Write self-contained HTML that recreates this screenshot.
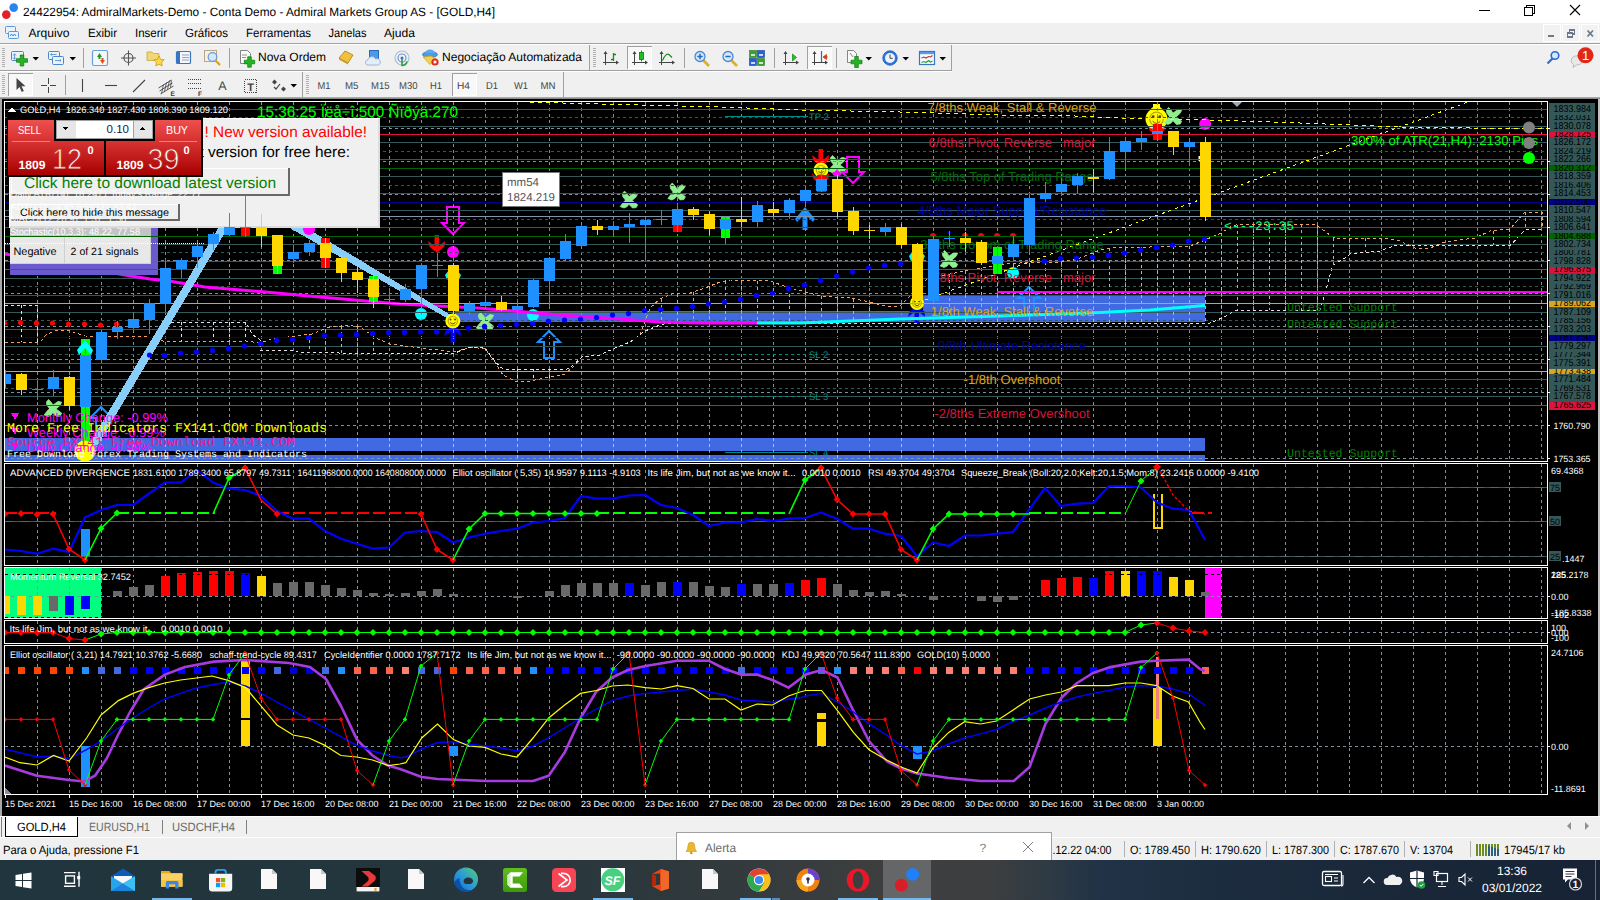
<!DOCTYPE html>
<html lang="pt"><head><meta charset="utf-8"><title>24422954: AdmiralMarkets-Demo - [GOLD,H4]</title>
<style>
html,body{margin:0;padding:0;background:#000;width:1600px;height:900px;overflow:hidden}
svg{display:block;position:absolute;left:0;top:0}
text{white-space:pre}
</style></head><body>
<svg width="1600" height="900" viewBox="0 0 1600 900" shape-rendering="crispEdges" text-rendering="geometricPrecision"><defs><clipPath id="mainclip"><rect x="5" y="102" width="1542" height="359"/></clipPath><clipPath id="s1"><rect x="5" y="464" width="1542" height="101"/></clipPath><clipPath id="s2"><rect x="5" y="568" width="1542" height="50"/></clipPath><clipPath id="s3"><rect x="5" y="621" width="1542" height="22"/></clipPath><clipPath id="s4"><rect x="5" y="646" width="1542" height="148"/></clipPath></defs>
<rect x="0" y="97" width="1600" height="719" fill="#a8a8a8"/>
<rect x="2" y="99" width="1596" height="717" fill="#000000"/>
<g clip-path="url(#mainclip)">
<!-- bands -->
<rect x="5" y="438" width="1200" height="13" fill="#4169e1"/>
<rect x="5" y="455" width="1200" height="6" fill="#4169e1"/>
<rect x="455" y="311" width="473" height="11" fill="#4169e1"/>
<rect x="923" y="296" width="282" height="26" fill="#4169e1"/>
<g shape-rendering="geometricPrecision">
<!-- symbols -->
<polygon points="48.5,399.5 50.8,401.8 55.5,408.5 61.7,413.2 60.2,416.0 56.5,416.4 51.5,411.2 46.8,405.0 46.4,402.0" fill="#90ee90" stroke="#90ee90" stroke-width="0.8" stroke-linejoin="round"/><polygon points="61.7,402.2 60.0,405.4 54.5,410.2 51.2,415.0 48.0,416.4 44.2,415.0 46.8,411.4 52.8,405.2 58.0,401.4" fill="#90ee90" stroke="#90ee90" stroke-width="0.8" stroke-linejoin="round"/>
<path d="M96,436 H106 V418 H112.0 L101,407 L90.0,418 H96 Z" fill="none" stroke="#1e90ff" stroke-width="2" stroke-linejoin="miter"/>
<circle cx="309" cy="229" r="6" fill="#ff00ff"/>
<path d="M447,207 H459 V223 H464.0 L453,234 L442.0,223 H447 Z" fill="none" stroke="#ff00ff" stroke-width="2" stroke-linejoin="miter"/>
<path d="M434.5,235 H439 V246 L445,241 L444.5,246.5 L437.5,252.5 H436.5 L429.5,246.5 L428,241 L434.5,246 Z" fill="#ff0000"/>
<circle cx="453" cy="252" r="6" fill="#ff00ff"/>
<path d="M453,265 L461,275 L459,280 L453,273 L447,280 L445,275 Z" fill="#00ffff"/>
<circle cx="421" cy="314" r="6" fill="#00ffff"/>
<path d="M450.5,342.5 H455 V331.5 L461,336.5 L460.5,331.0 L453.5,325.0 H452.5 L445.5,331.0 L444,336.5 L450.5,331.5 Z" fill="#0000ff"/>
<polygon points="480.5,312.5 482.8,314.8 487.5,321.5 493.7,326.2 492.2,329.0 488.5,329.4 483.5,324.2 478.8,318.0 478.4,315.0" fill="#90ee90" stroke="#90ee90" stroke-width="0.8" stroke-linejoin="round"/><polygon points="493.7,315.2 492.0,318.4 486.5,323.2 483.2,328.0 480.0,329.4 476.2,328.0 478.8,324.4 484.8,318.2 490.0,314.4" fill="#90ee90" stroke="#90ee90" stroke-width="0.8" stroke-linejoin="round"/>
<circle cx="533" cy="315" r="6" fill="#00ffff"/>
<path d="M544,358 H554 V342 H560.0 L549,331 L538.0,342 H544 Z" fill="none" stroke="#1e90ff" stroke-width="2" stroke-linejoin="miter"/>
<polygon points="624.5,191.1 626.8,193.4 631.5,200.1 637.7,204.8 636.2,207.6 632.5,208.0 627.5,202.8 622.8,196.6 622.4,193.6" fill="#90ee90" stroke="#90ee90" stroke-width="0.8" stroke-linejoin="round"/><polygon points="637.7,193.8 636.0,197.0 630.5,201.8 627.2,206.6 624.0,208.0 620.2,206.6 622.8,203.0 628.8,196.8 634.0,193.0" fill="#90ee90" stroke="#90ee90" stroke-width="0.8" stroke-linejoin="round"/>
<polygon points="672.2,183.0 674.5,185.3 679.2,192.0 685.4,196.7 683.9,199.5 680.2,199.9 675.2,194.7 670.5,188.5 670.1,185.5" fill="#90ee90" stroke="#90ee90" stroke-width="0.8" stroke-linejoin="round"/><polygon points="685.4,185.7 683.7,188.9 678.2,193.7 674.9,198.5 671.7,199.9 667.9,198.5 670.5,194.9 676.5,188.7 681.7,184.9" fill="#90ee90" stroke="#90ee90" stroke-width="0.8" stroke-linejoin="round"/>
<path d="M802.5,230 V213 H807.5 V230 Z" fill="#1e90ff"/><path d="M805,207 L815,219 L813,222 L805,214 L797,222 L795,219 Z" fill="#1e90ff"/>
<path d="M818.5,149 H823 V160 L829,155 L828.5,160.5 L821.5,166.5 H820.5 L813.5,160.5 L812,155 L818.5,160 Z" fill="#ff0000"/>
<path d="M818.5,167.5 H823 V178.5 L829,173.5 L828.5,179.0 L821.5,185.0 H820.5 L813.5,179.0 L812,173.5 L818.5,178.5 Z" fill="#ff0000"/>
<circle cx="821" cy="170" r="7.5" fill="#ffff00"/><circle cx="821" cy="170" r="4.65" fill="none" stroke="#c8a000" stroke-width="1.2"/><circle cx="818.75" cy="168.5" r="0.9750000000000001" fill="#604000"/><circle cx="823.25" cy="168.5" r="0.9750000000000001" fill="#604000"/><path d="M818.375,171.5 Q821,174.5 823.625,171.5" stroke="#604000" stroke-width="1" fill="none"/>
<circle cx="837" cy="171" r="5.5" fill="#ff00ff"/>
<polygon points="832.5,155.5 834.8,157.8 839.5,164.5 845.7,169.2 844.2,172.0 840.5,172.4 835.5,167.2 830.8,161.0 830.4,158.0" fill="#90ee90" stroke="#90ee90" stroke-width="0.8" stroke-linejoin="round"/><polygon points="845.7,158.2 844.0,161.4 838.5,166.2 835.2,171.0 832.0,172.4 828.2,171.0 830.8,167.4 836.8,161.2 842.0,157.4" fill="#90ee90" stroke="#90ee90" stroke-width="0.8" stroke-linejoin="round"/>
<path d="M847,157 H859 V172 H864.0 L853,183 L842.0,172 H847 Z" fill="none" stroke="#ff00ff" stroke-width="2" stroke-linejoin="miter"/>
<path d="M917,246 L925,256 L923,261 L917,254 L911,261 L909,256 Z" fill="#00ffff"/>
<polygon points="944.5,250.5 946.8,252.8 951.5,259.5 957.7,264.2 956.2,267.0 952.5,267.4 947.5,262.2 942.8,256.0 942.4,253.0" fill="#90ee90" stroke="#90ee90" stroke-width="0.8" stroke-linejoin="round"/><polygon points="957.7,253.2 956.0,256.4 950.5,261.2 947.2,266.0 944.0,267.4 940.2,266.0 942.8,262.4 948.8,256.2 954.0,252.4" fill="#90ee90" stroke="#90ee90" stroke-width="0.8" stroke-linejoin="round"/>
<circle cx="1013" cy="273" r="6" fill="#00ffff"/>
<path d="M914.5,323.0 H919 V312.0 L925,317.0 L924.5,311.5 L917.5,305.5 H916.5 L909.5,311.5 L908,317.0 L914.5,312.0 Z" fill="#0000ff"/>
<circle cx="917" cy="303" r="7" fill="#ffff00"/><circle cx="917" cy="303" r="4.34" fill="none" stroke="#c8a000" stroke-width="1.2"/><circle cx="914.9" cy="301.6" r="0.91" fill="#604000"/><circle cx="919.1" cy="301.6" r="0.91" fill="#604000"/><path d="M914.55,304.4 Q917,307.2 919.45,304.4" stroke="#604000" stroke-width="1" fill="none"/>
<path d="M1024,313 H1034 V298 H1040.0 L1029,287 L1018.0,298 H1024 Z" fill="none" stroke="#1e90ff" stroke-width="2" stroke-linejoin="miter"/>
<path d="M1154.5,119 H1159 V130 L1165,125 L1164.5,130.5 L1157.5,136.5 H1156.5 L1149.5,130.5 L1148,125 L1154.5,130 Z" fill="#ff0000"/>
<circle cx="1156.5" cy="119" r="11" fill="#ffff00"/><circle cx="1156.5" cy="119" r="6.82" fill="none" stroke="#c8a000" stroke-width="1.2"/><circle cx="1153.2" cy="116.8" r="1.4300000000000002" fill="#604000"/><circle cx="1159.8" cy="116.8" r="1.4300000000000002" fill="#604000"/><path d="M1152.65,121.2 Q1156.5,125.6 1160.35,121.2" stroke="#604000" stroke-width="1" fill="none"/>
<path d="M1150,109.5 h13 l-3,-2.5 v-3 h-7 v3 z" fill="#ffff00"/>
<polygon points="1168.5,107.5 1170.8,109.8 1175.5,116.5 1181.7,121.2 1180.2,124.0 1176.5,124.4 1171.5,119.2 1166.8,113.0 1166.4,110.0" fill="#90ee90" stroke="#90ee90" stroke-width="0.8" stroke-linejoin="round"/><polygon points="1181.7,110.2 1180.0,113.4 1174.5,118.2 1171.2,123.0 1168.0,124.4 1164.2,123.0 1166.8,119.4 1172.8,113.2 1178.0,109.4" fill="#90ee90" stroke="#90ee90" stroke-width="0.8" stroke-linejoin="round"/>
<circle cx="1205.2" cy="124" r="6" fill="#ff00ff"/>
<rect x="1198.5" y="156" width="1.5" height="5" fill="#fff"/>
<path d="M1231,101 h12 l-6,6 z" fill="#a0a8b0"/>
</g>
<!-- grid -->
<line x1="5" y1="128.5" x2="1547" y2="128.5" stroke="#7f90a4" stroke-width="1" stroke-dasharray="3,3"/>
<line x1="5" y1="161.5" x2="1547" y2="161.5" stroke="#7f90a4" stroke-width="1" stroke-dasharray="3,3"/>
<line x1="5" y1="194.5" x2="1547" y2="194.5" stroke="#7f90a4" stroke-width="1" stroke-dasharray="3,3"/>
<line x1="5" y1="227.5" x2="1547" y2="227.5" stroke="#7f90a4" stroke-width="1" stroke-dasharray="3,3"/>
<line x1="5" y1="260.5" x2="1547" y2="260.5" stroke="#7f90a4" stroke-width="1" stroke-dasharray="3,3"/>
<line x1="5" y1="293.5" x2="1547" y2="293.5" stroke="#7f90a4" stroke-width="1" stroke-dasharray="3,3"/>
<line x1="5" y1="326.5" x2="1547" y2="326.5" stroke="#7f90a4" stroke-width="1" stroke-dasharray="3,3"/>
<line x1="5" y1="359.5" x2="1547" y2="359.5" stroke="#7f90a4" stroke-width="1" stroke-dasharray="3,3"/>
<line x1="5" y1="392.5" x2="1547" y2="392.5" stroke="#7f90a4" stroke-width="1" stroke-dasharray="3,3"/>
<line x1="5" y1="425.5" x2="1547" y2="425.5" stroke="#7f90a4" stroke-width="1" stroke-dasharray="3,3"/>
<line x1="5" y1="458.5" x2="1547" y2="458.5" stroke="#7f90a4" stroke-width="1" stroke-dasharray="3,3"/>
<line x1="37.5" y1="102" x2="37.5" y2="461" stroke="#7f90a4" stroke-width="1" stroke-dasharray="3,3"/>
<line x1="69.5" y1="102" x2="69.5" y2="461" stroke="#7f90a4" stroke-width="1" stroke-dasharray="3,3"/>
<line x1="101.5" y1="102" x2="101.5" y2="461" stroke="#7f90a4" stroke-width="1" stroke-dasharray="3,3"/>
<line x1="133.5" y1="102" x2="133.5" y2="461" stroke="#7f90a4" stroke-width="1" stroke-dasharray="3,3"/>
<line x1="165.5" y1="102" x2="165.5" y2="461" stroke="#7f90a4" stroke-width="1" stroke-dasharray="3,3"/>
<line x1="197.5" y1="102" x2="197.5" y2="461" stroke="#7f90a4" stroke-width="1" stroke-dasharray="3,3"/>
<line x1="229.5" y1="102" x2="229.5" y2="461" stroke="#7f90a4" stroke-width="1" stroke-dasharray="3,3"/>
<line x1="261.5" y1="102" x2="261.5" y2="461" stroke="#7f90a4" stroke-width="1" stroke-dasharray="3,3"/>
<line x1="293.5" y1="102" x2="293.5" y2="461" stroke="#7f90a4" stroke-width="1" stroke-dasharray="3,3"/>
<line x1="325.5" y1="102" x2="325.5" y2="461" stroke="#7f90a4" stroke-width="1" stroke-dasharray="3,3"/>
<line x1="357.5" y1="102" x2="357.5" y2="461" stroke="#7f90a4" stroke-width="1" stroke-dasharray="3,3"/>
<line x1="389.5" y1="102" x2="389.5" y2="461" stroke="#7f90a4" stroke-width="1" stroke-dasharray="3,3"/>
<line x1="421.5" y1="102" x2="421.5" y2="461" stroke="#7f90a4" stroke-width="1" stroke-dasharray="3,3"/>
<line x1="453.5" y1="102" x2="453.5" y2="461" stroke="#7f90a4" stroke-width="1" stroke-dasharray="3,3"/>
<line x1="485.5" y1="102" x2="485.5" y2="461" stroke="#7f90a4" stroke-width="1" stroke-dasharray="3,3"/>
<line x1="517.5" y1="102" x2="517.5" y2="461" stroke="#7f90a4" stroke-width="1" stroke-dasharray="3,3"/>
<line x1="549.5" y1="102" x2="549.5" y2="461" stroke="#7f90a4" stroke-width="1" stroke-dasharray="3,3"/>
<line x1="581.5" y1="102" x2="581.5" y2="461" stroke="#7f90a4" stroke-width="1" stroke-dasharray="3,3"/>
<line x1="613.5" y1="102" x2="613.5" y2="461" stroke="#7f90a4" stroke-width="1" stroke-dasharray="3,3"/>
<line x1="645.5" y1="102" x2="645.5" y2="461" stroke="#7f90a4" stroke-width="1" stroke-dasharray="3,3"/>
<line x1="677.5" y1="102" x2="677.5" y2="461" stroke="#7f90a4" stroke-width="1" stroke-dasharray="3,3"/>
<line x1="709.5" y1="102" x2="709.5" y2="461" stroke="#7f90a4" stroke-width="1" stroke-dasharray="3,3"/>
<line x1="741.5" y1="102" x2="741.5" y2="461" stroke="#7f90a4" stroke-width="1" stroke-dasharray="3,3"/>
<line x1="773.5" y1="102" x2="773.5" y2="461" stroke="#7f90a4" stroke-width="1" stroke-dasharray="3,3"/>
<line x1="805.5" y1="102" x2="805.5" y2="461" stroke="#7f90a4" stroke-width="1" stroke-dasharray="3,3"/>
<line x1="837.5" y1="102" x2="837.5" y2="461" stroke="#7f90a4" stroke-width="1" stroke-dasharray="3,3"/>
<line x1="869.5" y1="102" x2="869.5" y2="461" stroke="#7f90a4" stroke-width="1" stroke-dasharray="3,3"/>
<line x1="901.5" y1="102" x2="901.5" y2="461" stroke="#7f90a4" stroke-width="1" stroke-dasharray="3,3"/>
<line x1="933.5" y1="102" x2="933.5" y2="461" stroke="#7f90a4" stroke-width="1" stroke-dasharray="3,3"/>
<line x1="965.5" y1="102" x2="965.5" y2="461" stroke="#7f90a4" stroke-width="1" stroke-dasharray="3,3"/>
<line x1="997.5" y1="102" x2="997.5" y2="461" stroke="#7f90a4" stroke-width="1" stroke-dasharray="3,3"/>
<line x1="1029.5" y1="102" x2="1029.5" y2="461" stroke="#7f90a4" stroke-width="1" stroke-dasharray="3,3"/>
<line x1="1061.5" y1="102" x2="1061.5" y2="461" stroke="#7f90a4" stroke-width="1" stroke-dasharray="3,3"/>
<line x1="1093.5" y1="102" x2="1093.5" y2="461" stroke="#7f90a4" stroke-width="1" stroke-dasharray="3,3"/>
<line x1="1125.5" y1="102" x2="1125.5" y2="461" stroke="#7f90a4" stroke-width="1" stroke-dasharray="3,3"/>
<line x1="1157.5" y1="102" x2="1157.5" y2="461" stroke="#7f90a4" stroke-width="1" stroke-dasharray="3,3"/>
<line x1="1189.5" y1="102" x2="1189.5" y2="461" stroke="#7f90a4" stroke-width="1" stroke-dasharray="3,3"/>
<line x1="1221.5" y1="102" x2="1221.5" y2="461" stroke="#7f90a4" stroke-width="1" stroke-dasharray="3,3"/>
<line x1="1253.5" y1="102" x2="1253.5" y2="461" stroke="#7f90a4" stroke-width="1" stroke-dasharray="3,3"/>
<line x1="1285.5" y1="102" x2="1285.5" y2="461" stroke="#7f90a4" stroke-width="1" stroke-dasharray="3,3"/>
<line x1="1317.5" y1="102" x2="1317.5" y2="461" stroke="#7f90a4" stroke-width="1" stroke-dasharray="3,3"/>
<line x1="1349.5" y1="102" x2="1349.5" y2="461" stroke="#7f90a4" stroke-width="1" stroke-dasharray="3,3"/>
<line x1="1381.5" y1="102" x2="1381.5" y2="461" stroke="#7f90a4" stroke-width="1" stroke-dasharray="3,3"/>
<line x1="1413.5" y1="102" x2="1413.5" y2="461" stroke="#7f90a4" stroke-width="1" stroke-dasharray="3,3"/>
<line x1="1445.5" y1="102" x2="1445.5" y2="461" stroke="#7f90a4" stroke-width="1" stroke-dasharray="3,3"/>
<line x1="1477.5" y1="102" x2="1477.5" y2="461" stroke="#7f90a4" stroke-width="1" stroke-dasharray="3,3"/>
<line x1="1509.5" y1="102" x2="1509.5" y2="461" stroke="#7f90a4" stroke-width="1" stroke-dasharray="3,3"/>
<line x1="1541.5" y1="102" x2="1541.5" y2="461" stroke="#7f90a4" stroke-width="1" stroke-dasharray="3,3"/>
<!-- murrey grid -->
<line x1="5" y1="109.5" x2="1547" y2="109.5" stroke="#345858" stroke-width="1"/>
<line x1="5" y1="117.5" x2="1547" y2="117.5" stroke="#345858" stroke-width="1" stroke-dasharray="3,3"/>
<line x1="5" y1="126.5" x2="1547" y2="126.5" stroke="#345858" stroke-width="1"/>
<line x1="5" y1="142.5" x2="1547" y2="142.5" stroke="#345858" stroke-width="1"/>
<line x1="5" y1="151.5" x2="1547" y2="151.5" stroke="#345858" stroke-width="1" stroke-dasharray="3,3"/>
<line x1="5" y1="159.5" x2="1547" y2="159.5" stroke="#345858" stroke-width="1"/>
<line x1="5" y1="176.5" x2="1547" y2="176.5" stroke="#345858" stroke-width="1"/>
<line x1="5" y1="185.5" x2="1547" y2="185.5" stroke="#345858" stroke-width="1" stroke-dasharray="3,3"/>
<line x1="5" y1="193.5" x2="1547" y2="193.5" stroke="#345858" stroke-width="1"/>
<line x1="5" y1="210.5" x2="1547" y2="210.5" stroke="#345858" stroke-width="1"/>
<line x1="5" y1="219.5" x2="1547" y2="219.5" stroke="#345858" stroke-width="1" stroke-dasharray="3,3"/>
<line x1="5" y1="227.5" x2="1547" y2="227.5" stroke="#345858" stroke-width="1"/>
<line x1="5" y1="244.5" x2="1547" y2="244.5" stroke="#345858" stroke-width="1"/>
<line x1="5" y1="252.5" x2="1547" y2="252.5" stroke="#345858" stroke-width="1" stroke-dasharray="3,3"/>
<line x1="5" y1="261.5" x2="1547" y2="261.5" stroke="#345858" stroke-width="1"/>
<line x1="5" y1="278.5" x2="1547" y2="278.5" stroke="#345858" stroke-width="1"/>
<line x1="5" y1="286.5" x2="1547" y2="286.5" stroke="#345858" stroke-width="1" stroke-dasharray="3,3"/>
<line x1="5" y1="295.5" x2="1547" y2="295.5" stroke="#345858" stroke-width="1"/>
<line x1="5" y1="312.5" x2="1547" y2="312.5" stroke="#345858" stroke-width="1"/>
<line x1="5" y1="320.5" x2="1547" y2="320.5" stroke="#345858" stroke-width="1" stroke-dasharray="3,3"/>
<line x1="5" y1="329.5" x2="1547" y2="329.5" stroke="#345858" stroke-width="1"/>
<line x1="5" y1="346.5" x2="1547" y2="346.5" stroke="#345858" stroke-width="1"/>
<line x1="5" y1="354.5" x2="1547" y2="354.5" stroke="#345858" stroke-width="1" stroke-dasharray="3,3"/>
<line x1="5" y1="363.5" x2="1547" y2="363.5" stroke="#345858" stroke-width="1"/>
<line x1="5" y1="379.5" x2="1547" y2="379.5" stroke="#345858" stroke-width="1"/>
<line x1="5" y1="388.5" x2="1547" y2="388.5" stroke="#345858" stroke-width="1" stroke-dasharray="3,3"/>
<line x1="5" y1="396.5" x2="1547" y2="396.5" stroke="#345858" stroke-width="1"/>
<line x1="37.5" y1="438" x2="37.5" y2="451" stroke="#7be8a8" stroke-width="1" stroke-dasharray="3,3"/>
<line x1="37.5" y1="455" x2="37.5" y2="461" stroke="#7be8a8" stroke-width="1" stroke-dasharray="3,3"/>
<line x1="69.5" y1="438" x2="69.5" y2="451" stroke="#7be8a8" stroke-width="1" stroke-dasharray="3,3"/>
<line x1="69.5" y1="455" x2="69.5" y2="461" stroke="#7be8a8" stroke-width="1" stroke-dasharray="3,3"/>
<line x1="101.5" y1="438" x2="101.5" y2="451" stroke="#7be8a8" stroke-width="1" stroke-dasharray="3,3"/>
<line x1="101.5" y1="455" x2="101.5" y2="461" stroke="#7be8a8" stroke-width="1" stroke-dasharray="3,3"/>
<line x1="133.5" y1="438" x2="133.5" y2="451" stroke="#7be8a8" stroke-width="1" stroke-dasharray="3,3"/>
<line x1="133.5" y1="455" x2="133.5" y2="461" stroke="#7be8a8" stroke-width="1" stroke-dasharray="3,3"/>
<line x1="165.5" y1="438" x2="165.5" y2="451" stroke="#7be8a8" stroke-width="1" stroke-dasharray="3,3"/>
<line x1="165.5" y1="455" x2="165.5" y2="461" stroke="#7be8a8" stroke-width="1" stroke-dasharray="3,3"/>
<line x1="197.5" y1="438" x2="197.5" y2="451" stroke="#7be8a8" stroke-width="1" stroke-dasharray="3,3"/>
<line x1="197.5" y1="455" x2="197.5" y2="461" stroke="#7be8a8" stroke-width="1" stroke-dasharray="3,3"/>
<line x1="229.5" y1="438" x2="229.5" y2="451" stroke="#7be8a8" stroke-width="1" stroke-dasharray="3,3"/>
<line x1="229.5" y1="455" x2="229.5" y2="461" stroke="#7be8a8" stroke-width="1" stroke-dasharray="3,3"/>
<line x1="261.5" y1="438" x2="261.5" y2="451" stroke="#7be8a8" stroke-width="1" stroke-dasharray="3,3"/>
<line x1="261.5" y1="455" x2="261.5" y2="461" stroke="#7be8a8" stroke-width="1" stroke-dasharray="3,3"/>
<line x1="293.5" y1="438" x2="293.5" y2="451" stroke="#7be8a8" stroke-width="1" stroke-dasharray="3,3"/>
<line x1="293.5" y1="455" x2="293.5" y2="461" stroke="#7be8a8" stroke-width="1" stroke-dasharray="3,3"/>
<line x1="325.5" y1="438" x2="325.5" y2="451" stroke="#7be8a8" stroke-width="1" stroke-dasharray="3,3"/>
<line x1="325.5" y1="455" x2="325.5" y2="461" stroke="#7be8a8" stroke-width="1" stroke-dasharray="3,3"/>
<line x1="357.5" y1="438" x2="357.5" y2="451" stroke="#7be8a8" stroke-width="1" stroke-dasharray="3,3"/>
<line x1="357.5" y1="455" x2="357.5" y2="461" stroke="#7be8a8" stroke-width="1" stroke-dasharray="3,3"/>
<line x1="389.5" y1="438" x2="389.5" y2="451" stroke="#7be8a8" stroke-width="1" stroke-dasharray="3,3"/>
<line x1="389.5" y1="455" x2="389.5" y2="461" stroke="#7be8a8" stroke-width="1" stroke-dasharray="3,3"/>
<line x1="421.5" y1="438" x2="421.5" y2="451" stroke="#7be8a8" stroke-width="1" stroke-dasharray="3,3"/>
<line x1="421.5" y1="455" x2="421.5" y2="461" stroke="#7be8a8" stroke-width="1" stroke-dasharray="3,3"/>
<line x1="453.5" y1="438" x2="453.5" y2="451" stroke="#7be8a8" stroke-width="1" stroke-dasharray="3,3"/>
<line x1="453.5" y1="455" x2="453.5" y2="461" stroke="#7be8a8" stroke-width="1" stroke-dasharray="3,3"/>
<line x1="485.5" y1="438" x2="485.5" y2="451" stroke="#7be8a8" stroke-width="1" stroke-dasharray="3,3"/>
<line x1="485.5" y1="455" x2="485.5" y2="461" stroke="#7be8a8" stroke-width="1" stroke-dasharray="3,3"/>
<line x1="517.5" y1="438" x2="517.5" y2="451" stroke="#7be8a8" stroke-width="1" stroke-dasharray="3,3"/>
<line x1="517.5" y1="455" x2="517.5" y2="461" stroke="#7be8a8" stroke-width="1" stroke-dasharray="3,3"/>
<line x1="549.5" y1="438" x2="549.5" y2="451" stroke="#7be8a8" stroke-width="1" stroke-dasharray="3,3"/>
<line x1="549.5" y1="455" x2="549.5" y2="461" stroke="#7be8a8" stroke-width="1" stroke-dasharray="3,3"/>
<line x1="581.5" y1="438" x2="581.5" y2="451" stroke="#7be8a8" stroke-width="1" stroke-dasharray="3,3"/>
<line x1="581.5" y1="455" x2="581.5" y2="461" stroke="#7be8a8" stroke-width="1" stroke-dasharray="3,3"/>
<line x1="613.5" y1="438" x2="613.5" y2="451" stroke="#7be8a8" stroke-width="1" stroke-dasharray="3,3"/>
<line x1="613.5" y1="455" x2="613.5" y2="461" stroke="#7be8a8" stroke-width="1" stroke-dasharray="3,3"/>
<line x1="645.5" y1="438" x2="645.5" y2="451" stroke="#7be8a8" stroke-width="1" stroke-dasharray="3,3"/>
<line x1="645.5" y1="455" x2="645.5" y2="461" stroke="#7be8a8" stroke-width="1" stroke-dasharray="3,3"/>
<line x1="677.5" y1="438" x2="677.5" y2="451" stroke="#7be8a8" stroke-width="1" stroke-dasharray="3,3"/>
<line x1="677.5" y1="455" x2="677.5" y2="461" stroke="#7be8a8" stroke-width="1" stroke-dasharray="3,3"/>
<line x1="709.5" y1="438" x2="709.5" y2="451" stroke="#7be8a8" stroke-width="1" stroke-dasharray="3,3"/>
<line x1="709.5" y1="455" x2="709.5" y2="461" stroke="#7be8a8" stroke-width="1" stroke-dasharray="3,3"/>
<line x1="741.5" y1="438" x2="741.5" y2="451" stroke="#7be8a8" stroke-width="1" stroke-dasharray="3,3"/>
<line x1="741.5" y1="455" x2="741.5" y2="461" stroke="#7be8a8" stroke-width="1" stroke-dasharray="3,3"/>
<line x1="773.5" y1="438" x2="773.5" y2="451" stroke="#7be8a8" stroke-width="1" stroke-dasharray="3,3"/>
<line x1="773.5" y1="455" x2="773.5" y2="461" stroke="#7be8a8" stroke-width="1" stroke-dasharray="3,3"/>
<line x1="805.5" y1="438" x2="805.5" y2="451" stroke="#7be8a8" stroke-width="1" stroke-dasharray="3,3"/>
<line x1="805.5" y1="455" x2="805.5" y2="461" stroke="#7be8a8" stroke-width="1" stroke-dasharray="3,3"/>
<line x1="837.5" y1="438" x2="837.5" y2="451" stroke="#7be8a8" stroke-width="1" stroke-dasharray="3,3"/>
<line x1="837.5" y1="455" x2="837.5" y2="461" stroke="#7be8a8" stroke-width="1" stroke-dasharray="3,3"/>
<line x1="869.5" y1="438" x2="869.5" y2="451" stroke="#7be8a8" stroke-width="1" stroke-dasharray="3,3"/>
<line x1="869.5" y1="455" x2="869.5" y2="461" stroke="#7be8a8" stroke-width="1" stroke-dasharray="3,3"/>
<line x1="901.5" y1="438" x2="901.5" y2="451" stroke="#7be8a8" stroke-width="1" stroke-dasharray="3,3"/>
<line x1="901.5" y1="455" x2="901.5" y2="461" stroke="#7be8a8" stroke-width="1" stroke-dasharray="3,3"/>
<line x1="933.5" y1="438" x2="933.5" y2="451" stroke="#7be8a8" stroke-width="1" stroke-dasharray="3,3"/>
<line x1="933.5" y1="455" x2="933.5" y2="461" stroke="#7be8a8" stroke-width="1" stroke-dasharray="3,3"/>
<line x1="965.5" y1="438" x2="965.5" y2="451" stroke="#7be8a8" stroke-width="1" stroke-dasharray="3,3"/>
<line x1="965.5" y1="455" x2="965.5" y2="461" stroke="#7be8a8" stroke-width="1" stroke-dasharray="3,3"/>
<line x1="997.5" y1="438" x2="997.5" y2="451" stroke="#7be8a8" stroke-width="1" stroke-dasharray="3,3"/>
<line x1="997.5" y1="455" x2="997.5" y2="461" stroke="#7be8a8" stroke-width="1" stroke-dasharray="3,3"/>
<line x1="1029.5" y1="438" x2="1029.5" y2="451" stroke="#7be8a8" stroke-width="1" stroke-dasharray="3,3"/>
<line x1="1029.5" y1="455" x2="1029.5" y2="461" stroke="#7be8a8" stroke-width="1" stroke-dasharray="3,3"/>
<line x1="1061.5" y1="438" x2="1061.5" y2="451" stroke="#7be8a8" stroke-width="1" stroke-dasharray="3,3"/>
<line x1="1061.5" y1="455" x2="1061.5" y2="461" stroke="#7be8a8" stroke-width="1" stroke-dasharray="3,3"/>
<line x1="1093.5" y1="438" x2="1093.5" y2="451" stroke="#7be8a8" stroke-width="1" stroke-dasharray="3,3"/>
<line x1="1093.5" y1="455" x2="1093.5" y2="461" stroke="#7be8a8" stroke-width="1" stroke-dasharray="3,3"/>
<line x1="1125.5" y1="438" x2="1125.5" y2="451" stroke="#7be8a8" stroke-width="1" stroke-dasharray="3,3"/>
<line x1="1125.5" y1="455" x2="1125.5" y2="461" stroke="#7be8a8" stroke-width="1" stroke-dasharray="3,3"/>
<line x1="1157.5" y1="438" x2="1157.5" y2="451" stroke="#7be8a8" stroke-width="1" stroke-dasharray="3,3"/>
<line x1="1157.5" y1="455" x2="1157.5" y2="461" stroke="#7be8a8" stroke-width="1" stroke-dasharray="3,3"/>
<line x1="1189.5" y1="438" x2="1189.5" y2="451" stroke="#7be8a8" stroke-width="1" stroke-dasharray="3,3"/>
<line x1="1189.5" y1="455" x2="1189.5" y2="461" stroke="#7be8a8" stroke-width="1" stroke-dasharray="3,3"/>
<!-- cloud -->
<polyline points="5,342 40,342 47,334 58,330 70,331 85,336 150,337 160,340 166,342 246,341 260,343 272,339 312,334 330,327 352,325 360,327 376,338 390,344 420,348 455,352 470,347 485,349 495,362 503,375 515,381 530,381 545,378 565,374 575,365 582,357 600,355 615,348 630,342 640,335 645,322 650,308 660,299 672,294 690,293 705,288 720,282 730,280 770,281 790,288 810,293 820,296 850,298 870,302 885,306 900,306 908,298" fill="none" stroke="#f4a460" stroke-width="1" stroke-dasharray="3,3"/>
<polyline points="908,298 926,280 942,275.5 975,269 1000,264.5 1020,263 1060,262 1080,258 1100,250 1110,248 1190,246 1205,240 1221,233 1232,226 1240,224 1315,224 1330,235 1335,238 1385,238 1400,241 1415,248 1430,248 1445,242 1475,238 1490,231 1510,229 1525,212 1542,212 1542,228" fill="none" stroke="#f4a460" stroke-width="1" stroke-dasharray="3,3"/>
<polyline points="5,305 37,305 37,342" fill="none" stroke="#e8e0e0" stroke-width="1" stroke-dasharray="3,3"/>
<polyline points="165,322 246,322 252,334 260,340 260,350 294,350 298,352 380,354 400,353 455,353 470,347 485,348 490,355 500,367 505,369.5 565,369.5 570,368 582,357 600,355 615,348 630,342 645,331 660,325 668,323 1210,323 1222,318 1237,310 1320,310 1333,265 1345,258 1350,254 1380,251 1395,245.5 1510,245.5 1525,230 1542,229" fill="none" stroke="#e8e0e0" stroke-width="1" stroke-dasharray="3,3"/>
<line x1="661.5" y1="298.5833333333333" x2="661.5" y2="323" stroke="#f4a460" stroke-width="1" stroke-dasharray="3,3"/>
<line x1="677.5" y1="293.72222222222223" x2="677.5" y2="323" stroke="#f4a460" stroke-width="1" stroke-dasharray="3,3"/>
<line x1="693.5" y1="292.0" x2="693.5" y2="323" stroke="#f4a460" stroke-width="1" stroke-dasharray="3,3"/>
<line x1="709.5" y1="286.4" x2="709.5" y2="323" stroke="#f4a460" stroke-width="1" stroke-dasharray="3,3"/>
<line x1="725.5" y1="281.0" x2="725.5" y2="323" stroke="#f4a460" stroke-width="1" stroke-dasharray="3,3"/>
<line x1="741.5" y1="280.275" x2="741.5" y2="323" stroke="#f4a460" stroke-width="1" stroke-dasharray="3,3"/>
<line x1="757.5" y1="280.675" x2="757.5" y2="323" stroke="#f4a460" stroke-width="1" stroke-dasharray="3,3"/>
<line x1="773.5" y1="282.05" x2="773.5" y2="323" stroke="#f4a460" stroke-width="1" stroke-dasharray="3,3"/>
<line x1="789.5" y1="287.65" x2="789.5" y2="323" stroke="#f4a460" stroke-width="1" stroke-dasharray="3,3"/>
<line x1="805.5" y1="291.75" x2="805.5" y2="323" stroke="#f4a460" stroke-width="1" stroke-dasharray="3,3"/>
<line x1="821.5" y1="296.06666666666666" x2="821.5" y2="323" stroke="#f4a460" stroke-width="1" stroke-dasharray="3,3"/>
<line x1="837.5" y1="297.1333333333333" x2="837.5" y2="323" stroke="#f4a460" stroke-width="1" stroke-dasharray="3,3"/>
<line x1="853.5" y1="298.6" x2="853.5" y2="323" stroke="#f4a460" stroke-width="1" stroke-dasharray="3,3"/>
<line x1="869.5" y1="301.8" x2="869.5" y2="323" stroke="#f4a460" stroke-width="1" stroke-dasharray="3,3"/>
<line x1="949.5" y1="274.1212121212121" x2="949.5" y2="323.0" stroke="#f4a460" stroke-width="1" stroke-dasharray="3,3"/>
<line x1="965.5" y1="270.969696969697" x2="965.5" y2="323.0" stroke="#f4a460" stroke-width="1" stroke-dasharray="3,3"/>
<line x1="981.5" y1="267.92" x2="981.5" y2="323.0" stroke="#f4a460" stroke-width="1" stroke-dasharray="3,3"/>
<line x1="997.5" y1="265.04" x2="997.5" y2="323.0" stroke="#f4a460" stroke-width="1" stroke-dasharray="3,3"/>
<line x1="1013.5" y1="263.525" x2="1013.5" y2="323.0" stroke="#f4a460" stroke-width="1" stroke-dasharray="3,3"/>
<line x1="1029.5" y1="262.775" x2="1029.5" y2="323.0" stroke="#f4a460" stroke-width="1" stroke-dasharray="3,3"/>
<line x1="1045.5" y1="262.375" x2="1045.5" y2="323.0" stroke="#f4a460" stroke-width="1" stroke-dasharray="3,3"/>
<line x1="1061.5" y1="261.8" x2="1061.5" y2="323.0" stroke="#f4a460" stroke-width="1" stroke-dasharray="3,3"/>
<line x1="1077.5" y1="258.6" x2="1077.5" y2="323.0" stroke="#f4a460" stroke-width="1" stroke-dasharray="3,3"/>
<line x1="1093.5" y1="252.8" x2="1093.5" y2="323.0" stroke="#f4a460" stroke-width="1" stroke-dasharray="3,3"/>
<line x1="1109.5" y1="248.2" x2="1109.5" y2="323.0" stroke="#f4a460" stroke-width="1" stroke-dasharray="3,3"/>
<line x1="1125.5" y1="247.625" x2="1125.5" y2="323.0" stroke="#f4a460" stroke-width="1" stroke-dasharray="3,3"/>
<line x1="1141.5" y1="247.225" x2="1141.5" y2="323.0" stroke="#f4a460" stroke-width="1" stroke-dasharray="3,3"/>
<line x1="1157.5" y1="246.825" x2="1157.5" y2="323.0" stroke="#f4a460" stroke-width="1" stroke-dasharray="3,3"/>
<line x1="1173.5" y1="246.425" x2="1173.5" y2="323.0" stroke="#f4a460" stroke-width="1" stroke-dasharray="3,3"/>
<line x1="1189.5" y1="246.025" x2="1189.5" y2="323.0" stroke="#f4a460" stroke-width="1" stroke-dasharray="3,3"/>
<line x1="1205.5" y1="240.0" x2="1205.5" y2="323.0" stroke="#f4a460" stroke-width="1" stroke-dasharray="3,3"/>
<line x1="1221.5" y1="233.0" x2="1221.5" y2="318.4166666666667" stroke="#f4a460" stroke-width="1" stroke-dasharray="3,3"/>
<line x1="1237.5" y1="224.75" x2="1237.5" y2="310.0" stroke="#f4a460" stroke-width="1" stroke-dasharray="3,3"/>
<line x1="1253.5" y1="224.0" x2="1253.5" y2="310.0" stroke="#f4a460" stroke-width="1" stroke-dasharray="3,3"/>
<line x1="1269.5" y1="224.0" x2="1269.5" y2="310.0" stroke="#f4a460" stroke-width="1" stroke-dasharray="3,3"/>
<line x1="1285.5" y1="224.0" x2="1285.5" y2="310.0" stroke="#f4a460" stroke-width="1" stroke-dasharray="3,3"/>
<line x1="1301.5" y1="224.0" x2="1301.5" y2="310.0" stroke="#f4a460" stroke-width="1" stroke-dasharray="3,3"/>
<line x1="1317.5" y1="225.46666666666667" x2="1317.5" y2="310.0" stroke="#f4a460" stroke-width="1" stroke-dasharray="3,3"/>
<line x1="1333.5" y1="238" x2="1333.5" y2="265" stroke="#f4a460" stroke-width="1" stroke-dasharray="3,3"/>
<line x1="1349.5" y1="238" x2="1349.5" y2="255" stroke="#f4a460" stroke-width="1" stroke-dasharray="3,3"/>
<line x1="1365.5" y1="238" x2="1365.5" y2="252" stroke="#f4a460" stroke-width="1" stroke-dasharray="3,3"/>
<line x1="1381.5" y1="238" x2="1381.5" y2="251" stroke="#f4a460" stroke-width="1" stroke-dasharray="3,3"/>
<line x1="1493.5" y1="231" x2="1493.5" y2="245" stroke="#f4a460" stroke-width="1" stroke-dasharray="3,3"/>
<line x1="1509.5" y1="229" x2="1509.5" y2="245" stroke="#f4a460" stroke-width="1" stroke-dasharray="3,3"/>
<line x1="1525.5" y1="212" x2="1525.5" y2="230" stroke="#f4a460" stroke-width="1" stroke-dasharray="3,3"/>
<line x1="1541.5" y1="212" x2="1541.5" y2="229" stroke="#f4a460" stroke-width="1" stroke-dasharray="3,3"/>
<line x1="309.5" y1="334.375" x2="309.5" y2="353" stroke="#f4a460" stroke-width="1" stroke-dasharray="3,3"/>
<line x1="325.5" y1="328.94444444444446" x2="325.5" y2="353" stroke="#f4a460" stroke-width="1" stroke-dasharray="3,3"/>
<line x1="341.5" y1="326.0" x2="341.5" y2="353" stroke="#f4a460" stroke-width="1" stroke-dasharray="3,3"/>
<line x1="357.5" y1="326.25" x2="357.5" y2="353" stroke="#f4a460" stroke-width="1" stroke-dasharray="3,3"/>
<line x1="373.5" y1="335.9375" x2="373.5" y2="353" stroke="#f4a460" stroke-width="1" stroke-dasharray="3,3"/>
<line x1="181.5" y1="322" x2="181.5" y2="341" stroke="#e8e0e0" stroke-width="1" stroke-dasharray="3,3"/>
<line x1="213.5" y1="322" x2="213.5" y2="341" stroke="#e8e0e0" stroke-width="1" stroke-dasharray="3,3"/>
<line x1="229.5" y1="322" x2="229.5" y2="341" stroke="#e8e0e0" stroke-width="1" stroke-dasharray="3,3"/>
<line x1="245.5" y1="322" x2="245.5" y2="341" stroke="#e8e0e0" stroke-width="1" stroke-dasharray="3,3"/>
<line x1="21.5" y1="305" x2="21.5" y2="342" stroke="#e8e0e0" stroke-width="1" stroke-dasharray="3,3"/>
<line x1="517.5" y1="369" x2="517.5" y2="381" stroke="#e8e0e0" stroke-width="1" stroke-dasharray="3,3"/>
<line x1="533.5" y1="369" x2="533.5" y2="381" stroke="#e8e0e0" stroke-width="1" stroke-dasharray="3,3"/>
<line x1="549.5" y1="369" x2="549.5" y2="378" stroke="#e8e0e0" stroke-width="1" stroke-dasharray="3,3"/>
<polyline points="530,102 563,103 600,104 640,105 680,106 720,107 800,110 900,112 1000,115 1075,116 1120,118 1210,120 1300,123 1400,127 1547,129" fill="none" stroke="#ffff00" stroke-width="1" stroke-dasharray="4,4"/>
<line x1="925" y1="300" x2="1468" y2="102" stroke="#ffff00" stroke-dasharray="3,4"/>
<polyline points="5,254 128,275.5 150,279 172,281.5 205,287 260,291.5 320,297 400,304 478,308 560,315 620,319 660,322 700,323 757,323" fill="none" stroke="#ff00ff" stroke-width="3" shape-rendering="auto"/>
<polyline points="757,323 800,323 900,319 1000,316 1100,312.5 1150,310 1205,305.5" fill="none" stroke="#00ffff" stroke-width="3" shape-rendering="auto"/>
<line x1="997" y1="292" x2="1547" y2="292" stroke="#ff00ff" stroke-width="2"/>
<line x1="5" y1="216.5" x2="1547" y2="216.5" stroke="#8294aa" stroke-width="1"/>
<rect x="10" y="228" width="148" height="47" fill="#6a5acd"/>
<rect x="10" y="227" width="141" height="37" fill="#d0d0d0"/>
<rect x="10" y="227" width="141" height="10" fill="#c4c4c4"/>
<text x="10" y="234.7" font-size="9.6" fill="#ffffff" font-family="'Liberation Sans', sans-serif" text-anchor="start" textLength="130" lengthAdjust="spacingAndGlyphs">Stochastic(10,3,3): 48.22, 77.58</text>
<rect x="10" y="237" width="54" height="26" fill="#e8e8e8"/>
<rect x="65" y="237" width="85" height="26" fill="#e8e8e8"/>
<line x1="5" y1="243.5" x2="204" y2="243.5" stroke="#ffffff" stroke-width="1" stroke-dasharray="1,1"/>
<text x="13.5" y="255" font-size="10.8" fill="#000" font-family="'Liberation Sans', sans-serif" text-anchor="start" textLength="43" lengthAdjust="spacingAndGlyphs">Negative</text>
<text x="70.6" y="255" font-size="10.6" fill="#000" font-family="'Liberation Sans', sans-serif" text-anchor="start" textLength="68" lengthAdjust="spacingAndGlyphs">2 of 21 signals</text>
<line x1="5" y1="134.5" x2="1547" y2="134.5" stroke="#dc143c" stroke-width="1"/>
<line x1="5" y1="168.5" x2="1547" y2="168.5" stroke="#006400" stroke-width="1"/>
<line x1="5" y1="202.5" x2="1547" y2="202.5" stroke="#00008b" stroke-width="1"/>
<line x1="5" y1="236.5" x2="1547" y2="236.5" stroke="#006400" stroke-width="1"/>
<line x1="5" y1="269.5" x2="1547" y2="269.5" stroke="#dc143c" stroke-width="1"/>
<line x1="5" y1="303.5" x2="1547" y2="303.5" stroke="#daa520" stroke-width="1"/>
<line x1="5" y1="337.5" x2="1547" y2="337.5" stroke="#00008b" stroke-width="1"/>
<line x1="5" y1="371.5" x2="1547" y2="371.5" stroke="#daa520" stroke-width="1"/>
<line x1="5" y1="405.5" x2="1547" y2="405.5" stroke="#dc143c" stroke-width="1"/>
<line x1="86" y1="457" x2="223" y2="228" stroke="#87cefa" stroke-width="8"/>
<polygon points="285,214.9 452,315.7 452,321 285,225.3" fill="#87cefa"/>
<g shape-rendering="geometricPrecision"><circle cx="309" cy="229" r="6" fill="#ff00ff"/><circle cx="452.8" cy="321" r="7.5" fill="#ffff00"/><circle cx="452.8" cy="321" r="4.65" fill="none" stroke="#c8a000" stroke-width="1.2"/><circle cx="450.55" cy="319.5" r="0.9750000000000001" fill="#604000"/><circle cx="455.05" cy="319.5" r="0.9750000000000001" fill="#604000"/><path d="M450.175,322.5 Q452.8,325.5 455.425,322.5" stroke="#604000" stroke-width="1" fill="none"/></g>
<text x="1012" y="112" font-size="13" fill="#daa520" font-family="&apos;Liberation Sans&apos;, sans-serif" text-anchor="middle">7/8ths Weak, Stall &amp; Reverse</text>
<text x="1012" y="146.5" font-size="13" fill="#dc143c" font-family="&apos;Liberation Sans&apos;, sans-serif" text-anchor="middle">6/8ths Pivot, Reverse   major</text>
<text x="1012" y="180.5" font-size="13" fill="#007000" font-family="&apos;Liberation Sans&apos;, sans-serif" text-anchor="middle">5/8ths Top of Trading Range</text>
<text x="1012" y="214.5" font-size="13" fill="#0000a0" font-family="&apos;Liberation Sans&apos;, sans-serif" text-anchor="middle">4/8ths Major Support/Resistance</text>
<text x="1012" y="248.5" font-size="13" fill="#007000" font-family="&apos;Liberation Sans&apos;, sans-serif" text-anchor="middle">3/8ths Bottom of Trading Range</text>
<text x="1012" y="281.5" font-size="13" fill="#dc143c" font-family="&apos;Liberation Sans&apos;, sans-serif" text-anchor="middle">2/8ths Pivot, Reverse   major</text>
<text x="1012" y="315.5" font-size="13" fill="#daa520" font-family="&apos;Liberation Sans&apos;, sans-serif" text-anchor="middle">1/8th Weak, Stall &amp; Reverse</text>
<text x="1012" y="349.5" font-size="13" fill="#0000a0" font-family="&apos;Liberation Sans&apos;, sans-serif" text-anchor="middle">0/8th Ultimate Resistance</text>
<text x="1012" y="383.5" font-size="13" fill="#daa520" font-family="&apos;Liberation Sans&apos;, sans-serif" text-anchor="middle">-1/8th Overshoot</text>
<text x="1012" y="417.5" font-size="13" fill="#dc143c" font-family="&apos;Liberation Sans&apos;, sans-serif" text-anchor="middle">-2/8ths Extreme Overshoot</text>
<text x="1351" y="144.5" font-size="13.2" fill="#00ff00" font-family="'Liberation Sans', sans-serif" text-anchor="start" textLength="187" lengthAdjust="spacingAndGlyphs">300% of ATR(21,H4): 2130 Pips</text>
<text x="1224" y="230" font-size="13" fill="#00ff7f" font-family="'Liberation Mono', monospace" text-anchor="start" textLength="70" lengthAdjust="spacingAndGlyphs">&lt;---23:35</text>
<text x="1287" y="311" font-size="12" fill="#008000" font-family="'Liberation Mono', monospace" text-anchor="start" textLength="111" lengthAdjust="spacingAndGlyphs">Untested Support</text>
<text x="1287" y="328" font-size="12" fill="#008000" font-family="'Liberation Mono', monospace" text-anchor="start" textLength="111" lengthAdjust="spacingAndGlyphs">Untested Support</text>
<text x="1287" y="457" font-size="12" fill="#008000" font-family="'Liberation Mono', monospace" text-anchor="start" textLength="111" lengthAdjust="spacingAndGlyphs">Untested Support</text>
<line x1="725" y1="116.5" x2="808" y2="116.5" stroke="#008b8b" stroke-width="1"/>
<text x="809" y="120" font-size="9.5" fill="#008b8b" font-family="'Liberation Sans', sans-serif" text-anchor="start">TP 2</text>
<line x1="725" y1="354.5" x2="808" y2="354.5" stroke="#008b8b" stroke-width="1" stroke-dasharray="3,3"/>
<text x="809" y="358" font-size="9.5" fill="#008b8b" font-family="'Liberation Sans', sans-serif" text-anchor="start">SL 2</text>
<line x1="725" y1="396.5" x2="808" y2="396.5" stroke="#008b8b" stroke-width="1" stroke-dasharray="3,3"/>
<text x="809" y="400" font-size="9.5" fill="#008b8b" font-family="'Liberation Sans', sans-serif" text-anchor="start">SL 3</text>
<line x1="725" y1="452.5" x2="808" y2="452.5" stroke="#008b8b" stroke-width="1"/>
<text x="809" y="456" font-size="9.5" fill="#008b8b" font-family="'Liberation Sans', sans-serif" text-anchor="start">SL 4</text>
<circle cx="1529" cy="127.5" r="6" fill="#808080" shape-rendering="auto"/>
<circle cx="1529" cy="143" r="6" fill="#808080" shape-rendering="auto"/>
<circle cx="1529" cy="158" r="6" fill="#00ff00" shape-rendering="auto"/>
<g shape-rendering="geometricPrecision">
<circle cx="4.5" cy="323" r="2.6" fill="#ff0000"/>
<circle cx="20.5" cy="322.6" r="2.6" fill="#ff0000"/>
<circle cx="36.5" cy="323" r="2.6" fill="#ff0000"/>
<circle cx="52.5" cy="323" r="2.6" fill="#ff0000"/>
<circle cx="68.5" cy="324" r="2.6" fill="#ff0000"/>
<circle cx="84.5" cy="324" r="2.6" fill="#ff0000"/>
<circle cx="100.5" cy="325" r="2.6" fill="#ff0000"/>
<circle cx="116.5" cy="324" r="2.6" fill="#ff0000"/>
<circle cx="149.5" cy="355" r="2.6" fill="#0000ff"/>
<circle cx="164.5" cy="355.6" r="2.6" fill="#0000ff"/>
<circle cx="180.5" cy="353" r="2.6" fill="#0000ff"/>
<circle cx="196.5" cy="352" r="2.6" fill="#0000ff"/>
<circle cx="212.5" cy="350.4" r="2.6" fill="#0000ff"/>
<circle cx="228.5" cy="348.4" r="2.6" fill="#0000ff"/>
<circle cx="244.5" cy="346" r="2.6" fill="#0000ff"/>
<circle cx="260.5" cy="343.6" r="2.6" fill="#0000ff"/>
<circle cx="276.5" cy="340.4" r="2.6" fill="#0000ff"/>
<circle cx="292.5" cy="339.6" r="2.6" fill="#0000ff"/>
<circle cx="308.5" cy="337.6" r="2.6" fill="#0000ff"/>
<circle cx="324.5" cy="335.6" r="2.6" fill="#0000ff"/>
<circle cx="340.5" cy="335" r="2.6" fill="#0000ff"/>
<circle cx="356.5" cy="334.4" r="2.6" fill="#0000ff"/>
<circle cx="372.5" cy="333.6" r="2.6" fill="#0000ff"/>
<circle cx="388.5" cy="332.6" r="2.6" fill="#0000ff"/>
<circle cx="404.5" cy="332.4" r="2.6" fill="#0000ff"/>
<circle cx="420.5" cy="332" r="2.6" fill="#0000ff"/>
<circle cx="436.5" cy="332" r="2.6" fill="#0000ff"/>
<circle cx="468.5" cy="328" r="2.6" fill="#0000ff"/>
<circle cx="484.5" cy="326.4" r="2.6" fill="#0000ff"/>
<circle cx="500.5" cy="325.6" r="2.6" fill="#0000ff"/>
<circle cx="516.5" cy="324.4" r="2.6" fill="#0000ff"/>
<circle cx="532.5" cy="323.6" r="2.6" fill="#0000ff"/>
<circle cx="548.5" cy="321.2" r="2.6" fill="#0000ff"/>
<circle cx="564.5" cy="320" r="2.6" fill="#0000ff"/>
<circle cx="580.5" cy="319" r="2.6" fill="#0000ff"/>
<circle cx="596.5" cy="317.6" r="2.6" fill="#0000ff"/>
<circle cx="612.5" cy="315" r="2.6" fill="#0000ff"/>
<circle cx="628.5" cy="313.6" r="2.6" fill="#0000ff"/>
<circle cx="644.5" cy="310.6" r="2.6" fill="#0000ff"/>
<circle cx="660.5" cy="309.6" r="2.6" fill="#0000ff"/>
<circle cx="676.5" cy="308.4" r="2.6" fill="#0000ff"/>
<circle cx="692.5" cy="306.4" r="2.6" fill="#0000ff"/>
<circle cx="708.5" cy="304" r="2.6" fill="#0000ff"/>
<circle cx="724.5" cy="302" r="2.6" fill="#0000ff"/>
<circle cx="740.5" cy="299.3" r="2.6" fill="#0000ff"/>
<circle cx="756.5" cy="295.4" r="2.6" fill="#0000ff"/>
<circle cx="772.5" cy="293" r="2.6" fill="#0000ff"/>
<circle cx="788.5" cy="288.4" r="2.6" fill="#0000ff"/>
<circle cx="804.5" cy="285" r="2.6" fill="#0000ff"/>
<circle cx="820.5" cy="280.6" r="2.6" fill="#0000ff"/>
<circle cx="836.5" cy="276" r="2.6" fill="#0000ff"/>
<circle cx="852.5" cy="272" r="2.6" fill="#0000ff"/>
<circle cx="868.5" cy="268" r="2.6" fill="#0000ff"/>
<circle cx="884.5" cy="265.4" r="2.6" fill="#0000ff"/>
<circle cx="900.5" cy="264" r="2.6" fill="#0000ff"/>
<circle cx="1044.5" cy="261" r="2.6" fill="#0000ff"/>
<circle cx="1060.5" cy="258.6" r="2.6" fill="#0000ff"/>
<circle cx="1076.5" cy="258" r="2.6" fill="#0000ff"/>
<circle cx="1092.5" cy="257" r="2.6" fill="#0000ff"/>
<circle cx="1108.5" cy="255.4" r="2.6" fill="#0000ff"/>
<circle cx="1124.5" cy="253" r="2.6" fill="#0000ff"/>
<circle cx="1140.5" cy="250" r="2.6" fill="#0000ff"/>
<circle cx="1156.5" cy="247.4" r="2.6" fill="#0000ff"/>
<circle cx="1172.5" cy="245" r="2.6" fill="#0000ff"/>
<circle cx="1188.5" cy="241" r="2.6" fill="#0000ff"/>
<circle cx="1204.5" cy="239" r="2.6" fill="#0000ff"/>
<path d="M930,236 A3,3 0 0 1 936,236 Z" fill="#ff0000"/>
<path d="M962,236 A3,3 0 0 1 968,236 Z" fill="#ff0000"/>
<path d="M978,236 A3,3 0 0 1 984,236 Z" fill="#ff0000"/>
<path d="M994,236 A3,3 0 0 1 1000,236 Z" fill="#ff0000"/>
<path d="M1010,236 A3,3 0 0 1 1016,236 Z" fill="#ff0000"/>
<circle cx="949" cy="232.5" r="1.5" fill="#0000ff"/>
</g>
<rect x="9" y="118" width="371" height="110" fill="#f0f0f0"/>
<rect x="9" y="118" width="371" height="1" fill="#ffffff"/>
<rect x="9" y="118" width="1" height="110" fill="#ffffff"/>
<rect x="378" y="119" width="2" height="109" fill="#dcdcdc"/>
<rect x="10" y="226" width="370" height="2" fill="#dcdcdc"/>
<text x="204.5" y="137" font-size="15.4" fill="#ff0000" font-family="'Liberation Sans', sans-serif" text-anchor="start" textLength="162.5" lengthAdjust="spacingAndGlyphs">! New version available!</text>
<text x="350" y="156.5" font-size="15.4" fill="#000" font-family="'Liberation Sans', sans-serif" text-anchor="end">Get latest version for free here:</text>
<rect x="11" y="168" width="279" height="28" fill="#696969"/>
<rect x="11" y="168" width="277" height="26" fill="#ffffff"/>
<rect x="12" y="169" width="276" height="25" fill="#f0f0f0"/>
<text x="24" y="187.5" font-size="15.5" fill="#008000" font-family="'Liberation Sans', sans-serif" text-anchor="start" textLength="252" lengthAdjust="spacingAndGlyphs">Click here to download latest version</text>
<rect x="11" y="204" width="169" height="17" fill="#696969"/>
<rect x="11" y="204" width="167" height="15" fill="#ffffff"/>
<rect x="12" y="205" width="166" height="14" fill="#f0f0f0"/>
<text x="20" y="215.5" font-size="10.7" fill="#000" font-family="'Liberation Sans', sans-serif" text-anchor="start" textLength="149" lengthAdjust="spacingAndGlyphs">Click here to hide this message</text>
<text x="10.5" y="197" font-size="9.6" fill="#ffffff" font-family="'Liberation Sans', sans-serif" text-anchor="start" opacity="0.9" textLength="191" lengthAdjust="spacingAndGlyphs">Daily ATR(14): 18.2471 Today's Range: 22.77</text>
<text x="10.5" y="209.5" font-size="9.6" fill="#ffffff" font-family="'Liberation Sans', sans-serif" text-anchor="start" opacity="0.9" textLength="126" lengthAdjust="spacingAndGlyphs">ADX(12): 34.45 RSI(12): 43.43</text>
<text x="10.5" y="222" font-size="9.6" fill="#ffffff" font-family="'Liberation Sans', sans-serif" text-anchor="start" opacity="0.9" textLength="116" lengthAdjust="spacingAndGlyphs">MACD(12,26,9): 1.37, 1.50</text>
<!-- candles -->
<line x1="5.5" y1="370" x2="5.5" y2="388" stroke="#1e90ff" stroke-width="1"/>
<rect x="0" y="374" width="11" height="10" fill="#1e90ff"/>
<line x1="21.5" y1="373" x2="21.5" y2="395" stroke="#ffd700" stroke-width="1"/>
<rect x="16" y="374" width="11" height="16" fill="#ffd700"/>
<line x1="37.5" y1="380" x2="37.5" y2="400" stroke="#1e90ff" stroke-width="1"/>
<rect x="32" y="389" width="11" height="1" fill="#1e90ff"/>
<line x1="53.5" y1="370" x2="53.5" y2="396" stroke="#1e90ff" stroke-width="1"/>
<rect x="48" y="377" width="11" height="12" fill="#1e90ff"/>
<line x1="69.5" y1="376" x2="69.5" y2="410" stroke="#ffd700" stroke-width="1"/>
<rect x="64" y="377" width="11" height="29" fill="#ffd700"/>
<rect x="81" y="339" width="9" height="117" fill="#00ff00"/>
<line x1="85.5" y1="340" x2="85.5" y2="455" stroke="#1e90ff" stroke-width="1"/>
<rect x="80" y="355" width="11" height="52" fill="#1e90ff"/>
<line x1="101.5" y1="332" x2="101.5" y2="363" stroke="#1e90ff" stroke-width="1"/>
<rect x="96" y="332" width="11" height="28" fill="#1e90ff"/>
<line x1="117.5" y1="321" x2="117.5" y2="339" stroke="#1e90ff" stroke-width="1"/>
<rect x="112" y="327" width="11" height="5" fill="#1e90ff"/>
<line x1="133.5" y1="312" x2="133.5" y2="329" stroke="#1e90ff" stroke-width="1"/>
<rect x="128" y="319" width="11" height="9" fill="#1e90ff"/>
<line x1="149.5" y1="299" x2="149.5" y2="334" stroke="#1e90ff" stroke-width="1"/>
<rect x="144" y="303" width="11" height="17" fill="#1e90ff"/>
<line x1="165.5" y1="259" x2="165.5" y2="312" stroke="#1e90ff" stroke-width="1"/>
<rect x="160" y="268" width="11" height="36" fill="#1e90ff"/>
<line x1="181.5" y1="258" x2="181.5" y2="278" stroke="#1e90ff" stroke-width="1"/>
<rect x="176" y="260" width="11" height="9" fill="#1e90ff"/>
<line x1="197.5" y1="244" x2="197.5" y2="268" stroke="#1e90ff" stroke-width="1"/>
<rect x="192" y="246" width="11" height="11" fill="#1e90ff"/>
<line x1="213.5" y1="232" x2="213.5" y2="250" stroke="#1e90ff" stroke-width="1"/>
<rect x="208" y="234" width="11" height="10" fill="#1e90ff"/>
<line x1="229.5" y1="213" x2="229.5" y2="236" stroke="#1e90ff" stroke-width="1"/>
<rect x="224" y="227" width="11" height="8" fill="#1e90ff"/>
<rect x="241" y="228" width="9" height="8" fill="#ff0000"/>
<line x1="245.5" y1="195" x2="245.5" y2="237" stroke="#1e90ff" stroke-width="1"/>
<rect x="240" y="227" width="11" height="1" fill="#1e90ff"/>
<line x1="261.5" y1="214" x2="261.5" y2="247" stroke="#ffd700" stroke-width="1"/>
<rect x="256" y="227" width="11" height="9" fill="#ffd700"/>
<rect x="273" y="266" width="9" height="8" fill="#00ff00"/>
<line x1="277.5" y1="235" x2="277.5" y2="274" stroke="#ffd700" stroke-width="1"/>
<rect x="272" y="235" width="11" height="31" fill="#ffd700"/>
<line x1="293.5" y1="245" x2="293.5" y2="263" stroke="#1e90ff" stroke-width="1"/>
<rect x="288" y="252" width="11" height="7" fill="#1e90ff"/>
<line x1="309.5" y1="240" x2="309.5" y2="256" stroke="#1e90ff" stroke-width="1"/>
<rect x="304" y="243" width="11" height="9" fill="#1e90ff"/>
<rect x="321" y="238" width="9" height="30" fill="#ff0000"/>
<line x1="325.5" y1="238" x2="325.5" y2="268" stroke="#ffd700" stroke-width="1"/>
<rect x="320" y="243" width="11" height="15" fill="#ffd700"/>
<line x1="341.5" y1="255" x2="341.5" y2="282" stroke="#ffd700" stroke-width="1"/>
<rect x="336" y="258" width="11" height="15" fill="#ffd700"/>
<line x1="357.5" y1="264" x2="357.5" y2="293" stroke="#ffd700" stroke-width="1"/>
<rect x="352" y="272" width="11" height="8" fill="#ffd700"/>
<rect x="369" y="276" width="9" height="26" fill="#00ff00"/>
<line x1="373.5" y1="276" x2="373.5" y2="308" stroke="#ffd700" stroke-width="1"/>
<rect x="368" y="279" width="11" height="18" fill="#ffd700"/>
<line x1="389.5" y1="288" x2="389.5" y2="304" stroke="#1e90ff" stroke-width="1"/>
<rect x="384" y="299" width="11" height="1" fill="#1e90ff"/>
<line x1="405.5" y1="284" x2="405.5" y2="302" stroke="#1e90ff" stroke-width="1"/>
<rect x="400" y="289" width="11" height="11" fill="#1e90ff"/>
<line x1="421.5" y1="263" x2="421.5" y2="305" stroke="#1e90ff" stroke-width="1"/>
<rect x="416" y="265" width="11" height="24" fill="#1e90ff"/>
<line x1="437.5" y1="253" x2="437.5" y2="277" stroke="#1e90ff" stroke-width="1"/>
<rect x="432" y="265" width="11" height="1" fill="#1e90ff"/>
<line x1="453.5" y1="263" x2="453.5" y2="320" stroke="#ffd700" stroke-width="1"/>
<rect x="448" y="265" width="11" height="46" fill="#ffd700"/>
<line x1="469.5" y1="301" x2="469.5" y2="315" stroke="#1e90ff" stroke-width="1"/>
<rect x="464" y="304" width="11" height="7" fill="#1e90ff"/>
<line x1="485.5" y1="294" x2="485.5" y2="309" stroke="#1e90ff" stroke-width="1"/>
<rect x="480" y="302" width="11" height="4" fill="#1e90ff"/>
<line x1="501.5" y1="296" x2="501.5" y2="311" stroke="#ffd700" stroke-width="1"/>
<rect x="496" y="302" width="11" height="8" fill="#ffd700"/>
<line x1="517.5" y1="299" x2="517.5" y2="320" stroke="#1e90ff" stroke-width="1"/>
<rect x="512" y="306" width="11" height="4" fill="#1e90ff"/>
<line x1="533.5" y1="279" x2="533.5" y2="308" stroke="#1e90ff" stroke-width="1"/>
<rect x="528" y="280" width="11" height="27" fill="#1e90ff"/>
<line x1="549.5" y1="257" x2="549.5" y2="308" stroke="#1e90ff" stroke-width="1"/>
<rect x="544" y="258" width="11" height="23" fill="#1e90ff"/>
<line x1="565.5" y1="234" x2="565.5" y2="260" stroke="#1e90ff" stroke-width="1"/>
<rect x="560" y="241" width="11" height="18" fill="#1e90ff"/>
<line x1="581.5" y1="225" x2="581.5" y2="246" stroke="#1e90ff" stroke-width="1"/>
<rect x="576" y="226" width="11" height="20" fill="#1e90ff"/>
<line x1="597.5" y1="220" x2="597.5" y2="235" stroke="#ffd700" stroke-width="1"/>
<rect x="592" y="226" width="11" height="4" fill="#ffd700"/>
<line x1="613.5" y1="221" x2="613.5" y2="237" stroke="#1e90ff" stroke-width="1"/>
<rect x="608" y="226" width="11" height="4" fill="#1e90ff"/>
<line x1="629.5" y1="213" x2="629.5" y2="243" stroke="#1e90ff" stroke-width="1"/>
<rect x="624" y="224" width="11" height="3" fill="#1e90ff"/>
<line x1="645.5" y1="217" x2="645.5" y2="261" stroke="#1e90ff" stroke-width="1"/>
<rect x="640" y="220" width="11" height="5" fill="#1e90ff"/>
<line x1="661.5" y1="210" x2="661.5" y2="225" stroke="#1e90ff" stroke-width="1"/>
<rect x="656" y="219" width="11" height="1" fill="#1e90ff"/>
<rect x="673" y="225" width="9" height="7" fill="#ff0000"/>
<line x1="677.5" y1="203" x2="677.5" y2="232" stroke="#1e90ff" stroke-width="1"/>
<rect x="672" y="209" width="11" height="16" fill="#1e90ff"/>
<line x1="693.5" y1="207" x2="693.5" y2="220" stroke="#ffd700" stroke-width="1"/>
<rect x="688" y="209" width="11" height="6" fill="#ffd700"/>
<line x1="709.5" y1="212" x2="709.5" y2="235" stroke="#ffd700" stroke-width="1"/>
<rect x="704" y="214" width="11" height="15" fill="#ffd700"/>
<rect x="721" y="217" width="9" height="21" fill="#00ff00"/>
<line x1="725.5" y1="217" x2="725.5" y2="244" stroke="#1e90ff" stroke-width="1"/>
<rect x="720" y="219" width="11" height="10" fill="#1e90ff"/>
<line x1="741.5" y1="197" x2="741.5" y2="227" stroke="#ffd700" stroke-width="1"/>
<rect x="736" y="219" width="11" height="3" fill="#ffd700"/>
<line x1="757.5" y1="201" x2="757.5" y2="227" stroke="#1e90ff" stroke-width="1"/>
<rect x="752" y="205" width="11" height="17" fill="#1e90ff"/>
<line x1="773.5" y1="202" x2="773.5" y2="216" stroke="#ffd700" stroke-width="1"/>
<rect x="768" y="209" width="11" height="4" fill="#ffd700"/>
<line x1="789.5" y1="198" x2="789.5" y2="219" stroke="#1e90ff" stroke-width="1"/>
<rect x="784" y="200" width="11" height="13" fill="#1e90ff"/>
<line x1="805.5" y1="187" x2="805.5" y2="204" stroke="#1e90ff" stroke-width="1"/>
<rect x="800" y="190" width="11" height="11" fill="#1e90ff"/>
<rect x="817" y="175" width="9" height="17" fill="#ff0000"/>
<line x1="821.5" y1="170" x2="821.5" y2="192" stroke="#1e90ff" stroke-width="1"/>
<rect x="816" y="179" width="11" height="12" fill="#1e90ff"/>
<line x1="837.5" y1="175" x2="837.5" y2="217" stroke="#ffd700" stroke-width="1"/>
<rect x="832" y="179" width="11" height="33" fill="#ffd700"/>
<line x1="853.5" y1="207" x2="853.5" y2="235" stroke="#ffd700" stroke-width="1"/>
<rect x="848" y="211" width="11" height="20" fill="#ffd700"/>
<line x1="869.5" y1="225" x2="869.5" y2="239" stroke="#ffd700" stroke-width="1"/>
<rect x="864" y="230" width="11" height="1" fill="#ffd700"/>
<line x1="885.5" y1="223" x2="885.5" y2="236" stroke="#1e90ff" stroke-width="1"/>
<rect x="880" y="227" width="11" height="5" fill="#1e90ff"/>
<line x1="901.5" y1="224" x2="901.5" y2="248" stroke="#ffd700" stroke-width="1"/>
<rect x="896" y="227" width="11" height="18" fill="#ffd700"/>
<line x1="917.5" y1="243" x2="917.5" y2="303" stroke="#ffd700" stroke-width="1"/>
<rect x="912" y="244" width="11" height="56" fill="#ffd700"/>
<line x1="933.5" y1="236" x2="933.5" y2="301" stroke="#1e90ff" stroke-width="1"/>
<rect x="928" y="239" width="11" height="62" fill="#1e90ff"/>
<line x1="949.5" y1="231" x2="949.5" y2="247" stroke="#1e90ff" stroke-width="1"/>
<rect x="944" y="238" width="11" height="1" fill="#1e90ff"/>
<line x1="965.5" y1="232" x2="965.5" y2="252" stroke="#ffd700" stroke-width="1"/>
<rect x="960" y="238" width="11" height="5" fill="#ffd700"/>
<line x1="981.5" y1="240" x2="981.5" y2="265" stroke="#ffd700" stroke-width="1"/>
<rect x="976" y="242" width="11" height="21" fill="#ffd700"/>
<rect x="993" y="247" width="9" height="27" fill="#00ff00"/>
<line x1="997.5" y1="247" x2="997.5" y2="274" stroke="#1e90ff" stroke-width="1"/>
<rect x="992" y="256" width="11" height="8" fill="#1e90ff"/>
<line x1="1013.5" y1="236" x2="1013.5" y2="261" stroke="#1e90ff" stroke-width="1"/>
<rect x="1008" y="244" width="11" height="13" fill="#1e90ff"/>
<line x1="1029.5" y1="194" x2="1029.5" y2="253" stroke="#1e90ff" stroke-width="1"/>
<rect x="1024" y="198" width="11" height="47" fill="#1e90ff"/>
<line x1="1045.5" y1="182" x2="1045.5" y2="202" stroke="#1e90ff" stroke-width="1"/>
<rect x="1040" y="193" width="11" height="6" fill="#1e90ff"/>
<line x1="1061.5" y1="178" x2="1061.5" y2="196" stroke="#1e90ff" stroke-width="1"/>
<rect x="1056" y="184" width="11" height="8" fill="#1e90ff"/>
<line x1="1077.5" y1="173" x2="1077.5" y2="194" stroke="#1e90ff" stroke-width="1"/>
<rect x="1072" y="176" width="11" height="9" fill="#1e90ff"/>
<line x1="1093.5" y1="169" x2="1093.5" y2="192" stroke="#ffd700" stroke-width="1"/>
<rect x="1088" y="177" width="11" height="2" fill="#ffd700"/>
<line x1="1109.5" y1="137" x2="1109.5" y2="180" stroke="#1e90ff" stroke-width="1"/>
<rect x="1104" y="151" width="11" height="28" fill="#1e90ff"/>
<line x1="1125.5" y1="137" x2="1125.5" y2="169" stroke="#1e90ff" stroke-width="1"/>
<rect x="1120" y="141" width="11" height="11" fill="#1e90ff"/>
<line x1="1141.5" y1="131" x2="1141.5" y2="150" stroke="#1e90ff" stroke-width="1"/>
<rect x="1136" y="138" width="11" height="4" fill="#1e90ff"/>
<rect x="1153" y="124" width="9" height="16" fill="#ff0000"/>
<line x1="1157.5" y1="119" x2="1157.5" y2="140" stroke="#1e90ff" stroke-width="1"/>
<rect x="1152" y="131" width="11" height="3" fill="#1e90ff"/>
<line x1="1173.5" y1="131" x2="1173.5" y2="155" stroke="#ffd700" stroke-width="1"/>
<rect x="1168" y="131" width="11" height="16" fill="#ffd700"/>
<line x1="1189.5" y1="140" x2="1189.5" y2="166" stroke="#1e90ff" stroke-width="1"/>
<rect x="1184" y="142" width="11" height="5" fill="#1e90ff"/>
<line x1="1205.5" y1="137" x2="1205.5" y2="221" stroke="#ffd700" stroke-width="1"/>
<rect x="1200" y="142" width="11" height="75" fill="#ffd700"/>
<g shape-rendering="geometricPrecision">
<path d="M85,340 L93,350 L91,355 L85,348 L79,355 L77,350 Z" fill="#00ffff"/>
<circle cx="85" cy="451" r="10.5" fill="#ffff00"/>
</g>
<rect x="502" y="172" width="57" height="34" fill="#ffffff" stroke="#767676" stroke-width="1"/>
<text x="507" y="186" font-size="11.5" fill="#555" font-family="'Liberation Sans', sans-serif" text-anchor="start">mm54</text>
<text x="507" y="201" font-size="11.5" fill="#555" font-family="'Liberation Sans', sans-serif" text-anchor="start">1824.219</text>
<path d="M11,413 h8 l-4,7 z" fill="#ff00ff"/>
<text x="27" y="422" font-size="12.8" fill="#ff00ff" font-family="'Liberation Sans', sans-serif" text-anchor="start">Monthly Change: -0.99%</text>
<path d="M11,428 h8 l-4,7 z" fill="#ff00ff"/>
<text x="27" y="437" font-size="12.8" fill="#ff00ff" font-family="'Liberation Sans', sans-serif" text-anchor="start">Weekly Change: -0.99%</text>
<path d="M11,443 h8 l-4,7 z" fill="#ff00ff"/>
<text x="27" y="452" font-size="12.8" fill="#ff00ff" font-family="'Liberation Sans', sans-serif" text-anchor="start">Daily Change: -0.99%</text>
<text x="7" y="432" font-size="13.33" fill="#ffff00" font-family="'Liberation Mono', monospace" text-anchor="start">More Free Indicators FX141.COM Downloads</text>
<text x="7" y="446" font-size="13.33" fill="#ff1493" font-family="'Liberation Mono', monospace" text-anchor="start">Source FX141 Free Download FX141.COM</text>
<text x="7" y="457" font-size="10" fill="#ffffff" font-family="'Liberation Mono', monospace" text-anchor="start">Free Download Forex Trading Systems and Indicators</text>
<defs><linearGradient id="rg1" x1="0" y1="0" x2="0" y2="1"><stop offset="0" stop-color="#f05050"/><stop offset="1" stop-color="#d63030"/></linearGradient><linearGradient id="rg2" gradientUnits="userSpaceOnUse" x1="0" y1="141" x2="0" y2="175"><stop offset="0" stop-color="#d83434"/><stop offset="1" stop-color="#a80000"/></linearGradient></defs>
<rect x="7" y="114" width="196" height="63" fill="#000"/>
<rect x="8" y="119.5" width="46" height="22" fill="url(#rg1)"/>
<rect x="155" y="119.5" width="46" height="22" fill="url(#rg1)"/>
<rect x="8" y="141" width="96" height="34" fill="url(#rg2)"/>
<rect x="106" y="141" width="95" height="34" fill="url(#rg2)"/>
<line x1="12" y1="141.5" x2="50" y2="141.5" stroke="#f08080" stroke-width="1"/>
<line x1="159" y1="141.5" x2="197" y2="141.5" stroke="#f08080" stroke-width="1"/>
<text x="18" y="134" font-size="11.5" fill="#fff" font-family="'Liberation Sans', sans-serif" text-anchor="start" textLength="23" lengthAdjust="spacingAndGlyphs">SELL</text>
<text x="166" y="134" font-size="11.5" fill="#fff" font-family="'Liberation Sans', sans-serif" text-anchor="start" textLength="22" lengthAdjust="spacingAndGlyphs">BUY</text>
<rect x="56" y="119.5" width="97" height="19.5" fill="#a0a0a0"/>
<rect x="57" y="120.5" width="18.5" height="17.5" fill="#e6e6e6"/>
<rect x="76" y="120.5" width="57" height="17.5" fill="#ffffff"/>
<rect x="134" y="120.5" width="18" height="17.5" fill="#e6e6e6"/>
<path d="M62.5,127 h6 l-3,3.5 z" fill="#000"/><path d="M139.5,130 h6 l-3,-3.5 z" fill="#000"/>
<text x="129" y="132.5" font-size="11.5" fill="#102040" font-family="'Liberation Sans', sans-serif" text-anchor="end">0.10</text>
<text x="18.5" y="168.5" font-size="12" fill="#fff" font-family="'Liberation Sans', sans-serif" text-anchor="start" textLength="27" lengthAdjust="spacingAndGlyphs" font-weight="bold">1809</text>
<text x="52" y="168.5" font-size="29" fill="#fff" font-family="'Liberation Sans', sans-serif" text-anchor="start" stroke="url(#rg2)" stroke-width="0.9" textLength="30" lengthAdjust="spacingAndGlyphs">12</text>
<text x="87.5" y="153.5" font-size="11" fill="#fff" font-family="'Liberation Sans', sans-serif" text-anchor="start" font-weight="bold">0</text>
<text x="116.5" y="168.5" font-size="12" fill="#fff" font-family="'Liberation Sans', sans-serif" text-anchor="start" textLength="27" lengthAdjust="spacingAndGlyphs" font-weight="bold">1809</text>
<text x="147.5" y="168.5" font-size="29" fill="#fff" font-family="'Liberation Sans', sans-serif" text-anchor="start" stroke="url(#rg2)" stroke-width="0.9" textLength="32" lengthAdjust="spacingAndGlyphs">39</text>
<text x="183.5" y="153.5" font-size="11" fill="#fff" font-family="'Liberation Sans', sans-serif" text-anchor="start" font-weight="bold">0</text>
<path d="M8,112 l4,-5 l4,5 z" fill="#fff"/>
<text x="20" y="113" font-size="9.3" fill="#fff" font-family="'Liberation Sans', sans-serif" text-anchor="start" textLength="208" lengthAdjust="spacingAndGlyphs">GOLD,H4  1826.340 1827.430 1808.390 1809.120</text>
<text x="257" y="116.5" font-size="15.3" fill="#00ff00" font-family="'Liberation Sans', sans-serif" text-anchor="start" textLength="201" lengthAdjust="spacingAndGlyphs">15:36:25 Ïëå÷î:500 Ñïðýä:270</text>
</g>
<!-- price axis -->
<rect x="1549" y="103" width="46" height="298" fill="#345858"/>
<text x="1553.5" y="120.4" font-size="10" fill="#000" font-family="'Liberation Sans', sans-serif" text-anchor="start" textLength="37.5" lengthAdjust="spacingAndGlyphs">1832.031</text>
<text x="1553.5" y="154.4" font-size="10" fill="#000" font-family="'Liberation Sans', sans-serif" text-anchor="start" textLength="37.5" lengthAdjust="spacingAndGlyphs">1824.219</text>
<text x="1553.5" y="188.4" font-size="10" fill="#000" font-family="'Liberation Sans', sans-serif" text-anchor="start" textLength="37.5" lengthAdjust="spacingAndGlyphs">1816.406</text>
<text x="1553.5" y="222.4" font-size="10" fill="#000" font-family="'Liberation Sans', sans-serif" text-anchor="start" textLength="37.5" lengthAdjust="spacingAndGlyphs">1808.594</text>
<text x="1553.5" y="255.4" font-size="10" fill="#000" font-family="'Liberation Sans', sans-serif" text-anchor="start" textLength="37.5" lengthAdjust="spacingAndGlyphs">1800.781</text>
<text x="1553.5" y="289.4" font-size="10" fill="#000" font-family="'Liberation Sans', sans-serif" text-anchor="start" textLength="37.5" lengthAdjust="spacingAndGlyphs">1792.969</text>
<text x="1553.5" y="323.4" font-size="10" fill="#000" font-family="'Liberation Sans', sans-serif" text-anchor="start" textLength="37.5" lengthAdjust="spacingAndGlyphs">1785.156</text>
<text x="1553.5" y="357.4" font-size="10" fill="#000" font-family="'Liberation Sans', sans-serif" text-anchor="start" textLength="37.5" lengthAdjust="spacingAndGlyphs">1777.344</text>
<text x="1553.5" y="391.4" font-size="10" fill="#000" font-family="'Liberation Sans', sans-serif" text-anchor="start" textLength="37.5" lengthAdjust="spacingAndGlyphs">1769.531</text>
<rect x="1549" y="130" width="46" height="9" fill="#dc143c"/>
<text x="1553.5" y="137.4" font-size="10" fill="#000" font-family="'Liberation Sans', sans-serif" text-anchor="start" textLength="37.5" lengthAdjust="spacingAndGlyphs">1828.125</text>
<rect x="1549" y="164" width="46" height="9" fill="#006400"/>
<text x="1553.5" y="171.4" font-size="10" fill="#000" font-family="'Liberation Sans', sans-serif" text-anchor="start" textLength="37.5" lengthAdjust="spacingAndGlyphs">1820.312</text>
<rect x="1549" y="198" width="46" height="9" fill="#00008b"/>
<text x="1553.5" y="205.4" font-size="10" fill="#000" font-family="'Liberation Sans', sans-serif" text-anchor="start" textLength="37.5" lengthAdjust="spacingAndGlyphs">1812.500</text>
<rect x="1549" y="232" width="46" height="9" fill="#006400"/>
<text x="1553.5" y="239.4" font-size="10" fill="#000" font-family="'Liberation Sans', sans-serif" text-anchor="start" textLength="37.5" lengthAdjust="spacingAndGlyphs">1804.688</text>
<rect x="1549" y="265" width="46" height="9" fill="#dc143c"/>
<text x="1553.5" y="272.4" font-size="10" fill="#000" font-family="'Liberation Sans', sans-serif" text-anchor="start" textLength="37.5" lengthAdjust="spacingAndGlyphs">1796.875</text>
<rect x="1549" y="299" width="46" height="9" fill="#daa520"/>
<text x="1553.5" y="306.4" font-size="10" fill="#000" font-family="'Liberation Sans', sans-serif" text-anchor="start" textLength="37.5" lengthAdjust="spacingAndGlyphs">1789.062</text>
<rect x="1549" y="333" width="46" height="9" fill="#00008b"/>
<text x="1553.5" y="340.4" font-size="10" fill="#000" font-family="'Liberation Sans', sans-serif" text-anchor="start" textLength="37.5" lengthAdjust="spacingAndGlyphs">1781.250</text>
<rect x="1549" y="367" width="46" height="9" fill="#daa520"/>
<text x="1553.5" y="374.4" font-size="10" fill="#000" font-family="'Liberation Sans', sans-serif" text-anchor="start" textLength="37.5" lengthAdjust="spacingAndGlyphs">1773.438</text>
<rect x="1549" y="401" width="46" height="9" fill="#dc143c"/>
<text x="1553.5" y="408.4" font-size="10" fill="#000" font-family="'Liberation Sans', sans-serif" text-anchor="start" textLength="37.5" lengthAdjust="spacingAndGlyphs">1765.625</text>
<rect x="1549" y="104" width="46" height="11" fill="#345858"/>
<text x="1553.5" y="112.4" font-size="10" fill="#000" font-family="'Liberation Sans', sans-serif" text-anchor="start" textLength="37.5" lengthAdjust="spacingAndGlyphs">1833.984</text>
<rect x="1549" y="121" width="46" height="11" fill="#345858"/>
<text x="1553.5" y="129.4" font-size="10" fill="#000" font-family="'Liberation Sans', sans-serif" text-anchor="start" textLength="37.5" lengthAdjust="spacingAndGlyphs">1830.078</text>
<rect x="1549" y="137" width="46" height="11" fill="#345858"/>
<text x="1553.5" y="145.4" font-size="10" fill="#000" font-family="'Liberation Sans', sans-serif" text-anchor="start" textLength="37.5" lengthAdjust="spacingAndGlyphs">1826.172</text>
<rect x="1549" y="154" width="46" height="11" fill="#345858"/>
<text x="1553.5" y="162.4" font-size="10" fill="#000" font-family="'Liberation Sans', sans-serif" text-anchor="start" textLength="37.5" lengthAdjust="spacingAndGlyphs">1822.266</text>
<rect x="1549" y="171" width="46" height="11" fill="#345858"/>
<text x="1553.5" y="179.4" font-size="10" fill="#000" font-family="'Liberation Sans', sans-serif" text-anchor="start" textLength="37.5" lengthAdjust="spacingAndGlyphs">1818.359</text>
<rect x="1549" y="188" width="46" height="11" fill="#345858"/>
<text x="1553.5" y="196.4" font-size="10" fill="#000" font-family="'Liberation Sans', sans-serif" text-anchor="start" textLength="37.5" lengthAdjust="spacingAndGlyphs">1814.453</text>
<rect x="1549" y="205" width="46" height="11" fill="#345858"/>
<text x="1553.5" y="213.4" font-size="10" fill="#000" font-family="'Liberation Sans', sans-serif" text-anchor="start" textLength="37.5" lengthAdjust="spacingAndGlyphs">1810.547</text>
<rect x="1549" y="222" width="46" height="11" fill="#345858"/>
<text x="1553.5" y="230.4" font-size="10" fill="#000" font-family="'Liberation Sans', sans-serif" text-anchor="start" textLength="37.5" lengthAdjust="spacingAndGlyphs">1806.641</text>
<rect x="1549" y="239" width="46" height="11" fill="#345858"/>
<text x="1553.5" y="247.4" font-size="10" fill="#000" font-family="'Liberation Sans', sans-serif" text-anchor="start" textLength="37.5" lengthAdjust="spacingAndGlyphs">1802.734</text>
<rect x="1549" y="256" width="46" height="11" fill="#345858"/>
<text x="1553.5" y="264.4" font-size="10" fill="#000" font-family="'Liberation Sans', sans-serif" text-anchor="start" textLength="37.5" lengthAdjust="spacingAndGlyphs">1798.828</text>
<rect x="1549" y="273" width="46" height="11" fill="#345858"/>
<text x="1553.5" y="281.4" font-size="10" fill="#000" font-family="'Liberation Sans', sans-serif" text-anchor="start" textLength="37.5" lengthAdjust="spacingAndGlyphs">1794.922</text>
<rect x="1549" y="290" width="46" height="11" fill="#345858"/>
<text x="1553.5" y="298.4" font-size="10" fill="#000" font-family="'Liberation Sans', sans-serif" text-anchor="start" textLength="37.5" lengthAdjust="spacingAndGlyphs">1791.016</text>
<rect x="1549" y="307" width="46" height="11" fill="#345858"/>
<text x="1553.5" y="315.4" font-size="10" fill="#000" font-family="'Liberation Sans', sans-serif" text-anchor="start" textLength="37.5" lengthAdjust="spacingAndGlyphs">1787.109</text>
<rect x="1549" y="324" width="46" height="11" fill="#345858"/>
<text x="1553.5" y="332.4" font-size="10" fill="#000" font-family="'Liberation Sans', sans-serif" text-anchor="start" textLength="37.5" lengthAdjust="spacingAndGlyphs">1783.203</text>
<rect x="1549" y="341" width="46" height="11" fill="#345858"/>
<text x="1553.5" y="349.4" font-size="10" fill="#000" font-family="'Liberation Sans', sans-serif" text-anchor="start" textLength="37.5" lengthAdjust="spacingAndGlyphs">1779.297</text>
<rect x="1549" y="358" width="46" height="11" fill="#345858"/>
<text x="1553.5" y="366.4" font-size="10" fill="#000" font-family="'Liberation Sans', sans-serif" text-anchor="start" textLength="37.5" lengthAdjust="spacingAndGlyphs">1775.391</text>
<rect x="1549" y="374" width="46" height="11" fill="#345858"/>
<text x="1553.5" y="382.4" font-size="10" fill="#000" font-family="'Liberation Sans', sans-serif" text-anchor="start" textLength="37.5" lengthAdjust="spacingAndGlyphs">1771.484</text>
<rect x="1549" y="391" width="46" height="11" fill="#345858"/>
<text x="1553.5" y="399.4" font-size="10" fill="#000" font-family="'Liberation Sans', sans-serif" text-anchor="start" textLength="37.5" lengthAdjust="spacingAndGlyphs">1767.578</text>
<line x1="1548" y1="128.5" x2="1550" y2="128.5" stroke="#fff" stroke-width="1"/>
<line x1="1548" y1="161.5" x2="1550" y2="161.5" stroke="#fff" stroke-width="1"/>
<line x1="1548" y1="194.5" x2="1550" y2="194.5" stroke="#fff" stroke-width="1"/>
<line x1="1548" y1="227.5" x2="1550" y2="227.5" stroke="#fff" stroke-width="1"/>
<line x1="1548" y1="260.5" x2="1550" y2="260.5" stroke="#fff" stroke-width="1"/>
<line x1="1548" y1="293.5" x2="1550" y2="293.5" stroke="#fff" stroke-width="1"/>
<line x1="1548" y1="326.5" x2="1550" y2="326.5" stroke="#fff" stroke-width="1"/>
<line x1="1548" y1="359.5" x2="1550" y2="359.5" stroke="#fff" stroke-width="1"/>
<line x1="1548" y1="392.5" x2="1550" y2="392.5" stroke="#fff" stroke-width="1"/>
<line x1="1548" y1="425.5" x2="1550" y2="425.5" stroke="#fff" stroke-width="1"/>
<text x="1553.5" y="429" font-size="9" fill="#fff" font-family="'Liberation Sans', sans-serif" text-anchor="start" textLength="37" lengthAdjust="spacingAndGlyphs">1760.790</text>
<line x1="1548" y1="458.5" x2="1550" y2="458.5" stroke="#fff" stroke-width="1"/>
<text x="1553.5" y="462" font-size="9" fill="#fff" font-family="'Liberation Sans', sans-serif" text-anchor="start" textLength="37" lengthAdjust="spacingAndGlyphs">1753.365</text>
<g clip-path="url(#s1)">
<line x1="37.5" y1="464" x2="37.5" y2="565" stroke="#7f90a4" stroke-width="1" stroke-dasharray="3,3"/>
<line x1="69.5" y1="464" x2="69.5" y2="565" stroke="#7f90a4" stroke-width="1" stroke-dasharray="3,3"/>
<line x1="101.5" y1="464" x2="101.5" y2="565" stroke="#7f90a4" stroke-width="1" stroke-dasharray="3,3"/>
<line x1="133.5" y1="464" x2="133.5" y2="565" stroke="#7f90a4" stroke-width="1" stroke-dasharray="3,3"/>
<line x1="165.5" y1="464" x2="165.5" y2="565" stroke="#7f90a4" stroke-width="1" stroke-dasharray="3,3"/>
<line x1="197.5" y1="464" x2="197.5" y2="565" stroke="#7f90a4" stroke-width="1" stroke-dasharray="3,3"/>
<line x1="229.5" y1="464" x2="229.5" y2="565" stroke="#7f90a4" stroke-width="1" stroke-dasharray="3,3"/>
<line x1="261.5" y1="464" x2="261.5" y2="565" stroke="#7f90a4" stroke-width="1" stroke-dasharray="3,3"/>
<line x1="293.5" y1="464" x2="293.5" y2="565" stroke="#7f90a4" stroke-width="1" stroke-dasharray="3,3"/>
<line x1="325.5" y1="464" x2="325.5" y2="565" stroke="#7f90a4" stroke-width="1" stroke-dasharray="3,3"/>
<line x1="357.5" y1="464" x2="357.5" y2="565" stroke="#7f90a4" stroke-width="1" stroke-dasharray="3,3"/>
<line x1="389.5" y1="464" x2="389.5" y2="565" stroke="#7f90a4" stroke-width="1" stroke-dasharray="3,3"/>
<line x1="421.5" y1="464" x2="421.5" y2="565" stroke="#7f90a4" stroke-width="1" stroke-dasharray="3,3"/>
<line x1="453.5" y1="464" x2="453.5" y2="565" stroke="#7f90a4" stroke-width="1" stroke-dasharray="3,3"/>
<line x1="485.5" y1="464" x2="485.5" y2="565" stroke="#7f90a4" stroke-width="1" stroke-dasharray="3,3"/>
<line x1="517.5" y1="464" x2="517.5" y2="565" stroke="#7f90a4" stroke-width="1" stroke-dasharray="3,3"/>
<line x1="549.5" y1="464" x2="549.5" y2="565" stroke="#7f90a4" stroke-width="1" stroke-dasharray="3,3"/>
<line x1="581.5" y1="464" x2="581.5" y2="565" stroke="#7f90a4" stroke-width="1" stroke-dasharray="3,3"/>
<line x1="613.5" y1="464" x2="613.5" y2="565" stroke="#7f90a4" stroke-width="1" stroke-dasharray="3,3"/>
<line x1="645.5" y1="464" x2="645.5" y2="565" stroke="#7f90a4" stroke-width="1" stroke-dasharray="3,3"/>
<line x1="677.5" y1="464" x2="677.5" y2="565" stroke="#7f90a4" stroke-width="1" stroke-dasharray="3,3"/>
<line x1="709.5" y1="464" x2="709.5" y2="565" stroke="#7f90a4" stroke-width="1" stroke-dasharray="3,3"/>
<line x1="741.5" y1="464" x2="741.5" y2="565" stroke="#7f90a4" stroke-width="1" stroke-dasharray="3,3"/>
<line x1="773.5" y1="464" x2="773.5" y2="565" stroke="#7f90a4" stroke-width="1" stroke-dasharray="3,3"/>
<line x1="805.5" y1="464" x2="805.5" y2="565" stroke="#7f90a4" stroke-width="1" stroke-dasharray="3,3"/>
<line x1="837.5" y1="464" x2="837.5" y2="565" stroke="#7f90a4" stroke-width="1" stroke-dasharray="3,3"/>
<line x1="869.5" y1="464" x2="869.5" y2="565" stroke="#7f90a4" stroke-width="1" stroke-dasharray="3,3"/>
<line x1="901.5" y1="464" x2="901.5" y2="565" stroke="#7f90a4" stroke-width="1" stroke-dasharray="3,3"/>
<line x1="933.5" y1="464" x2="933.5" y2="565" stroke="#7f90a4" stroke-width="1" stroke-dasharray="3,3"/>
<line x1="965.5" y1="464" x2="965.5" y2="565" stroke="#7f90a4" stroke-width="1" stroke-dasharray="3,3"/>
<line x1="997.5" y1="464" x2="997.5" y2="565" stroke="#7f90a4" stroke-width="1" stroke-dasharray="3,3"/>
<line x1="1029.5" y1="464" x2="1029.5" y2="565" stroke="#7f90a4" stroke-width="1" stroke-dasharray="3,3"/>
<line x1="1061.5" y1="464" x2="1061.5" y2="565" stroke="#7f90a4" stroke-width="1" stroke-dasharray="3,3"/>
<line x1="1093.5" y1="464" x2="1093.5" y2="565" stroke="#7f90a4" stroke-width="1" stroke-dasharray="3,3"/>
<line x1="1125.5" y1="464" x2="1125.5" y2="565" stroke="#7f90a4" stroke-width="1" stroke-dasharray="3,3"/>
<line x1="1157.5" y1="464" x2="1157.5" y2="565" stroke="#7f90a4" stroke-width="1" stroke-dasharray="3,3"/>
<line x1="1189.5" y1="464" x2="1189.5" y2="565" stroke="#7f90a4" stroke-width="1" stroke-dasharray="3,3"/>
<line x1="1221.5" y1="464" x2="1221.5" y2="565" stroke="#7f90a4" stroke-width="1" stroke-dasharray="3,3"/>
<line x1="1253.5" y1="464" x2="1253.5" y2="565" stroke="#7f90a4" stroke-width="1" stroke-dasharray="3,3"/>
<line x1="1285.5" y1="464" x2="1285.5" y2="565" stroke="#7f90a4" stroke-width="1" stroke-dasharray="3,3"/>
<line x1="1317.5" y1="464" x2="1317.5" y2="565" stroke="#7f90a4" stroke-width="1" stroke-dasharray="3,3"/>
<line x1="1349.5" y1="464" x2="1349.5" y2="565" stroke="#7f90a4" stroke-width="1" stroke-dasharray="3,3"/>
<line x1="1381.5" y1="464" x2="1381.5" y2="565" stroke="#7f90a4" stroke-width="1" stroke-dasharray="3,3"/>
<line x1="1413.5" y1="464" x2="1413.5" y2="565" stroke="#7f90a4" stroke-width="1" stroke-dasharray="3,3"/>
<line x1="1445.5" y1="464" x2="1445.5" y2="565" stroke="#7f90a4" stroke-width="1" stroke-dasharray="3,3"/>
<line x1="1477.5" y1="464" x2="1477.5" y2="565" stroke="#7f90a4" stroke-width="1" stroke-dasharray="3,3"/>
<line x1="1509.5" y1="464" x2="1509.5" y2="565" stroke="#7f90a4" stroke-width="1" stroke-dasharray="3,3"/>
<line x1="1541.5" y1="464" x2="1541.5" y2="565" stroke="#7f90a4" stroke-width="1" stroke-dasharray="3,3"/>
<line x1="5" y1="487.5" x2="1547" y2="487.5" stroke="#345858" stroke-width="1"/>
<line x1="5" y1="487.5" x2="1547" y2="487.5" stroke="#56676b" stroke-width="1" stroke-dasharray="9,6"/>
<line x1="5" y1="521.5" x2="1547" y2="521.5" stroke="#345858" stroke-width="1"/>
<line x1="5" y1="521.5" x2="1547" y2="521.5" stroke="#56676b" stroke-width="1" stroke-dasharray="9,6"/>
<line x1="5" y1="556.5" x2="1547" y2="556.5" stroke="#345858" stroke-width="1"/>
<line x1="5" y1="556.5" x2="1547" y2="556.5" stroke="#56676b" stroke-width="1" stroke-dasharray="9,6"/>
<rect x="81" y="529" width="9" height="27" fill="#1e90ff"/>
<path d="M1153.5,494 V528 H1161.5 V494" fill="none" stroke="#ffd700" stroke-width="2"/>
<line x1="5" y1="513" x2="56" y2="513" stroke="#ff0000" stroke-width="2" stroke-dasharray="12,4"/>
<line x1="117" y1="513" x2="215" y2="513" stroke="#00ff00" stroke-width="2" stroke-dasharray="12,4"/>
<line x1="277" y1="513" x2="424" y2="513" stroke="#ff0000" stroke-width="2" stroke-dasharray="12,4"/>
<line x1="597" y1="513" x2="790" y2="513" stroke="#00ff00" stroke-width="2" stroke-dasharray="12,4"/>
<line x1="1029" y1="513" x2="1126" y2="513" stroke="#00ff00" stroke-width="2" stroke-dasharray="12,4"/>
<line x1="1192" y1="513" x2="1212" y2="513" stroke="#ff0000" stroke-width="2" stroke-dasharray="12,4"/>
<polyline points="5,549.5 21,551 37,553.7 53,548.7 69,552 85,517.5 101,510 117,505 133,505 149,493.7 165,482.5 181,482.5 197,470 213,482.5 229,488.7 245,490 261,496 277,511 293,518.7 309,518.7 325,531 341,538.7 357,543.7 373,548.7 389,547.5 405,532.5 421,531 437,532 453,542.5 469,537.5 485,533.7 501,531 517,528.7 533,522.5 549,521 565,518 581,496 597,498.7 613,498.7 629,495.5 645,495 661,505 677,508 693,515 709,526 725,522.5 741,522.5 757,519 773,521 789,518.7 805,518 821,512.5 837,518.7 853,528.7 869,528.7 885,533.7 901,536 917,556 933,542.5 949,546 965,535.5 981,535.5 997,533.7 1013,532 1029,510 1045,488 1061,506 1077,503.7 1093,503 1109,486 1125,486 1141,487.5 1157,502.5 1173,508.7 1189,510 1205,540" fill="none" stroke="#0000ff" stroke-width="2.2" shape-rendering="auto" stroke-linejoin="round"/>
<polyline points="53,514 69,549 85,560" fill="none" stroke="#ff0000" stroke-width="1.6" shape-rendering="auto"/>
<path d="M49.6,514.0 L53,510.6 L56.4,514.0 L53,517.4 Z" fill="#ff0000" shape-rendering="auto"/>
<path d="M65.6,549.0 L69,545.6 L72.4,549.0 L69,552.4 Z" fill="#ff0000" shape-rendering="auto"/>
<path d="M81.6,560.0 L85,556.6 L88.4,560.0 L85,563.4 Z" fill="#ff0000" shape-rendering="auto"/>
<polyline points="85,560 101,528.5 117,513" fill="none" stroke="#00ff00" stroke-width="1.6" shape-rendering="auto"/>
<path d="M97.6,528.5 L101,525.1 L104.4,528.5 L101,531.9 Z" fill="#00ff00" shape-rendering="auto"/>
<path d="M113.6,513.0 L117,509.6 L120.4,513.0 L117,516.4 Z" fill="#00ff00" shape-rendering="auto"/>
<polyline points="213,514 229,478 245,468" fill="none" stroke="#00ff00" stroke-width="1.6" shape-rendering="auto"/>
<path d="M225.6,478.0 L229,474.6 L232.4,478.0 L229,481.4 Z" fill="#00ff00" shape-rendering="auto"/>
<path d="M241.6,468.0 L245,464.6 L248.4,468.0 L245,471.4 Z" fill="#00ff00" shape-rendering="auto"/>
<polyline points="245,468 261,500 277,514" fill="none" stroke="#ff0000" stroke-width="1.6" shape-rendering="auto"/>
<path d="M241.6,468.0 L245,464.6 L248.4,468.0 L245,471.4 Z" fill="#ff0000" shape-rendering="auto"/>
<path d="M273.6,514.0 L277,510.6 L280.4,514.0 L277,517.4 Z" fill="#ff0000" shape-rendering="auto"/>
<polyline points="421,514 437,549.5 453,560" fill="none" stroke="#ff0000" stroke-width="1.6" shape-rendering="auto"/>
<path d="M417.6,514.0 L421,510.6 L424.4,514.0 L421,517.4 Z" fill="#ff0000" shape-rendering="auto"/>
<path d="M433.6,549.5 L437,546.1 L440.4,549.5 L437,552.9 Z" fill="#ff0000" shape-rendering="auto"/>
<path d="M449.6,560.0 L453,556.6 L456.4,560.0 L453,563.4 Z" fill="#ff0000" shape-rendering="auto"/>
<polyline points="453,560 469,529 485,513.5 597,513.5" fill="none" stroke="#00ff00" stroke-width="1.6" shape-rendering="auto"/>
<path d="M465.6,529.0 L469,525.6 L472.4,529.0 L469,532.4 Z" fill="#00ff00" shape-rendering="auto"/>
<path d="M481.6,513.5 L485,510.1 L488.4,513.5 L485,516.9 Z" fill="#00ff00" shape-rendering="auto"/>
<path d="M497.6,513.5 L501,510.1 L504.4,513.5 L501,516.9 Z" fill="#00ff00" shape-rendering="auto"/>
<path d="M513.6,513.5 L517,510.1 L520.4,513.5 L517,516.9 Z" fill="#00ff00" shape-rendering="auto"/>
<path d="M529.6,513.5 L533,510.1 L536.4,513.5 L533,516.9 Z" fill="#00ff00" shape-rendering="auto"/>
<path d="M545.6,513.5 L549,510.1 L552.4,513.5 L549,516.9 Z" fill="#00ff00" shape-rendering="auto"/>
<path d="M561.6,513.5 L565,510.1 L568.4,513.5 L565,516.9 Z" fill="#00ff00" shape-rendering="auto"/>
<path d="M577.6,513.5 L581,510.1 L584.4,513.5 L581,516.9 Z" fill="#00ff00" shape-rendering="auto"/>
<path d="M593.6,513.5 L597,510.1 L600.4,513.5 L597,516.9 Z" fill="#00ff00" shape-rendering="auto"/>
<polyline points="789,514 805,480 821,468" fill="none" stroke="#00ff00" stroke-width="1.6" shape-rendering="auto"/>
<path d="M801.6,480.0 L805,476.6 L808.4,480.0 L805,483.4 Z" fill="#00ff00" shape-rendering="auto"/>
<path d="M817.6,468.0 L821,464.6 L824.4,468.0 L821,471.4 Z" fill="#00ff00" shape-rendering="auto"/>
<polyline points="821,468 837,499.5 853,514 885,514 901,549.5 917,560" fill="none" stroke="#ff0000" stroke-width="1.6" shape-rendering="auto"/>
<path d="M817.6,468.0 L821,464.6 L824.4,468.0 L821,471.4 Z" fill="#ff0000" shape-rendering="auto"/>
<path d="M833.6,499.5 L837,496.1 L840.4,499.5 L837,502.9 Z" fill="#ff0000" shape-rendering="auto"/>
<path d="M849.6,514.0 L853,510.6 L856.4,514.0 L853,517.4 Z" fill="#ff0000" shape-rendering="auto"/>
<path d="M865.6,514.0 L869,510.6 L872.4,514.0 L869,517.4 Z" fill="#ff0000" shape-rendering="auto"/>
<path d="M881.6,514.0 L885,510.6 L888.4,514.0 L885,517.4 Z" fill="#ff0000" shape-rendering="auto"/>
<path d="M897.6,549.5 L901,546.1 L904.4,549.5 L901,552.9 Z" fill="#ff0000" shape-rendering="auto"/>
<path d="M913.6,560.0 L917,556.6 L920.4,560.0 L917,563.4 Z" fill="#ff0000" shape-rendering="auto"/>
<polyline points="917,560 933,529 949,514 1029,514" fill="none" stroke="#00ff00" stroke-width="1.6" shape-rendering="auto"/>
<path d="M929.6,529.0 L933,525.6 L936.4,529.0 L933,532.4 Z" fill="#00ff00" shape-rendering="auto"/>
<path d="M945.6,514.0 L949,510.6 L952.4,514.0 L949,517.4 Z" fill="#00ff00" shape-rendering="auto"/>
<path d="M961.6,514.0 L965,510.6 L968.4,514.0 L965,517.4 Z" fill="#00ff00" shape-rendering="auto"/>
<path d="M977.6,514.0 L981,510.6 L984.4,514.0 L981,517.4 Z" fill="#00ff00" shape-rendering="auto"/>
<path d="M993.6,514.0 L997,510.6 L1000.4,514.0 L997,517.4 Z" fill="#00ff00" shape-rendering="auto"/>
<path d="M1009.6,514.0 L1013,510.6 L1016.4,514.0 L1013,517.4 Z" fill="#00ff00" shape-rendering="auto"/>
<polyline points="1125,514 1141,481 1157,467" fill="none" stroke="#00ff00" stroke-width="1" shape-rendering="auto"/>
<path d="M1137.5,481 L1141,477.5 L1144.5,481 L1141,484.5 Z" fill="#00ff00" shape-rendering="auto"/>
<polyline points="1157,467 1165,480 1173,495 1189,511 1205,514" fill="none" stroke="#ff0000" stroke-width="1.3" stroke-dasharray="3,2" shape-rendering="auto"/>
<path d="M1153,467 L1157,463 L1161,467 L1157,471 Z" fill="#ff0000" shape-rendering="auto"/>
<path d="M1.5,514 L5,510.5 L8.5,514 L5,517.5 Z" fill="#ff0000" shape-rendering="auto"/>
<path d="M17.5,513.5 L21,510.0 L24.5,513.5 L21,517.0 Z" fill="#ff0000" shape-rendering="auto"/>
<path d="M33.5,514.5 L37,511.0 L40.5,514.5 L37,518.0 Z" fill="#ff0000" shape-rendering="auto"/>
<text x="10" y="475.5" font-size="9.3" fill="#fff" font-family="'Liberation Sans', sans-serif" text-anchor="start" textLength="120" lengthAdjust="spacingAndGlyphs">ADVANCED DIVERGENCE</text>
<text x="133" y="475.5" font-size="9.3" fill="#fff" font-family="'Liberation Sans', sans-serif" text-anchor="start" textLength="158" lengthAdjust="spacingAndGlyphs">1831.6100 1789.3400 65.8797 49.7311</text>
<text x="297.5" y="475.5" font-size="9.3" fill="#fff" font-family="'Liberation Sans', sans-serif" text-anchor="start" textLength="148.5" lengthAdjust="spacingAndGlyphs">16411968000.0000 1640808000.0000</text>
<text x="452.5" y="475.5" font-size="9.3" fill="#fff" font-family="'Liberation Sans', sans-serif" text-anchor="start" textLength="188.2" lengthAdjust="spacingAndGlyphs">Elliot oscillator ( 5,35) 14.9597 9.1113 -4.9103</text>
<text x="647.5" y="475.5" font-size="9.3" fill="#fff" font-family="'Liberation Sans', sans-serif" text-anchor="start" textLength="148.2" lengthAdjust="spacingAndGlyphs">Its life Jim, but not as we know it...</text>
<text x="802" y="475.5" font-size="9.3" fill="#fff" font-family="'Liberation Sans', sans-serif" text-anchor="start" textLength="58.7" lengthAdjust="spacingAndGlyphs">0.0010 0.0010</text>
<text x="868" y="475.5" font-size="9.3" fill="#fff" font-family="'Liberation Sans', sans-serif" text-anchor="start" textLength="87" lengthAdjust="spacingAndGlyphs">RSI 49.3704 49.3704</text>
<text x="961" y="475.5" font-size="9.3" fill="#fff" font-family="'Liberation Sans', sans-serif" text-anchor="start" textLength="298" lengthAdjust="spacingAndGlyphs">Squeeze_Break (Boll:20,2.0;Kelt:20,1.5;Mom:8) 23.2416 0.0000 -9.4100</text>
</g>
<g clip-path="url(#s2)">
<rect x="5" y="568" width="96" height="50" fill="#00ff7f"/>
<rect x="1205" y="568" width="16" height="50" fill="#ff00ff"/>
<line x1="37.5" y1="568" x2="37.5" y2="618" stroke="#7f90a4" stroke-width="1" stroke-dasharray="3,3"/>
<line x1="69.5" y1="568" x2="69.5" y2="618" stroke="#7f90a4" stroke-width="1" stroke-dasharray="3,3"/>
<line x1="101.5" y1="568" x2="101.5" y2="618" stroke="#7f90a4" stroke-width="1" stroke-dasharray="3,3"/>
<line x1="133.5" y1="568" x2="133.5" y2="618" stroke="#7f90a4" stroke-width="1" stroke-dasharray="3,3"/>
<line x1="165.5" y1="568" x2="165.5" y2="618" stroke="#7f90a4" stroke-width="1" stroke-dasharray="3,3"/>
<line x1="197.5" y1="568" x2="197.5" y2="618" stroke="#7f90a4" stroke-width="1" stroke-dasharray="3,3"/>
<line x1="229.5" y1="568" x2="229.5" y2="618" stroke="#7f90a4" stroke-width="1" stroke-dasharray="3,3"/>
<line x1="261.5" y1="568" x2="261.5" y2="618" stroke="#7f90a4" stroke-width="1" stroke-dasharray="3,3"/>
<line x1="293.5" y1="568" x2="293.5" y2="618" stroke="#7f90a4" stroke-width="1" stroke-dasharray="3,3"/>
<line x1="325.5" y1="568" x2="325.5" y2="618" stroke="#7f90a4" stroke-width="1" stroke-dasharray="3,3"/>
<line x1="357.5" y1="568" x2="357.5" y2="618" stroke="#7f90a4" stroke-width="1" stroke-dasharray="3,3"/>
<line x1="389.5" y1="568" x2="389.5" y2="618" stroke="#7f90a4" stroke-width="1" stroke-dasharray="3,3"/>
<line x1="421.5" y1="568" x2="421.5" y2="618" stroke="#7f90a4" stroke-width="1" stroke-dasharray="3,3"/>
<line x1="453.5" y1="568" x2="453.5" y2="618" stroke="#7f90a4" stroke-width="1" stroke-dasharray="3,3"/>
<line x1="485.5" y1="568" x2="485.5" y2="618" stroke="#7f90a4" stroke-width="1" stroke-dasharray="3,3"/>
<line x1="517.5" y1="568" x2="517.5" y2="618" stroke="#7f90a4" stroke-width="1" stroke-dasharray="3,3"/>
<line x1="549.5" y1="568" x2="549.5" y2="618" stroke="#7f90a4" stroke-width="1" stroke-dasharray="3,3"/>
<line x1="581.5" y1="568" x2="581.5" y2="618" stroke="#7f90a4" stroke-width="1" stroke-dasharray="3,3"/>
<line x1="613.5" y1="568" x2="613.5" y2="618" stroke="#7f90a4" stroke-width="1" stroke-dasharray="3,3"/>
<line x1="645.5" y1="568" x2="645.5" y2="618" stroke="#7f90a4" stroke-width="1" stroke-dasharray="3,3"/>
<line x1="677.5" y1="568" x2="677.5" y2="618" stroke="#7f90a4" stroke-width="1" stroke-dasharray="3,3"/>
<line x1="709.5" y1="568" x2="709.5" y2="618" stroke="#7f90a4" stroke-width="1" stroke-dasharray="3,3"/>
<line x1="741.5" y1="568" x2="741.5" y2="618" stroke="#7f90a4" stroke-width="1" stroke-dasharray="3,3"/>
<line x1="773.5" y1="568" x2="773.5" y2="618" stroke="#7f90a4" stroke-width="1" stroke-dasharray="3,3"/>
<line x1="805.5" y1="568" x2="805.5" y2="618" stroke="#7f90a4" stroke-width="1" stroke-dasharray="3,3"/>
<line x1="837.5" y1="568" x2="837.5" y2="618" stroke="#7f90a4" stroke-width="1" stroke-dasharray="3,3"/>
<line x1="869.5" y1="568" x2="869.5" y2="618" stroke="#7f90a4" stroke-width="1" stroke-dasharray="3,3"/>
<line x1="901.5" y1="568" x2="901.5" y2="618" stroke="#7f90a4" stroke-width="1" stroke-dasharray="3,3"/>
<line x1="933.5" y1="568" x2="933.5" y2="618" stroke="#7f90a4" stroke-width="1" stroke-dasharray="3,3"/>
<line x1="965.5" y1="568" x2="965.5" y2="618" stroke="#7f90a4" stroke-width="1" stroke-dasharray="3,3"/>
<line x1="997.5" y1="568" x2="997.5" y2="618" stroke="#7f90a4" stroke-width="1" stroke-dasharray="3,3"/>
<line x1="1029.5" y1="568" x2="1029.5" y2="618" stroke="#7f90a4" stroke-width="1" stroke-dasharray="3,3"/>
<line x1="1061.5" y1="568" x2="1061.5" y2="618" stroke="#7f90a4" stroke-width="1" stroke-dasharray="3,3"/>
<line x1="1093.5" y1="568" x2="1093.5" y2="618" stroke="#7f90a4" stroke-width="1" stroke-dasharray="3,3"/>
<line x1="1125.5" y1="568" x2="1125.5" y2="618" stroke="#7f90a4" stroke-width="1" stroke-dasharray="3,3"/>
<line x1="1157.5" y1="568" x2="1157.5" y2="618" stroke="#7f90a4" stroke-width="1" stroke-dasharray="3,3"/>
<line x1="1189.5" y1="568" x2="1189.5" y2="618" stroke="#7f90a4" stroke-width="1" stroke-dasharray="3,3"/>
<line x1="1221.5" y1="568" x2="1221.5" y2="618" stroke="#7f90a4" stroke-width="1" stroke-dasharray="3,3"/>
<line x1="1253.5" y1="568" x2="1253.5" y2="618" stroke="#7f90a4" stroke-width="1" stroke-dasharray="3,3"/>
<line x1="1285.5" y1="568" x2="1285.5" y2="618" stroke="#7f90a4" stroke-width="1" stroke-dasharray="3,3"/>
<line x1="1317.5" y1="568" x2="1317.5" y2="618" stroke="#7f90a4" stroke-width="1" stroke-dasharray="3,3"/>
<line x1="1349.5" y1="568" x2="1349.5" y2="618" stroke="#7f90a4" stroke-width="1" stroke-dasharray="3,3"/>
<line x1="1381.5" y1="568" x2="1381.5" y2="618" stroke="#7f90a4" stroke-width="1" stroke-dasharray="3,3"/>
<line x1="1413.5" y1="568" x2="1413.5" y2="618" stroke="#7f90a4" stroke-width="1" stroke-dasharray="3,3"/>
<line x1="1445.5" y1="568" x2="1445.5" y2="618" stroke="#7f90a4" stroke-width="1" stroke-dasharray="3,3"/>
<line x1="1477.5" y1="568" x2="1477.5" y2="618" stroke="#7f90a4" stroke-width="1" stroke-dasharray="3,3"/>
<line x1="1509.5" y1="568" x2="1509.5" y2="618" stroke="#7f90a4" stroke-width="1" stroke-dasharray="3,3"/>
<line x1="1541.5" y1="568" x2="1541.5" y2="618" stroke="#7f90a4" stroke-width="1" stroke-dasharray="3,3"/>
<line x1="5" y1="596.5" x2="1547" y2="596.5" stroke="#7f90a4" stroke-width="1" stroke-dasharray="3,3"/>
<rect x="1" y="596" width="9" height="18" fill="#ffd700"/>
<rect x="17" y="596" width="9" height="19" fill="#ffd700"/>
<rect x="33" y="596" width="9" height="19" fill="#ffd700"/>
<rect x="49" y="596" width="9" height="14.5" fill="#696969"/>
<rect x="65" y="596" width="9" height="19" fill="#0000ff"/>
<rect x="81" y="596" width="9" height="13" fill="#0000ff"/>
<rect x="113" y="591" width="9" height="5" fill="#696969"/>
<rect x="129" y="587" width="9" height="9" fill="#696969"/>
<rect x="145" y="585" width="9" height="11" fill="#696969"/>
<rect x="161" y="576" width="9" height="20" fill="#ff0000"/>
<rect x="177" y="573" width="9" height="23" fill="#ff0000"/>
<rect x="193" y="572" width="9" height="24" fill="#ff0000"/>
<rect x="209" y="571" width="9" height="25" fill="#ff0000"/>
<rect x="225" y="571" width="9" height="25" fill="#ff0000"/>
<rect x="241" y="572.5" width="9" height="23.5" fill="#0000ff"/>
<rect x="257" y="576" width="9" height="20" fill="#ffd700"/>
<rect x="273" y="583" width="9" height="13" fill="#696969"/>
<rect x="289" y="582" width="9" height="14" fill="#696969"/>
<rect x="305" y="582" width="9" height="14" fill="#696969"/>
<rect x="321" y="585" width="9" height="11" fill="#696969"/>
<rect x="337" y="588" width="9" height="8" fill="#696969"/>
<rect x="353" y="590" width="9" height="6" fill="#696969"/>
<rect x="369" y="593" width="9" height="3" fill="#696969"/>
<rect x="385" y="594" width="9" height="2" fill="#696969"/>
<rect x="401" y="593" width="9" height="3" fill="#696969"/>
<rect x="417" y="591" width="9" height="5" fill="#696969"/>
<rect x="433" y="589" width="9" height="7" fill="#696969"/>
<rect x="449" y="594" width="9" height="2" fill="#696969"/>
<rect x="513" y="596" width="9" height="1.5" fill="#696969"/>
<rect x="545" y="591" width="9" height="5" fill="#696969"/>
<rect x="561" y="585" width="9" height="11" fill="#696969"/>
<rect x="577" y="583" width="9" height="13" fill="#696969"/>
<rect x="593" y="583" width="9" height="13" fill="#696969"/>
<rect x="609" y="583" width="9" height="13" fill="#696969"/>
<rect x="625" y="583" width="9" height="13" fill="#0000ff"/>
<rect x="641" y="585" width="9" height="11" fill="#696969"/>
<rect x="657" y="582" width="9" height="14" fill="#696969"/>
<rect x="673" y="582" width="9" height="14" fill="#0000ff"/>
<rect x="689" y="582" width="9" height="14" fill="#696969"/>
<rect x="705" y="586" width="9" height="10" fill="#696969"/>
<rect x="721" y="587" width="9" height="9" fill="#696969"/>
<rect x="737" y="584" width="9" height="12" fill="#0000ff"/>
<rect x="753" y="584" width="9" height="12" fill="#696969"/>
<rect x="769" y="584" width="9" height="12" fill="#696969"/>
<rect x="785" y="583" width="9" height="13" fill="#0000ff"/>
<rect x="801" y="580" width="9" height="16" fill="#ff0000"/>
<rect x="817" y="578" width="9" height="18" fill="#ff0000"/>
<rect x="833" y="584" width="9" height="12" fill="#696969"/>
<rect x="849" y="590" width="9" height="6" fill="#696969"/>
<rect x="865" y="592" width="9" height="4" fill="#696969"/>
<rect x="881" y="591" width="9" height="5" fill="#696969"/>
<rect x="897" y="594" width="9" height="2" fill="#696969"/>
<rect x="929" y="596" width="9" height="4" fill="#696969"/>
<rect x="977" y="596" width="9" height="4.5" fill="#696969"/>
<rect x="993" y="596" width="9" height="5.5" fill="#696969"/>
<rect x="1009" y="596" width="9" height="4" fill="#696969"/>
<rect x="1041" y="580" width="9" height="16" fill="#ff0000"/>
<rect x="1057" y="578" width="9" height="18" fill="#ff0000"/>
<rect x="1073" y="577" width="9" height="19" fill="#ff0000"/>
<rect x="1089" y="578" width="9" height="18" fill="#0000ff"/>
<rect x="1105" y="571" width="9" height="25" fill="#ff0000"/>
<rect x="1121" y="571" width="9" height="25" fill="#ffd700"/>
<rect x="1137" y="571" width="9" height="25" fill="#0000ff"/>
<rect x="1153" y="571" width="9" height="25" fill="#0000ff"/>
<rect x="1169" y="577" width="9" height="19" fill="#ffd700"/>
<rect x="1185" y="580" width="9" height="16" fill="#ffd700"/>
<rect x="1201" y="592" width="9" height="4" fill="#696969"/>
<line x1="5" y1="574.5" x2="1547" y2="574.5" stroke="#000" stroke-width="1" stroke-dasharray="3,3"/>
<line x1="5" y1="617.5" x2="102" y2="617.5" stroke="#000" stroke-width="1" stroke-dasharray="3,3"/>
<text x="10" y="580" font-size="9.3" fill="#fff" font-family="'Liberation Sans', sans-serif" text-anchor="start" textLength="121" lengthAdjust="spacingAndGlyphs">Momentum Reversal 32.7452</text>
</g>
<g clip-path="url(#s3)">
<line x1="37.5" y1="621" x2="37.5" y2="643" stroke="#7f90a4" stroke-width="1" stroke-dasharray="3,3"/>
<line x1="69.5" y1="621" x2="69.5" y2="643" stroke="#7f90a4" stroke-width="1" stroke-dasharray="3,3"/>
<line x1="101.5" y1="621" x2="101.5" y2="643" stroke="#7f90a4" stroke-width="1" stroke-dasharray="3,3"/>
<line x1="133.5" y1="621" x2="133.5" y2="643" stroke="#7f90a4" stroke-width="1" stroke-dasharray="3,3"/>
<line x1="165.5" y1="621" x2="165.5" y2="643" stroke="#7f90a4" stroke-width="1" stroke-dasharray="3,3"/>
<line x1="197.5" y1="621" x2="197.5" y2="643" stroke="#7f90a4" stroke-width="1" stroke-dasharray="3,3"/>
<line x1="229.5" y1="621" x2="229.5" y2="643" stroke="#7f90a4" stroke-width="1" stroke-dasharray="3,3"/>
<line x1="261.5" y1="621" x2="261.5" y2="643" stroke="#7f90a4" stroke-width="1" stroke-dasharray="3,3"/>
<line x1="293.5" y1="621" x2="293.5" y2="643" stroke="#7f90a4" stroke-width="1" stroke-dasharray="3,3"/>
<line x1="325.5" y1="621" x2="325.5" y2="643" stroke="#7f90a4" stroke-width="1" stroke-dasharray="3,3"/>
<line x1="357.5" y1="621" x2="357.5" y2="643" stroke="#7f90a4" stroke-width="1" stroke-dasharray="3,3"/>
<line x1="389.5" y1="621" x2="389.5" y2="643" stroke="#7f90a4" stroke-width="1" stroke-dasharray="3,3"/>
<line x1="421.5" y1="621" x2="421.5" y2="643" stroke="#7f90a4" stroke-width="1" stroke-dasharray="3,3"/>
<line x1="453.5" y1="621" x2="453.5" y2="643" stroke="#7f90a4" stroke-width="1" stroke-dasharray="3,3"/>
<line x1="485.5" y1="621" x2="485.5" y2="643" stroke="#7f90a4" stroke-width="1" stroke-dasharray="3,3"/>
<line x1="517.5" y1="621" x2="517.5" y2="643" stroke="#7f90a4" stroke-width="1" stroke-dasharray="3,3"/>
<line x1="549.5" y1="621" x2="549.5" y2="643" stroke="#7f90a4" stroke-width="1" stroke-dasharray="3,3"/>
<line x1="581.5" y1="621" x2="581.5" y2="643" stroke="#7f90a4" stroke-width="1" stroke-dasharray="3,3"/>
<line x1="613.5" y1="621" x2="613.5" y2="643" stroke="#7f90a4" stroke-width="1" stroke-dasharray="3,3"/>
<line x1="645.5" y1="621" x2="645.5" y2="643" stroke="#7f90a4" stroke-width="1" stroke-dasharray="3,3"/>
<line x1="677.5" y1="621" x2="677.5" y2="643" stroke="#7f90a4" stroke-width="1" stroke-dasharray="3,3"/>
<line x1="709.5" y1="621" x2="709.5" y2="643" stroke="#7f90a4" stroke-width="1" stroke-dasharray="3,3"/>
<line x1="741.5" y1="621" x2="741.5" y2="643" stroke="#7f90a4" stroke-width="1" stroke-dasharray="3,3"/>
<line x1="773.5" y1="621" x2="773.5" y2="643" stroke="#7f90a4" stroke-width="1" stroke-dasharray="3,3"/>
<line x1="805.5" y1="621" x2="805.5" y2="643" stroke="#7f90a4" stroke-width="1" stroke-dasharray="3,3"/>
<line x1="837.5" y1="621" x2="837.5" y2="643" stroke="#7f90a4" stroke-width="1" stroke-dasharray="3,3"/>
<line x1="869.5" y1="621" x2="869.5" y2="643" stroke="#7f90a4" stroke-width="1" stroke-dasharray="3,3"/>
<line x1="901.5" y1="621" x2="901.5" y2="643" stroke="#7f90a4" stroke-width="1" stroke-dasharray="3,3"/>
<line x1="933.5" y1="621" x2="933.5" y2="643" stroke="#7f90a4" stroke-width="1" stroke-dasharray="3,3"/>
<line x1="965.5" y1="621" x2="965.5" y2="643" stroke="#7f90a4" stroke-width="1" stroke-dasharray="3,3"/>
<line x1="997.5" y1="621" x2="997.5" y2="643" stroke="#7f90a4" stroke-width="1" stroke-dasharray="3,3"/>
<line x1="1029.5" y1="621" x2="1029.5" y2="643" stroke="#7f90a4" stroke-width="1" stroke-dasharray="3,3"/>
<line x1="1061.5" y1="621" x2="1061.5" y2="643" stroke="#7f90a4" stroke-width="1" stroke-dasharray="3,3"/>
<line x1="1093.5" y1="621" x2="1093.5" y2="643" stroke="#7f90a4" stroke-width="1" stroke-dasharray="3,3"/>
<line x1="1125.5" y1="621" x2="1125.5" y2="643" stroke="#7f90a4" stroke-width="1" stroke-dasharray="3,3"/>
<line x1="1157.5" y1="621" x2="1157.5" y2="643" stroke="#7f90a4" stroke-width="1" stroke-dasharray="3,3"/>
<line x1="1189.5" y1="621" x2="1189.5" y2="643" stroke="#7f90a4" stroke-width="1" stroke-dasharray="3,3"/>
<line x1="1221.5" y1="621" x2="1221.5" y2="643" stroke="#7f90a4" stroke-width="1" stroke-dasharray="3,3"/>
<line x1="1253.5" y1="621" x2="1253.5" y2="643" stroke="#7f90a4" stroke-width="1" stroke-dasharray="3,3"/>
<line x1="1285.5" y1="621" x2="1285.5" y2="643" stroke="#7f90a4" stroke-width="1" stroke-dasharray="3,3"/>
<line x1="1317.5" y1="621" x2="1317.5" y2="643" stroke="#7f90a4" stroke-width="1" stroke-dasharray="3,3"/>
<line x1="1349.5" y1="621" x2="1349.5" y2="643" stroke="#7f90a4" stroke-width="1" stroke-dasharray="3,3"/>
<line x1="1381.5" y1="621" x2="1381.5" y2="643" stroke="#7f90a4" stroke-width="1" stroke-dasharray="3,3"/>
<line x1="1413.5" y1="621" x2="1413.5" y2="643" stroke="#7f90a4" stroke-width="1" stroke-dasharray="3,3"/>
<line x1="1445.5" y1="621" x2="1445.5" y2="643" stroke="#7f90a4" stroke-width="1" stroke-dasharray="3,3"/>
<line x1="1477.5" y1="621" x2="1477.5" y2="643" stroke="#7f90a4" stroke-width="1" stroke-dasharray="3,3"/>
<line x1="1509.5" y1="621" x2="1509.5" y2="643" stroke="#7f90a4" stroke-width="1" stroke-dasharray="3,3"/>
<line x1="1541.5" y1="621" x2="1541.5" y2="643" stroke="#7f90a4" stroke-width="1" stroke-dasharray="3,3"/>
<line x1="5" y1="632.5" x2="1547" y2="632.5" stroke="#7f90a4" stroke-width="1" stroke-dasharray="3,3"/>
<polyline points="5,632.5 53,632.5 69,638.5 85,640" fill="none" stroke="#ff0000" stroke-width="1" shape-rendering="auto"/>
<polyline points="85,640 101,634 117,632.5 1125,632.5 1141,625 1157,623" fill="none" stroke="#00ff00" stroke-width="1" shape-rendering="auto"/>
<polyline points="1157,623 1173,628 1189,631 1205,632.5" fill="none" stroke="#ff0000" stroke-width="1" shape-rendering="auto"/>
<path d="M1.5,632.5 L5,629.0 L8.5,632.5 L5,636.0 Z" fill="#ff0000" shape-rendering="auto"/>
<path d="M17.5,632.5 L21,629.0 L24.5,632.5 L21,636.0 Z" fill="#ff0000" shape-rendering="auto"/>
<path d="M33.5,632.5 L37,629.0 L40.5,632.5 L37,636.0 Z" fill="#ff0000" shape-rendering="auto"/>
<path d="M49.5,632.5 L53,629.0 L56.5,632.5 L53,636.0 Z" fill="#ff0000" shape-rendering="auto"/>
<path d="M65.5,638.5 L69,635.0 L72.5,638.5 L69,642.0 Z" fill="#ff0000" shape-rendering="auto"/>
<path d="M81.5,640 L85,636.5 L88.5,640 L85,643.5 Z" fill="#ff0000" shape-rendering="auto"/>
<path d="M97.5,634 L101,630.5 L104.5,634 L101,637.5 Z" fill="#00ff00" shape-rendering="auto"/>
<path d="M113.5,632.5 L117,629.0 L120.5,632.5 L117,636.0 Z" fill="#00ff00" shape-rendering="auto"/>
<path d="M129.5,632.5 L133,629.0 L136.5,632.5 L133,636.0 Z" fill="#00ff00" shape-rendering="auto"/>
<path d="M145.5,632.5 L149,629.0 L152.5,632.5 L149,636.0 Z" fill="#00ff00" shape-rendering="auto"/>
<path d="M161.5,632.5 L165,629.0 L168.5,632.5 L165,636.0 Z" fill="#00ff00" shape-rendering="auto"/>
<path d="M177.5,632.5 L181,629.0 L184.5,632.5 L181,636.0 Z" fill="#00ff00" shape-rendering="auto"/>
<path d="M193.5,632.5 L197,629.0 L200.5,632.5 L197,636.0 Z" fill="#00ff00" shape-rendering="auto"/>
<path d="M209.5,632.5 L213,629.0 L216.5,632.5 L213,636.0 Z" fill="#00ff00" shape-rendering="auto"/>
<path d="M225.5,632.5 L229,629.0 L232.5,632.5 L229,636.0 Z" fill="#00ff00" shape-rendering="auto"/>
<path d="M241.5,632.5 L245,629.0 L248.5,632.5 L245,636.0 Z" fill="#00ff00" shape-rendering="auto"/>
<path d="M257.5,632.5 L261,629.0 L264.5,632.5 L261,636.0 Z" fill="#00ff00" shape-rendering="auto"/>
<path d="M273.5,632.5 L277,629.0 L280.5,632.5 L277,636.0 Z" fill="#00ff00" shape-rendering="auto"/>
<path d="M289.5,632.5 L293,629.0 L296.5,632.5 L293,636.0 Z" fill="#00ff00" shape-rendering="auto"/>
<path d="M305.5,632.5 L309,629.0 L312.5,632.5 L309,636.0 Z" fill="#00ff00" shape-rendering="auto"/>
<path d="M321.5,632.5 L325,629.0 L328.5,632.5 L325,636.0 Z" fill="#00ff00" shape-rendering="auto"/>
<path d="M337.5,632.5 L341,629.0 L344.5,632.5 L341,636.0 Z" fill="#00ff00" shape-rendering="auto"/>
<path d="M353.5,632.5 L357,629.0 L360.5,632.5 L357,636.0 Z" fill="#00ff00" shape-rendering="auto"/>
<path d="M369.5,632.5 L373,629.0 L376.5,632.5 L373,636.0 Z" fill="#00ff00" shape-rendering="auto"/>
<path d="M385.5,632.5 L389,629.0 L392.5,632.5 L389,636.0 Z" fill="#00ff00" shape-rendering="auto"/>
<path d="M401.5,632.5 L405,629.0 L408.5,632.5 L405,636.0 Z" fill="#00ff00" shape-rendering="auto"/>
<path d="M417.5,632.5 L421,629.0 L424.5,632.5 L421,636.0 Z" fill="#00ff00" shape-rendering="auto"/>
<path d="M433.5,632.5 L437,629.0 L440.5,632.5 L437,636.0 Z" fill="#00ff00" shape-rendering="auto"/>
<path d="M449.5,632.5 L453,629.0 L456.5,632.5 L453,636.0 Z" fill="#00ff00" shape-rendering="auto"/>
<path d="M465.5,632.5 L469,629.0 L472.5,632.5 L469,636.0 Z" fill="#00ff00" shape-rendering="auto"/>
<path d="M481.5,632.5 L485,629.0 L488.5,632.5 L485,636.0 Z" fill="#00ff00" shape-rendering="auto"/>
<path d="M497.5,632.5 L501,629.0 L504.5,632.5 L501,636.0 Z" fill="#00ff00" shape-rendering="auto"/>
<path d="M513.5,632.5 L517,629.0 L520.5,632.5 L517,636.0 Z" fill="#00ff00" shape-rendering="auto"/>
<path d="M529.5,632.5 L533,629.0 L536.5,632.5 L533,636.0 Z" fill="#00ff00" shape-rendering="auto"/>
<path d="M545.5,632.5 L549,629.0 L552.5,632.5 L549,636.0 Z" fill="#00ff00" shape-rendering="auto"/>
<path d="M561.5,632.5 L565,629.0 L568.5,632.5 L565,636.0 Z" fill="#00ff00" shape-rendering="auto"/>
<path d="M577.5,632.5 L581,629.0 L584.5,632.5 L581,636.0 Z" fill="#00ff00" shape-rendering="auto"/>
<path d="M593.5,632.5 L597,629.0 L600.5,632.5 L597,636.0 Z" fill="#00ff00" shape-rendering="auto"/>
<path d="M609.5,632.5 L613,629.0 L616.5,632.5 L613,636.0 Z" fill="#00ff00" shape-rendering="auto"/>
<path d="M625.5,632.5 L629,629.0 L632.5,632.5 L629,636.0 Z" fill="#00ff00" shape-rendering="auto"/>
<path d="M641.5,632.5 L645,629.0 L648.5,632.5 L645,636.0 Z" fill="#00ff00" shape-rendering="auto"/>
<path d="M657.5,632.5 L661,629.0 L664.5,632.5 L661,636.0 Z" fill="#00ff00" shape-rendering="auto"/>
<path d="M673.5,632.5 L677,629.0 L680.5,632.5 L677,636.0 Z" fill="#00ff00" shape-rendering="auto"/>
<path d="M689.5,632.5 L693,629.0 L696.5,632.5 L693,636.0 Z" fill="#00ff00" shape-rendering="auto"/>
<path d="M705.5,632.5 L709,629.0 L712.5,632.5 L709,636.0 Z" fill="#00ff00" shape-rendering="auto"/>
<path d="M721.5,632.5 L725,629.0 L728.5,632.5 L725,636.0 Z" fill="#00ff00" shape-rendering="auto"/>
<path d="M737.5,632.5 L741,629.0 L744.5,632.5 L741,636.0 Z" fill="#00ff00" shape-rendering="auto"/>
<path d="M753.5,632.5 L757,629.0 L760.5,632.5 L757,636.0 Z" fill="#00ff00" shape-rendering="auto"/>
<path d="M769.5,632.5 L773,629.0 L776.5,632.5 L773,636.0 Z" fill="#00ff00" shape-rendering="auto"/>
<path d="M785.5,632.5 L789,629.0 L792.5,632.5 L789,636.0 Z" fill="#00ff00" shape-rendering="auto"/>
<path d="M801.5,632.5 L805,629.0 L808.5,632.5 L805,636.0 Z" fill="#00ff00" shape-rendering="auto"/>
<path d="M817.5,632.5 L821,629.0 L824.5,632.5 L821,636.0 Z" fill="#00ff00" shape-rendering="auto"/>
<path d="M833.5,632.5 L837,629.0 L840.5,632.5 L837,636.0 Z" fill="#00ff00" shape-rendering="auto"/>
<path d="M849.5,632.5 L853,629.0 L856.5,632.5 L853,636.0 Z" fill="#00ff00" shape-rendering="auto"/>
<path d="M865.5,632.5 L869,629.0 L872.5,632.5 L869,636.0 Z" fill="#00ff00" shape-rendering="auto"/>
<path d="M881.5,632.5 L885,629.0 L888.5,632.5 L885,636.0 Z" fill="#00ff00" shape-rendering="auto"/>
<path d="M897.5,632.5 L901,629.0 L904.5,632.5 L901,636.0 Z" fill="#00ff00" shape-rendering="auto"/>
<path d="M913.5,632.5 L917,629.0 L920.5,632.5 L917,636.0 Z" fill="#00ff00" shape-rendering="auto"/>
<path d="M929.5,632.5 L933,629.0 L936.5,632.5 L933,636.0 Z" fill="#00ff00" shape-rendering="auto"/>
<path d="M945.5,632.5 L949,629.0 L952.5,632.5 L949,636.0 Z" fill="#00ff00" shape-rendering="auto"/>
<path d="M961.5,632.5 L965,629.0 L968.5,632.5 L965,636.0 Z" fill="#00ff00" shape-rendering="auto"/>
<path d="M977.5,632.5 L981,629.0 L984.5,632.5 L981,636.0 Z" fill="#00ff00" shape-rendering="auto"/>
<path d="M993.5,632.5 L997,629.0 L1000.5,632.5 L997,636.0 Z" fill="#00ff00" shape-rendering="auto"/>
<path d="M1009.5,632.5 L1013,629.0 L1016.5,632.5 L1013,636.0 Z" fill="#00ff00" shape-rendering="auto"/>
<path d="M1025.5,632.5 L1029,629.0 L1032.5,632.5 L1029,636.0 Z" fill="#00ff00" shape-rendering="auto"/>
<path d="M1041.5,632.5 L1045,629.0 L1048.5,632.5 L1045,636.0 Z" fill="#00ff00" shape-rendering="auto"/>
<path d="M1057.5,632.5 L1061,629.0 L1064.5,632.5 L1061,636.0 Z" fill="#00ff00" shape-rendering="auto"/>
<path d="M1073.5,632.5 L1077,629.0 L1080.5,632.5 L1077,636.0 Z" fill="#00ff00" shape-rendering="auto"/>
<path d="M1089.5,632.5 L1093,629.0 L1096.5,632.5 L1093,636.0 Z" fill="#00ff00" shape-rendering="auto"/>
<path d="M1105.5,632.5 L1109,629.0 L1112.5,632.5 L1109,636.0 Z" fill="#00ff00" shape-rendering="auto"/>
<path d="M1121.5,632.5 L1125,629.0 L1128.5,632.5 L1125,636.0 Z" fill="#00ff00" shape-rendering="auto"/>
<path d="M1137.5,625 L1141,621.5 L1144.5,625 L1141,628.5 Z" fill="#00ff00" shape-rendering="auto"/>
<path d="M1153.5,623 L1157,619.5 L1160.5,623 L1157,626.5 Z" fill="#ff0000" shape-rendering="auto"/>
<path d="M1169.5,628 L1173,624.5 L1176.5,628 L1173,631.5 Z" fill="#ff0000" shape-rendering="auto"/>
<path d="M1185.5,631 L1189,627.5 L1192.5,631 L1189,634.5 Z" fill="#ff0000" shape-rendering="auto"/>
<path d="M1201.5,632.5 L1205,629.0 L1208.5,632.5 L1205,636.0 Z" fill="#ff0000" shape-rendering="auto"/>
<text x="9.5" y="632.3" font-size="9.3" fill="#fff" font-family="'Liberation Sans', sans-serif" text-anchor="start" textLength="213" lengthAdjust="spacingAndGlyphs">Its life Jim, but not as we know it...  0.0010 0.0010</text>
</g>
<g clip-path="url(#s4)">
<line x1="37.5" y1="646" x2="37.5" y2="794" stroke="#7f90a4" stroke-width="1" stroke-dasharray="3,3"/>
<line x1="69.5" y1="646" x2="69.5" y2="794" stroke="#7f90a4" stroke-width="1" stroke-dasharray="3,3"/>
<line x1="101.5" y1="646" x2="101.5" y2="794" stroke="#7f90a4" stroke-width="1" stroke-dasharray="3,3"/>
<line x1="133.5" y1="646" x2="133.5" y2="794" stroke="#7f90a4" stroke-width="1" stroke-dasharray="3,3"/>
<line x1="165.5" y1="646" x2="165.5" y2="794" stroke="#7f90a4" stroke-width="1" stroke-dasharray="3,3"/>
<line x1="197.5" y1="646" x2="197.5" y2="794" stroke="#7f90a4" stroke-width="1" stroke-dasharray="3,3"/>
<line x1="229.5" y1="646" x2="229.5" y2="794" stroke="#7f90a4" stroke-width="1" stroke-dasharray="3,3"/>
<line x1="261.5" y1="646" x2="261.5" y2="794" stroke="#7f90a4" stroke-width="1" stroke-dasharray="3,3"/>
<line x1="293.5" y1="646" x2="293.5" y2="794" stroke="#7f90a4" stroke-width="1" stroke-dasharray="3,3"/>
<line x1="325.5" y1="646" x2="325.5" y2="794" stroke="#7f90a4" stroke-width="1" stroke-dasharray="3,3"/>
<line x1="357.5" y1="646" x2="357.5" y2="794" stroke="#7f90a4" stroke-width="1" stroke-dasharray="3,3"/>
<line x1="389.5" y1="646" x2="389.5" y2="794" stroke="#7f90a4" stroke-width="1" stroke-dasharray="3,3"/>
<line x1="421.5" y1="646" x2="421.5" y2="794" stroke="#7f90a4" stroke-width="1" stroke-dasharray="3,3"/>
<line x1="453.5" y1="646" x2="453.5" y2="794" stroke="#7f90a4" stroke-width="1" stroke-dasharray="3,3"/>
<line x1="485.5" y1="646" x2="485.5" y2="794" stroke="#7f90a4" stroke-width="1" stroke-dasharray="3,3"/>
<line x1="517.5" y1="646" x2="517.5" y2="794" stroke="#7f90a4" stroke-width="1" stroke-dasharray="3,3"/>
<line x1="549.5" y1="646" x2="549.5" y2="794" stroke="#7f90a4" stroke-width="1" stroke-dasharray="3,3"/>
<line x1="581.5" y1="646" x2="581.5" y2="794" stroke="#7f90a4" stroke-width="1" stroke-dasharray="3,3"/>
<line x1="613.5" y1="646" x2="613.5" y2="794" stroke="#7f90a4" stroke-width="1" stroke-dasharray="3,3"/>
<line x1="645.5" y1="646" x2="645.5" y2="794" stroke="#7f90a4" stroke-width="1" stroke-dasharray="3,3"/>
<line x1="677.5" y1="646" x2="677.5" y2="794" stroke="#7f90a4" stroke-width="1" stroke-dasharray="3,3"/>
<line x1="709.5" y1="646" x2="709.5" y2="794" stroke="#7f90a4" stroke-width="1" stroke-dasharray="3,3"/>
<line x1="741.5" y1="646" x2="741.5" y2="794" stroke="#7f90a4" stroke-width="1" stroke-dasharray="3,3"/>
<line x1="773.5" y1="646" x2="773.5" y2="794" stroke="#7f90a4" stroke-width="1" stroke-dasharray="3,3"/>
<line x1="805.5" y1="646" x2="805.5" y2="794" stroke="#7f90a4" stroke-width="1" stroke-dasharray="3,3"/>
<line x1="837.5" y1="646" x2="837.5" y2="794" stroke="#7f90a4" stroke-width="1" stroke-dasharray="3,3"/>
<line x1="869.5" y1="646" x2="869.5" y2="794" stroke="#7f90a4" stroke-width="1" stroke-dasharray="3,3"/>
<line x1="901.5" y1="646" x2="901.5" y2="794" stroke="#7f90a4" stroke-width="1" stroke-dasharray="3,3"/>
<line x1="933.5" y1="646" x2="933.5" y2="794" stroke="#7f90a4" stroke-width="1" stroke-dasharray="3,3"/>
<line x1="965.5" y1="646" x2="965.5" y2="794" stroke="#7f90a4" stroke-width="1" stroke-dasharray="3,3"/>
<line x1="997.5" y1="646" x2="997.5" y2="794" stroke="#7f90a4" stroke-width="1" stroke-dasharray="3,3"/>
<line x1="1029.5" y1="646" x2="1029.5" y2="794" stroke="#7f90a4" stroke-width="1" stroke-dasharray="3,3"/>
<line x1="1061.5" y1="646" x2="1061.5" y2="794" stroke="#7f90a4" stroke-width="1" stroke-dasharray="3,3"/>
<line x1="1093.5" y1="646" x2="1093.5" y2="794" stroke="#7f90a4" stroke-width="1" stroke-dasharray="3,3"/>
<line x1="1125.5" y1="646" x2="1125.5" y2="794" stroke="#7f90a4" stroke-width="1" stroke-dasharray="3,3"/>
<line x1="1157.5" y1="646" x2="1157.5" y2="794" stroke="#7f90a4" stroke-width="1" stroke-dasharray="3,3"/>
<line x1="1189.5" y1="646" x2="1189.5" y2="794" stroke="#7f90a4" stroke-width="1" stroke-dasharray="3,3"/>
<line x1="1221.5" y1="646" x2="1221.5" y2="794" stroke="#7f90a4" stroke-width="1" stroke-dasharray="3,3"/>
<line x1="1253.5" y1="646" x2="1253.5" y2="794" stroke="#7f90a4" stroke-width="1" stroke-dasharray="3,3"/>
<line x1="1285.5" y1="646" x2="1285.5" y2="794" stroke="#7f90a4" stroke-width="1" stroke-dasharray="3,3"/>
<line x1="1317.5" y1="646" x2="1317.5" y2="794" stroke="#7f90a4" stroke-width="1" stroke-dasharray="3,3"/>
<line x1="1349.5" y1="646" x2="1349.5" y2="794" stroke="#7f90a4" stroke-width="1" stroke-dasharray="3,3"/>
<line x1="1381.5" y1="646" x2="1381.5" y2="794" stroke="#7f90a4" stroke-width="1" stroke-dasharray="3,3"/>
<line x1="1413.5" y1="646" x2="1413.5" y2="794" stroke="#7f90a4" stroke-width="1" stroke-dasharray="3,3"/>
<line x1="1445.5" y1="646" x2="1445.5" y2="794" stroke="#7f90a4" stroke-width="1" stroke-dasharray="3,3"/>
<line x1="1477.5" y1="646" x2="1477.5" y2="794" stroke="#7f90a4" stroke-width="1" stroke-dasharray="3,3"/>
<line x1="1509.5" y1="646" x2="1509.5" y2="794" stroke="#7f90a4" stroke-width="1" stroke-dasharray="3,3"/>
<line x1="1541.5" y1="646" x2="1541.5" y2="794" stroke="#7f90a4" stroke-width="1" stroke-dasharray="3,3"/>
<line x1="5" y1="746.5" x2="1547" y2="746.5" stroke="#7f90a4" stroke-width="1" stroke-dasharray="3,3"/>
<rect x="81" y="746" width="9" height="41" fill="#1e90ff"/>
<rect x="241" y="660" width="9" height="86" fill="#ffd700"/>
<rect x="241" y="718" width="9" height="1.5" fill="#000"/>
<rect x="449" y="746" width="9" height="10" fill="#1e90ff"/>
<rect x="817" y="713" width="9" height="33" fill="#ffd700"/>
<rect x="817" y="718.5" width="9" height="3" fill="#000"/>
<rect x="913" y="746" width="9" height="12.5" fill="#1e90ff"/>
<rect x="1153" y="688" width="9" height="58" fill="#ffd700"/>
<rect x="1156" y="657" width="3" height="62" fill="#f08080"/>
<rect x="2" y="667" width="7" height="7" fill="#ff4500"/>
<rect x="18" y="667" width="7" height="7" fill="#ff4500"/>
<rect x="34" y="667" width="7" height="7" fill="#ff4500"/>
<rect x="50" y="667" width="7" height="7" fill="#ff4500"/>
<rect x="66" y="667" width="7" height="7" fill="#ff4500"/>
<rect x="82" y="667" width="7" height="7" fill="#1e90ff"/>
<rect x="98" y="667" width="7" height="7" fill="#4169e1"/>
<rect x="114" y="667" width="7" height="7" fill="#4169e1"/>
<rect x="130" y="667" width="7" height="7" fill="#0000ff"/>
<rect x="146" y="667" width="7" height="7" fill="#0000ff"/>
<rect x="162" y="667" width="7" height="7" fill="#0000ff"/>
<rect x="178" y="667" width="7" height="7" fill="#0000ff"/>
<rect x="194" y="667" width="7" height="7" fill="#0000ff"/>
<rect x="210" y="667" width="7" height="7" fill="#0000ff"/>
<rect x="226" y="667" width="7" height="7" fill="#0000ff"/>
<rect x="242" y="667" width="7" height="7" fill="#0000ff"/>
<rect x="258" y="667" width="7" height="7" fill="#0000ff"/>
<rect x="274" y="667" width="7" height="7" fill="#4169e1"/>
<rect x="290" y="667" width="7" height="7" fill="#0000cd"/>
<rect x="306" y="667" width="7" height="7" fill="#0000cd"/>
<rect x="322" y="667" width="7" height="7" fill="#4169e1"/>
<rect x="338" y="667" width="7" height="7" fill="#1e90ff"/>
<rect x="354" y="667" width="7" height="7" fill="#ff6347"/>
<rect x="370" y="667" width="7" height="7" fill="#ff6347"/>
<rect x="386" y="667" width="7" height="7" fill="#ff6347"/>
<rect x="402" y="667" width="7" height="7" fill="#fa8072"/>
<rect x="418" y="667" width="7" height="7" fill="#4169e1"/>
<rect x="434" y="667" width="7" height="7" fill="#4169e1"/>
<rect x="450" y="667" width="7" height="7" fill="#ff4500"/>
<rect x="466" y="667" width="7" height="7" fill="#ff6347"/>
<rect x="482" y="667" width="7" height="7" fill="#ff6347"/>
<rect x="498" y="667" width="7" height="7" fill="#ff6347"/>
<rect x="514" y="667" width="7" height="7" fill="#ff6347"/>
<rect x="530" y="667" width="7" height="7" fill="#1e90ff"/>
<rect x="546" y="667" width="7" height="7" fill="#0000ff"/>
<rect x="562" y="667" width="7" height="7" fill="#0000ff"/>
<rect x="578" y="667" width="7" height="7" fill="#0000ff"/>
<rect x="594" y="667" width="7" height="7" fill="#0000ff"/>
<rect x="610" y="667" width="7" height="7" fill="#0000ff"/>
<rect x="626" y="667" width="7" height="7" fill="#0000ff"/>
<rect x="642" y="667" width="7" height="7" fill="#0000ff"/>
<rect x="658" y="667" width="7" height="7" fill="#0000ff"/>
<rect x="674" y="667" width="7" height="7" fill="#0000ff"/>
<rect x="690" y="667" width="7" height="7" fill="#0000ff"/>
<rect x="706" y="667" width="7" height="7" fill="#0000ff"/>
<rect x="722" y="667" width="7" height="7" fill="#0000ff"/>
<rect x="738" y="667" width="7" height="7" fill="#4169e1"/>
<rect x="754" y="667" width="7" height="7" fill="#0000ff"/>
<rect x="770" y="667" width="7" height="7" fill="#0000ff"/>
<rect x="786" y="667" width="7" height="7" fill="#0000ff"/>
<rect x="802" y="667" width="7" height="7" fill="#0000ff"/>
<rect x="818" y="667" width="7" height="7" fill="#4169e1"/>
<rect x="834" y="667" width="7" height="7" fill="#1e90ff"/>
<rect x="850" y="667" width="7" height="7" fill="#fa8072"/>
<rect x="866" y="667" width="7" height="7" fill="#fa8072"/>
<rect x="882" y="667" width="7" height="7" fill="#fa8072"/>
<rect x="898" y="667" width="7" height="7" fill="#ff6347"/>
<rect x="914" y="667" width="7" height="7" fill="#ff0000"/>
<rect x="930" y="667" width="7" height="7" fill="#fa8072"/>
<rect x="946" y="667" width="7" height="7" fill="#fa8072"/>
<rect x="962" y="667" width="7" height="7" fill="#fa8072"/>
<rect x="978" y="667" width="7" height="7" fill="#fa8072"/>
<rect x="994" y="667" width="7" height="7" fill="#fa8072"/>
<rect x="1010" y="667" width="7" height="7" fill="#fa8072"/>
<rect x="1026" y="667" width="7" height="7" fill="#0000ff"/>
<rect x="1042" y="667" width="7" height="7" fill="#0000ff"/>
<rect x="1058" y="667" width="7" height="7" fill="#0000ff"/>
<rect x="1074" y="667" width="7" height="7" fill="#0000ff"/>
<rect x="1090" y="667" width="7" height="7" fill="#0000ff"/>
<rect x="1106" y="667" width="7" height="7" fill="#0000ff"/>
<rect x="1122" y="667" width="7" height="7" fill="#0000ff"/>
<rect x="1138" y="667" width="7" height="7" fill="#0000ff"/>
<rect x="1154" y="667" width="7" height="7" fill="#0000ff"/>
<rect x="1170" y="667" width="7" height="7" fill="#0000ff"/>
<rect x="1186" y="667" width="7" height="7" fill="#0000ff"/>
<rect x="1202" y="667" width="7" height="7" fill="#ff6347"/>
<polyline points="5,765.6 37,775.7 69,780 84,781.5 95,775.7 107,758 118,735 130,712 144,689 165,674.6 185,667 214,661.6 245,660 289,663 310,667 326,679 341,706 357,739.6 372.5,755.5 388,765.6 400,769 421.7,777 437.5,779 486.6,781 533,781 548.7,775.7 564.6,752.6 580.5,718 596,692 612,677.5 628,670 645.5,666 677,660.8 709,660.8 725,669 741,674.6 757,674.6 772.5,680 788.5,687.6 800,679 805.8,674.6 821.6,670 837.5,677.5 853.4,710.7 869,741 886.6,761 901,768.5 917,773.4 933,775.7 948.7,778 980.5,781 1013.7,781 1029.6,767 1045.5,723.7 1061.4,697.7 1077,683 1093,673 1109,667.4 1140.8,661.6 1156.7,660.8 1188.4,659.6 1200,669 1205,671" fill="none" stroke="#a63ce0" stroke-width="2.6" shape-rendering="auto" stroke-linejoin="round"/>
<polyline points="5,749 37,757 53.4,756 69,758.4 86.6,749.7 101,741 118.4,728 133,718 148.7,708 164.6,699 180.5,693.4 196.4,688 212,684.8 228,682 245.5,686 261.4,693.4 277,702 293,710.7 309,719.4 325,728 340.8,736.7 356.7,745.4 372.5,751 388.4,755.5 400,757.8 405.8,757 421.7,749 437.5,742.5 453.4,741.7 469,744 485,746 501,748 517,751 533,746 548.7,737.6 564.6,728 580.5,718 596.4,709 612,700.6 628,696 645.5,693.4 661.4,692 677,690.5 693,689 709,692 725,695 741,700 757,701 772.5,702 788.5,699 800,697.8 805.8,696 821.6,693.4 837.5,702 853.4,712 869,723.7 886.6,735 901,745.4 917,754 933,751 948.7,744 964.6,738 980.5,733.9 996.4,729.5 1012,722 1029.6,715 1045.5,708 1061.4,702 1077,697 1093,693.4 1109,690.5 1125,687 1140.8,685.6 1156.7,686 1172.5,689 1188.4,693.4 1200,702 1205,705" fill="none" stroke="#0000ff" stroke-width="1.4" shape-rendering="auto"/>
<polyline points="5,757 20,762.7 37,765 53.4,755.5 69,761 86.6,738 101,715 118.4,700.6 133,693.4 148.7,687.6 164.6,683 180.5,680 196.4,678 212,676 228,680.4 245.5,687.6 261.4,706.4 277,725 293,735 309,738 325,745.4 340.8,755.5 356.7,757 372.5,760 388.4,765.6 400,764 405.8,762.7 421.7,738 437.5,724 453.4,739.6 469,746 485,747.4 501,754 517,757 533,738 548.7,718 564.6,705 580.5,693.4 596.4,690.5 612,686 628,685 645.5,687.6 661.4,689 677,685.6 693,688.5 709,699 725,699 741,710 757,704 772.5,705 788.5,696 800,692 805.8,690.5 821.6,690.5 837.5,710.7 853.4,732.4 869,749.7 886.6,760 901,767 917,773 933,748 948.7,732.4 964.6,721.7 980.5,724 996.4,721 1012,710.7 1029.6,699 1045.5,695 1061.4,692 1077,685.6 1109,685.6 1125,683 1140.8,683 1156.7,685.6 1172.5,696 1188.4,702 1200,722 1205,729.5" fill="none" stroke="#ffff00" stroke-width="1.2" shape-rendering="auto"/>
<polyline points="5,719.4 53,719.4 69,770 85,785" fill="none" stroke="#ff0000" stroke-width="1" shape-rendering="auto"/>
<path d="M2.7,719.4 L5,717.1 L7.3,719.4 L5,721.6999999999999 Z" fill="#ff0000" shape-rendering="auto"/>
<path d="M18.7,719.4 L21,717.1 L23.3,719.4 L21,721.6999999999999 Z" fill="#ff0000" shape-rendering="auto"/>
<path d="M34.7,719.4 L37,717.1 L39.3,719.4 L37,721.6999999999999 Z" fill="#ff0000" shape-rendering="auto"/>
<path d="M50.7,719.4 L53,717.1 L55.3,719.4 L53,721.6999999999999 Z" fill="#ff0000" shape-rendering="auto"/>
<path d="M66.7,770.0 L69,767.7 L71.3,770.0 L69,772.3 Z" fill="#ff0000" shape-rendering="auto"/>
<path d="M82.7,785.0 L85,782.7 L87.3,785.0 L85,787.3 Z" fill="#ff0000" shape-rendering="auto"/>
<polyline points="85,785 101,741 117,719.4 213,719.4 229,675 245,653" fill="none" stroke="#00ff00" stroke-width="1" shape-rendering="auto"/>
<path d="M98.7,741.0 L101,738.7 L103.3,741.0 L101,743.3 Z" fill="#00ff00" shape-rendering="auto"/>
<path d="M114.7,719.4 L117,717.1 L119.3,719.4 L117,721.6999999999999 Z" fill="#00ff00" shape-rendering="auto"/>
<path d="M130.7,719.4 L133,717.1 L135.3,719.4 L133,721.6999999999999 Z" fill="#00ff00" shape-rendering="auto"/>
<path d="M146.7,719.4 L149,717.1 L151.3,719.4 L149,721.6999999999999 Z" fill="#00ff00" shape-rendering="auto"/>
<path d="M162.7,719.4 L165,717.1 L167.3,719.4 L165,721.6999999999999 Z" fill="#00ff00" shape-rendering="auto"/>
<path d="M178.7,719.4 L181,717.1 L183.3,719.4 L181,721.6999999999999 Z" fill="#00ff00" shape-rendering="auto"/>
<path d="M194.7,719.4 L197,717.1 L199.3,719.4 L197,721.6999999999999 Z" fill="#00ff00" shape-rendering="auto"/>
<path d="M210.7,719.4 L213,717.1 L215.3,719.4 L213,721.6999999999999 Z" fill="#00ff00" shape-rendering="auto"/>
<path d="M226.7,675.0 L229,672.7 L231.3,675.0 L229,677.3 Z" fill="#00ff00" shape-rendering="auto"/>
<path d="M242.7,653.0 L245,650.7 L247.3,653.0 L245,655.3 Z" fill="#00ff00" shape-rendering="auto"/>
<polyline points="245,653 261,698 277,719.4 341,719.4 357,770.5 373,785" fill="none" stroke="#ff0000" stroke-width="1" shape-rendering="auto"/>
<path d="M242.7,653.0 L245,650.7 L247.3,653.0 L245,655.3 Z" fill="#ff0000" shape-rendering="auto"/>
<path d="M258.7,698.0 L261,695.7 L263.3,698.0 L261,700.3 Z" fill="#ff0000" shape-rendering="auto"/>
<path d="M274.7,719.4 L277,717.1 L279.3,719.4 L277,721.6999999999999 Z" fill="#ff0000" shape-rendering="auto"/>
<path d="M290.7,719.4 L293,717.1 L295.3,719.4 L293,721.6999999999999 Z" fill="#ff0000" shape-rendering="auto"/>
<path d="M306.7,719.4 L309,717.1 L311.3,719.4 L309,721.6999999999999 Z" fill="#ff0000" shape-rendering="auto"/>
<path d="M322.7,719.4 L325,717.1 L327.3,719.4 L325,721.6999999999999 Z" fill="#ff0000" shape-rendering="auto"/>
<path d="M338.7,719.4 L341,717.1 L343.3,719.4 L341,721.6999999999999 Z" fill="#ff0000" shape-rendering="auto"/>
<path d="M354.7,770.5 L357,768.2 L359.3,770.5 L357,772.8 Z" fill="#ff0000" shape-rendering="auto"/>
<path d="M370.7,785.0 L373,782.7 L375.3,785.0 L373,787.3 Z" fill="#ff0000" shape-rendering="auto"/>
<polyline points="373,785 389,741 405,719.4 421,666 437,653" fill="none" stroke="#00ff00" stroke-width="1" shape-rendering="auto"/>
<path d="M386.7,741.0 L389,738.7 L391.3,741.0 L389,743.3 Z" fill="#00ff00" shape-rendering="auto"/>
<path d="M402.7,719.4 L405,717.1 L407.3,719.4 L405,721.6999999999999 Z" fill="#00ff00" shape-rendering="auto"/>
<path d="M418.7,666.0 L421,663.7 L423.3,666.0 L421,668.3 Z" fill="#00ff00" shape-rendering="auto"/>
<path d="M434.7,653.0 L437,650.7 L439.3,653.0 L437,655.3 Z" fill="#00ff00" shape-rendering="auto"/>
<polyline points="437,653 453,785" fill="none" stroke="#ff0000" stroke-width="1" shape-rendering="auto"/>
<path d="M434.7,653.0 L437,650.7 L439.3,653.0 L437,655.3 Z" fill="#ff0000" shape-rendering="auto"/>
<path d="M450.7,785.0 L453,782.7 L455.3,785.0 L453,787.3 Z" fill="#ff0000" shape-rendering="auto"/>
<polyline points="453,785 469,741 485,719.4 597,719.4 613,669 629,653" fill="none" stroke="#00ff00" stroke-width="1" shape-rendering="auto"/>
<path d="M466.7,741.0 L469,738.7 L471.3,741.0 L469,743.3 Z" fill="#00ff00" shape-rendering="auto"/>
<path d="M482.7,719.4 L485,717.1 L487.3,719.4 L485,721.6999999999999 Z" fill="#00ff00" shape-rendering="auto"/>
<path d="M498.7,719.4 L501,717.1 L503.3,719.4 L501,721.6999999999999 Z" fill="#00ff00" shape-rendering="auto"/>
<path d="M514.7,719.4 L517,717.1 L519.3,719.4 L517,721.6999999999999 Z" fill="#00ff00" shape-rendering="auto"/>
<path d="M530.7,719.4 L533,717.1 L535.3,719.4 L533,721.6999999999999 Z" fill="#00ff00" shape-rendering="auto"/>
<path d="M546.7,719.4 L549,717.1 L551.3,719.4 L549,721.6999999999999 Z" fill="#00ff00" shape-rendering="auto"/>
<path d="M562.7,719.4 L565,717.1 L567.3,719.4 L565,721.6999999999999 Z" fill="#00ff00" shape-rendering="auto"/>
<path d="M578.7,719.4 L581,717.1 L583.3,719.4 L581,721.6999999999999 Z" fill="#00ff00" shape-rendering="auto"/>
<path d="M594.7,719.4 L597,717.1 L599.3,719.4 L597,721.6999999999999 Z" fill="#00ff00" shape-rendering="auto"/>
<path d="M610.7,669.0 L613,666.7 L615.3,669.0 L613,671.3 Z" fill="#00ff00" shape-rendering="auto"/>
<path d="M626.7,653.0 L629,650.7 L631.3,653.0 L629,655.3 Z" fill="#00ff00" shape-rendering="auto"/>
<polyline points="629,653 645,785" fill="none" stroke="#ff0000" stroke-width="1" shape-rendering="auto"/>
<path d="M626.7,653.0 L629,650.7 L631.3,653.0 L629,655.3 Z" fill="#ff0000" shape-rendering="auto"/>
<path d="M642.7,785.0 L645,782.7 L647.3,785.0 L645,787.3 Z" fill="#ff0000" shape-rendering="auto"/>
<polyline points="645,785 661,741 677,719.4 789,719.4 805,669 821,653" fill="none" stroke="#00ff00" stroke-width="1" shape-rendering="auto"/>
<path d="M658.7,741.0 L661,738.7 L663.3,741.0 L661,743.3 Z" fill="#00ff00" shape-rendering="auto"/>
<path d="M674.7,719.4 L677,717.1 L679.3,719.4 L677,721.6999999999999 Z" fill="#00ff00" shape-rendering="auto"/>
<path d="M690.7,719.4 L693,717.1 L695.3,719.4 L693,721.6999999999999 Z" fill="#00ff00" shape-rendering="auto"/>
<path d="M706.7,719.4 L709,717.1 L711.3,719.4 L709,721.6999999999999 Z" fill="#00ff00" shape-rendering="auto"/>
<path d="M722.7,719.4 L725,717.1 L727.3,719.4 L725,721.6999999999999 Z" fill="#00ff00" shape-rendering="auto"/>
<path d="M738.7,719.4 L741,717.1 L743.3,719.4 L741,721.6999999999999 Z" fill="#00ff00" shape-rendering="auto"/>
<path d="M754.7,719.4 L757,717.1 L759.3,719.4 L757,721.6999999999999 Z" fill="#00ff00" shape-rendering="auto"/>
<path d="M770.7,719.4 L773,717.1 L775.3,719.4 L773,721.6999999999999 Z" fill="#00ff00" shape-rendering="auto"/>
<path d="M786.7,719.4 L789,717.1 L791.3,719.4 L789,721.6999999999999 Z" fill="#00ff00" shape-rendering="auto"/>
<path d="M802.7,669.0 L805,666.7 L807.3,669.0 L805,671.3 Z" fill="#00ff00" shape-rendering="auto"/>
<path d="M818.7,653.0 L821,650.7 L823.3,653.0 L821,655.3 Z" fill="#00ff00" shape-rendering="auto"/>
<polyline points="821,653 837,698 853,719.4 885,719.4 901,770.5 917,785" fill="none" stroke="#ff0000" stroke-width="1" shape-rendering="auto"/>
<path d="M818.7,653.0 L821,650.7 L823.3,653.0 L821,655.3 Z" fill="#ff0000" shape-rendering="auto"/>
<path d="M834.7,698.0 L837,695.7 L839.3,698.0 L837,700.3 Z" fill="#ff0000" shape-rendering="auto"/>
<path d="M850.7,719.4 L853,717.1 L855.3,719.4 L853,721.6999999999999 Z" fill="#ff0000" shape-rendering="auto"/>
<path d="M866.7,719.4 L869,717.1 L871.3,719.4 L869,721.6999999999999 Z" fill="#ff0000" shape-rendering="auto"/>
<path d="M882.7,719.4 L885,717.1 L887.3,719.4 L885,721.6999999999999 Z" fill="#ff0000" shape-rendering="auto"/>
<path d="M898.7,770.5 L901,768.2 L903.3,770.5 L901,772.8 Z" fill="#ff0000" shape-rendering="auto"/>
<path d="M914.7,785.0 L917,782.7 L919.3,785.0 L917,787.3 Z" fill="#ff0000" shape-rendering="auto"/>
<polyline points="917,785 933,741 949,719.4 1125,719.4 1141,667.4 1157,653" fill="none" stroke="#00ff00" stroke-width="1" shape-rendering="auto"/>
<path d="M930.7,741.0 L933,738.7 L935.3,741.0 L933,743.3 Z" fill="#00ff00" shape-rendering="auto"/>
<path d="M946.7,719.4 L949,717.1 L951.3,719.4 L949,721.6999999999999 Z" fill="#00ff00" shape-rendering="auto"/>
<path d="M962.7,719.4 L965,717.1 L967.3,719.4 L965,721.6999999999999 Z" fill="#00ff00" shape-rendering="auto"/>
<path d="M978.7,719.4 L981,717.1 L983.3,719.4 L981,721.6999999999999 Z" fill="#00ff00" shape-rendering="auto"/>
<path d="M994.7,719.4 L997,717.1 L999.3,719.4 L997,721.6999999999999 Z" fill="#00ff00" shape-rendering="auto"/>
<path d="M1010.7,719.4 L1013,717.1 L1015.3,719.4 L1013,721.6999999999999 Z" fill="#00ff00" shape-rendering="auto"/>
<path d="M1026.7,719.4 L1029,717.1 L1031.3,719.4 L1029,721.6999999999999 Z" fill="#00ff00" shape-rendering="auto"/>
<path d="M1042.7,719.4 L1045,717.1 L1047.3,719.4 L1045,721.6999999999999 Z" fill="#00ff00" shape-rendering="auto"/>
<path d="M1058.7,719.4 L1061,717.1 L1063.3,719.4 L1061,721.6999999999999 Z" fill="#00ff00" shape-rendering="auto"/>
<path d="M1074.7,719.4 L1077,717.1 L1079.3,719.4 L1077,721.6999999999999 Z" fill="#00ff00" shape-rendering="auto"/>
<path d="M1090.7,719.4 L1093,717.1 L1095.3,719.4 L1093,721.6999999999999 Z" fill="#00ff00" shape-rendering="auto"/>
<path d="M1106.7,719.4 L1109,717.1 L1111.3,719.4 L1109,721.6999999999999 Z" fill="#00ff00" shape-rendering="auto"/>
<path d="M1122.7,719.4 L1125,717.1 L1127.3,719.4 L1125,721.6999999999999 Z" fill="#00ff00" shape-rendering="auto"/>
<path d="M1138.7,667.4 L1141,665.1 L1143.3,667.4 L1141,669.6999999999999 Z" fill="#00ff00" shape-rendering="auto"/>
<path d="M1154.7,653.0 L1157,650.7 L1159.3,653.0 L1157,655.3 Z" fill="#00ff00" shape-rendering="auto"/>
<polyline points="1157,653 1173,698 1189,770.5 1205,785" fill="none" stroke="#ff0000" stroke-width="1" shape-rendering="auto"/>
<path d="M1154.7,653.0 L1157,650.7 L1159.3,653.0 L1157,655.3 Z" fill="#ff0000" shape-rendering="auto"/>
<path d="M1170.7,698.0 L1173,695.7 L1175.3,698.0 L1173,700.3 Z" fill="#ff0000" shape-rendering="auto"/>
<path d="M1186.7,770.5 L1189,768.2 L1191.3,770.5 L1189,772.8 Z" fill="#ff0000" shape-rendering="auto"/>
<path d="M1202.7,785.0 L1205,782.7 L1207.3,785.0 L1205,787.3 Z" fill="#ff0000" shape-rendering="auto"/>
<text x="10" y="657.8" font-size="9.3" fill="#fff" font-family="'Liberation Sans', sans-serif" text-anchor="start" textLength="192" lengthAdjust="spacingAndGlyphs">Elliot oscillator ( 3,21) 14.7921 10.3762 -5.6680</text>
<text x="209.4" y="657.8" font-size="9.3" fill="#fff" font-family="'Liberation Sans', sans-serif" text-anchor="start" textLength="107.4" lengthAdjust="spacingAndGlyphs">schaff-trend-cycle 89.4317</text>
<text x="324" y="657.8" font-size="9.3" fill="#fff" font-family="'Liberation Sans', sans-serif" text-anchor="start" textLength="136.6" lengthAdjust="spacingAndGlyphs">CycleIdentifier 0.0000 1787.7172</text>
<text x="467.3" y="657.8" font-size="9.3" fill="#fff" font-family="'Liberation Sans', sans-serif" text-anchor="start" textLength="307.3" lengthAdjust="spacingAndGlyphs">Its life Jim, but not as we know it...  -90.0000 -90.0000 -90.0000 -90.0000</text>
<text x="781.8" y="657.8" font-size="9.3" fill="#fff" font-family="'Liberation Sans', sans-serif" text-anchor="start" textLength="128.8" lengthAdjust="spacingAndGlyphs">KDJ 49.9320 70.5647 111.8300</text>
<text x="917" y="657.8" font-size="9.3" fill="#fff" font-family="'Liberation Sans', sans-serif" text-anchor="start" textLength="73" lengthAdjust="spacingAndGlyphs">GOLD(10) 5.0000</text>
</g>
<text x="1551" y="473.5" font-size="9" fill="#fff" font-family="'Liberation Sans', sans-serif" text-anchor="start">69.4368</text>
<rect x="1549" y="482" width="12" height="10" fill="#345858"/>
<text x="1550" y="490.5" font-size="9" fill="#000" font-family="'Liberation Sans', sans-serif" text-anchor="start">75</text>
<rect x="1549" y="516" width="12" height="10" fill="#345858"/>
<text x="1550" y="524.5" font-size="9" fill="#000" font-family="'Liberation Sans', sans-serif" text-anchor="start">50</text>
<rect x="1549" y="551" width="12" height="10" fill="#345858"/>
<text x="1550" y="559.5" font-size="9" fill="#000" font-family="'Liberation Sans', sans-serif" text-anchor="start">25</text>
<text x="1562" y="561.5" font-size="9" fill="#fff" font-family="'Liberation Sans', sans-serif" text-anchor="start">.1447</text>
<text x="1551" y="577.5" font-size="9" fill="#fff" font-family="'Liberation Sans', sans-serif" text-anchor="start">185.2178</text>
<text x="1551" y="577.5" font-size="9" fill="#fff" font-family="'Liberation Sans', sans-serif" text-anchor="start">225</text>
<text x="1551" y="599.5" font-size="9" fill="#fff" font-family="'Liberation Sans', sans-serif" text-anchor="start">0.00</text>
<line x1="1548" y1="596.5" x2="1550" y2="596.5" stroke="#fff" stroke-width="1"/>
<text x="1551" y="615.5" font-size="9" fill="#fff" font-family="'Liberation Sans', sans-serif" text-anchor="start">-185.8338</text>
<text x="1551" y="618.0" font-size="9" fill="#fff" font-family="'Liberation Sans', sans-serif" text-anchor="start">-102</text>
<text x="1551" y="630.5" font-size="9" fill="#fff" font-family="'Liberation Sans', sans-serif" text-anchor="start">100</text>
<text x="1551" y="635.5" font-size="9" fill="#fff" font-family="'Liberation Sans', sans-serif" text-anchor="start">0.00</text>
<text x="1551" y="640.5" font-size="9" fill="#fff" font-family="'Liberation Sans', sans-serif" text-anchor="start">-100</text>
<line x1="1548" y1="632.5" x2="1550" y2="632.5" stroke="#fff" stroke-width="1"/>
<text x="1551" y="655.5" font-size="9" fill="#fff" font-family="'Liberation Sans', sans-serif" text-anchor="start">24.7106</text>
<text x="1551" y="749.5" font-size="9" fill="#fff" font-family="'Liberation Sans', sans-serif" text-anchor="start">0.00</text>
<line x1="1548" y1="746.5" x2="1550" y2="746.5" stroke="#fff" stroke-width="1"/>
<text x="1551" y="791.5" font-size="9" fill="#fff" font-family="'Liberation Sans', sans-serif" text-anchor="start">-11.8691</text>
<line x1="5.5" y1="795" x2="5.5" y2="798" stroke="#fff" stroke-width="1"/>
<text x="5" y="806.7" font-size="9" fill="#fff" font-family="'Liberation Sans', sans-serif" text-anchor="start">15 Dec 2021</text>
<line x1="69.5" y1="795" x2="69.5" y2="798" stroke="#fff" stroke-width="1"/>
<text x="69" y="806.7" font-size="9" fill="#fff" font-family="'Liberation Sans', sans-serif" text-anchor="start">15 Dec 16:00</text>
<line x1="133.5" y1="795" x2="133.5" y2="798" stroke="#fff" stroke-width="1"/>
<text x="133" y="806.7" font-size="9" fill="#fff" font-family="'Liberation Sans', sans-serif" text-anchor="start">16 Dec 08:00</text>
<line x1="197.5" y1="795" x2="197.5" y2="798" stroke="#fff" stroke-width="1"/>
<text x="197" y="806.7" font-size="9" fill="#fff" font-family="'Liberation Sans', sans-serif" text-anchor="start">17 Dec 00:00</text>
<line x1="261.5" y1="795" x2="261.5" y2="798" stroke="#fff" stroke-width="1"/>
<text x="261" y="806.7" font-size="9" fill="#fff" font-family="'Liberation Sans', sans-serif" text-anchor="start">17 Dec 16:00</text>
<line x1="325.5" y1="795" x2="325.5" y2="798" stroke="#fff" stroke-width="1"/>
<text x="325" y="806.7" font-size="9" fill="#fff" font-family="'Liberation Sans', sans-serif" text-anchor="start">20 Dec 08:00</text>
<line x1="389.5" y1="795" x2="389.5" y2="798" stroke="#fff" stroke-width="1"/>
<text x="389" y="806.7" font-size="9" fill="#fff" font-family="'Liberation Sans', sans-serif" text-anchor="start">21 Dec 00:00</text>
<line x1="453.5" y1="795" x2="453.5" y2="798" stroke="#fff" stroke-width="1"/>
<text x="453" y="806.7" font-size="9" fill="#fff" font-family="'Liberation Sans', sans-serif" text-anchor="start">21 Dec 16:00</text>
<line x1="517.5" y1="795" x2="517.5" y2="798" stroke="#fff" stroke-width="1"/>
<text x="517" y="806.7" font-size="9" fill="#fff" font-family="'Liberation Sans', sans-serif" text-anchor="start">22 Dec 08:00</text>
<line x1="581.5" y1="795" x2="581.5" y2="798" stroke="#fff" stroke-width="1"/>
<text x="581" y="806.7" font-size="9" fill="#fff" font-family="'Liberation Sans', sans-serif" text-anchor="start">23 Dec 00:00</text>
<line x1="645.5" y1="795" x2="645.5" y2="798" stroke="#fff" stroke-width="1"/>
<text x="645" y="806.7" font-size="9" fill="#fff" font-family="'Liberation Sans', sans-serif" text-anchor="start">23 Dec 16:00</text>
<line x1="709.5" y1="795" x2="709.5" y2="798" stroke="#fff" stroke-width="1"/>
<text x="709" y="806.7" font-size="9" fill="#fff" font-family="'Liberation Sans', sans-serif" text-anchor="start">27 Dec 08:00</text>
<line x1="773.5" y1="795" x2="773.5" y2="798" stroke="#fff" stroke-width="1"/>
<text x="773" y="806.7" font-size="9" fill="#fff" font-family="'Liberation Sans', sans-serif" text-anchor="start">28 Dec 00:00</text>
<line x1="837.5" y1="795" x2="837.5" y2="798" stroke="#fff" stroke-width="1"/>
<text x="837" y="806.7" font-size="9" fill="#fff" font-family="'Liberation Sans', sans-serif" text-anchor="start">28 Dec 16:00</text>
<line x1="901.5" y1="795" x2="901.5" y2="798" stroke="#fff" stroke-width="1"/>
<text x="901" y="806.7" font-size="9" fill="#fff" font-family="'Liberation Sans', sans-serif" text-anchor="start">29 Dec 08:00</text>
<line x1="965.5" y1="795" x2="965.5" y2="798" stroke="#fff" stroke-width="1"/>
<text x="965" y="806.7" font-size="9" fill="#fff" font-family="'Liberation Sans', sans-serif" text-anchor="start">30 Dec 00:00</text>
<line x1="1029.5" y1="795" x2="1029.5" y2="798" stroke="#fff" stroke-width="1"/>
<text x="1029" y="806.7" font-size="9" fill="#fff" font-family="'Liberation Sans', sans-serif" text-anchor="start">30 Dec 16:00</text>
<line x1="1093.5" y1="795" x2="1093.5" y2="798" stroke="#fff" stroke-width="1"/>
<text x="1093" y="806.7" font-size="9" fill="#fff" font-family="'Liberation Sans', sans-serif" text-anchor="start">31 Dec 08:00</text>
<line x1="1157.5" y1="795" x2="1157.5" y2="798" stroke="#fff" stroke-width="1"/>
<text x="1157" y="806.7" font-size="9" fill="#fff" font-family="'Liberation Sans', sans-serif" text-anchor="start">3 Jan 00:00</text>
<path d="M5,794 v-6 l6,6 z" fill="#8090a0"/>
<line x1="4" y1="101.5" x2="1548" y2="101.5" stroke="#ffffff" stroke-width="1"/>
<line x1="4" y1="461.5" x2="1548" y2="461.5" stroke="#ffffff" stroke-width="1"/>
<line x1="4.5" y1="101" x2="4.5" y2="462" stroke="#ffffff" stroke-width="1"/>
<line x1="1547.5" y1="101" x2="1547.5" y2="462" stroke="#ffffff" stroke-width="1"/>
<line x1="4" y1="463.5" x2="1548" y2="463.5" stroke="#ffffff" stroke-width="1"/>
<line x1="4" y1="565.5" x2="1548" y2="565.5" stroke="#ffffff" stroke-width="1"/>
<line x1="4.5" y1="463" x2="4.5" y2="566" stroke="#ffffff" stroke-width="1"/>
<line x1="1547.5" y1="463" x2="1547.5" y2="566" stroke="#ffffff" stroke-width="1"/>
<line x1="4" y1="567.5" x2="1548" y2="567.5" stroke="#ffffff" stroke-width="1"/>
<line x1="4" y1="618.5" x2="1548" y2="618.5" stroke="#ffffff" stroke-width="1"/>
<line x1="4.5" y1="567" x2="4.5" y2="619" stroke="#ffffff" stroke-width="1"/>
<line x1="1547.5" y1="567" x2="1547.5" y2="619" stroke="#ffffff" stroke-width="1"/>
<line x1="4" y1="620.5" x2="1548" y2="620.5" stroke="#ffffff" stroke-width="1"/>
<line x1="4" y1="643.5" x2="1548" y2="643.5" stroke="#ffffff" stroke-width="1"/>
<line x1="4.5" y1="620" x2="4.5" y2="644" stroke="#ffffff" stroke-width="1"/>
<line x1="1547.5" y1="620" x2="1547.5" y2="644" stroke="#ffffff" stroke-width="1"/>
<line x1="4" y1="645.5" x2="1548" y2="645.5" stroke="#ffffff" stroke-width="1"/>
<line x1="4" y1="794.5" x2="1548" y2="794.5" stroke="#ffffff" stroke-width="1"/>
<line x1="4.5" y1="645" x2="4.5" y2="795" stroke="#ffffff" stroke-width="1"/>
<line x1="1547.5" y1="645" x2="1547.5" y2="795" stroke="#ffffff" stroke-width="1"/>
<!-- top chrome -->
<rect x="0" y="0" width="1600" height="23" fill="#ffffff"/>
<circle cx="6.3" cy="14.6" r="4.3" fill="#e0202a" shape-rendering="auto"/>
<circle cx="13.7" cy="7.6" r="4.3" fill="#2a84f0" shape-rendering="auto"/>
<text x="23" y="15.7" font-size="12" fill="#000" font-family="'Liberation Sans', sans-serif" text-anchor="start" textLength="472" lengthAdjust="spacingAndGlyphs">24422954: AdmiralMarkets-Demo - Conta Demo - Admiral Markets Group AS - [GOLD,H4]</text>
<line x1="1479" y1="10.5" x2="1490" y2="10.5" stroke="#000" stroke-width="1"/>
<rect x="1524.5" y="7.5" width="8" height="8" fill="#fff" stroke="#000"/><path d="M1526.5,7.5 v-2 h8 v8 h-2" fill="none" stroke="#000"/>
<path d="M1570,5 l10,10 M1580,5 l-10,10" stroke="#000" stroke-width="1.1" shape-rendering="auto"/>
<rect x="0" y="23" width="1600" height="21" fill="#f0f0f0"/>
<g shape-rendering="auto"><rect x="5.5" y="26.5" width="10" height="7" rx="1" fill="#eaf3fc" stroke="#5b9bd5"/><rect x="8.5" y="31.5" width="10" height="7" rx="1" fill="#eaf3fc" stroke="#5b9bd5"/><path d="M10,36 l1.5,-2 l1.5,2 l1.5,-2 l1.5,2" stroke="#3a7bc8" fill="none" stroke-width="0.9"/></g>
<text x="28.5" y="37" font-size="12" fill="#000" font-family="'Liberation Sans', sans-serif" text-anchor="start" textLength="41" lengthAdjust="spacingAndGlyphs">Arquivo</text>
<text x="88" y="37" font-size="12" fill="#000" font-family="'Liberation Sans', sans-serif" text-anchor="start" textLength="29" lengthAdjust="spacingAndGlyphs">Exibir</text>
<text x="135" y="37" font-size="12" fill="#000" font-family="'Liberation Sans', sans-serif" text-anchor="start" textLength="32" lengthAdjust="spacingAndGlyphs">Inserir</text>
<text x="185" y="37" font-size="12" fill="#000" font-family="'Liberation Sans', sans-serif" text-anchor="start" textLength="43" lengthAdjust="spacingAndGlyphs">Gráficos</text>
<text x="246" y="37" font-size="12" fill="#000" font-family="'Liberation Sans', sans-serif" text-anchor="start" textLength="65" lengthAdjust="spacingAndGlyphs">Ferramentas</text>
<text x="328.5" y="37" font-size="12" fill="#000" font-family="'Liberation Sans', sans-serif" text-anchor="start" textLength="38" lengthAdjust="spacingAndGlyphs">Janelas</text>
<text x="384" y="37" font-size="12" fill="#000" font-family="'Liberation Sans', sans-serif" text-anchor="start" textLength="31" lengthAdjust="spacingAndGlyphs">Ajuda</text>
<rect x="1543.5" y="24.5" width="16.5" height="16.5" fill="#f2f2f2" stroke="#ffffff" stroke-width="1"/>
<rect x="1562.5" y="24.5" width="16.5" height="16.5" fill="#f2f2f2" stroke="#ffffff" stroke-width="1"/>
<rect x="1581.5" y="24.5" width="16.5" height="16.5" fill="#f2f2f2" stroke="#ffffff" stroke-width="1"/>
<rect x="1548" y="35" width="6" height="2" fill="#6a7a8c"/>
<path d="M1567.5,33 h5 v4 h-5 z M1569.5,32.5 v-2.5 h5 v4 h-1.5" fill="none" stroke="#6a7a8c" stroke-width="1.3"/>
<path d="M1587.5,30.5 l5.5,6 M1593,30.5 l-5.5,6" stroke="#6a7a8c" stroke-width="1.8" shape-rendering="auto"/>
<rect x="0" y="44" width="1600" height="53" fill="#f0f0f0"/>
<line x1="0" y1="43.5" x2="1600" y2="43.5" stroke="#a0a0a0" stroke-width="1"/>
<line x1="0" y1="44.5" x2="1600" y2="44.5" stroke="#ffffff" stroke-width="1"/>
<line x1="0" y1="70.5" x2="952" y2="70.5" stroke="#a0a0a0" stroke-width="1"/>
<line x1="0" y1="71.5" x2="952" y2="71.5" stroke="#ffffff" stroke-width="1"/>
<line x1="951.5" y1="45" x2="951.5" y2="70" stroke="#a0a0a0" stroke-width="1"/>
<line x1="563.5" y1="72" x2="563.5" y2="97" stroke="#a0a0a0" stroke-width="1"/>
<rect x="2" y="48" width="3" height="1" fill="#b0b0b0"/><rect x="2" y="50" width="3" height="1" fill="#b0b0b0"/><rect x="2" y="52" width="3" height="1" fill="#b0b0b0"/><rect x="2" y="54" width="3" height="1" fill="#b0b0b0"/><rect x="2" y="56" width="3" height="1" fill="#b0b0b0"/><rect x="2" y="58" width="3" height="1" fill="#b0b0b0"/><rect x="2" y="60" width="3" height="1" fill="#b0b0b0"/><rect x="2" y="62" width="3" height="1" fill="#b0b0b0"/><rect x="2" y="64" width="3" height="1" fill="#b0b0b0"/><rect x="2" y="66" width="3" height="1" fill="#b0b0b0"/>
<rect x="2" y="75" width="3" height="1" fill="#b0b0b0"/><rect x="2" y="77" width="3" height="1" fill="#b0b0b0"/><rect x="2" y="79" width="3" height="1" fill="#b0b0b0"/><rect x="2" y="81" width="3" height="1" fill="#b0b0b0"/><rect x="2" y="83" width="3" height="1" fill="#b0b0b0"/><rect x="2" y="85" width="3" height="1" fill="#b0b0b0"/><rect x="2" y="87" width="3" height="1" fill="#b0b0b0"/><rect x="2" y="89" width="3" height="1" fill="#b0b0b0"/><rect x="2" y="91" width="3" height="1" fill="#b0b0b0"/><rect x="2" y="93" width="3" height="1" fill="#b0b0b0"/>
<rect x="593" y="48" width="3" height="1" fill="#b0b0b0"/><rect x="593" y="50" width="3" height="1" fill="#b0b0b0"/><rect x="593" y="52" width="3" height="1" fill="#b0b0b0"/><rect x="593" y="54" width="3" height="1" fill="#b0b0b0"/><rect x="593" y="56" width="3" height="1" fill="#b0b0b0"/><rect x="593" y="58" width="3" height="1" fill="#b0b0b0"/><rect x="593" y="60" width="3" height="1" fill="#b0b0b0"/><rect x="593" y="62" width="3" height="1" fill="#b0b0b0"/><rect x="593" y="64" width="3" height="1" fill="#b0b0b0"/><rect x="593" y="66" width="3" height="1" fill="#b0b0b0"/>
<rect x="306" y="75" width="3" height="1" fill="#b0b0b0"/><rect x="306" y="77" width="3" height="1" fill="#b0b0b0"/><rect x="306" y="79" width="3" height="1" fill="#b0b0b0"/><rect x="306" y="81" width="3" height="1" fill="#b0b0b0"/><rect x="306" y="83" width="3" height="1" fill="#b0b0b0"/><rect x="306" y="85" width="3" height="1" fill="#b0b0b0"/><rect x="306" y="87" width="3" height="1" fill="#b0b0b0"/><rect x="306" y="89" width="3" height="1" fill="#b0b0b0"/><rect x="306" y="91" width="3" height="1" fill="#b0b0b0"/><rect x="306" y="93" width="3" height="1" fill="#b0b0b0"/>
<line x1="589.5" y1="45" x2="589.5" y2="70" stroke="#a0a0a0" stroke-width="1"/>
<line x1="302.5" y1="72" x2="302.5" y2="97" stroke="#a0a0a0" stroke-width="1"/>
<g shape-rendering="auto">
<rect x="11.5" y="51.5" width="12" height="9" rx="1" fill="#eaf3fc" stroke="#4a86c8"/><path d="M14.5,54 v5 M13,55.5 l1.5,-1.8 l1.5,1.8 M13,57.5 l1.5,1.8 l1.5,-1.8" stroke="#4a86c8" stroke-width="0.8" fill="none"/><path d="M20.2,55.0 h3.6 v3.7 h3.7 v3.6 h-3.7 v3.7 h-3.6 v-3.7 h-3.7 v-3.6 h3.7 z" fill="#22b422" stroke="#0a7a0a" stroke-width="0.7"/><path d="M32.5,57.0 h6.5 l-3.25,3.5 z" fill="#000"/>
<rect x="48.5" y="51.5" width="11" height="8" rx="1" fill="#eaf3fc" stroke="#4a86c8"/><rect x="52.5" y="56.5" width="11" height="8" rx="1" fill="#eaf3fc" stroke="#4a86c8"/><path d="M50.5,54.5 h6 M55,60.5 h6 M51.8,53.3 l-1.3,1.2 l1.3,1.2 M59.7,59.3 l1.3,1.2 l-1.3,1.2" stroke="#4a86c8" stroke-width="0.8" fill="none"/><path d="M69.5,57.0 h6.5 l-3.25,3.5 z" fill="#000"/>
<line x1="83.5" y1="48" x2="83.5" y2="68" stroke="#a0a0a0" stroke-width="1"/>
<rect x="92.5" y="50.5" width="15" height="15" rx="1.5" fill="#f4f8fc" stroke="#6aa0d8" stroke-width="1.2"/><path d="M97,57 l2.5,-4 l2.5,4 h-1.5 v2 h-2 v-2 z" fill="#1f9a1f"/><path d="M100,60 l2.5,4 l2.5,-4 h-1.5 v-2 h-2 v2 z" fill="#e05020"/>
<circle cx="128.5" cy="58" r="4.5" fill="none" stroke="#555" stroke-width="1.2"/><path d="M128.5,50.5 v15 M121,58 h15" stroke="#555" stroke-width="1.1"/>
<path d="M147,52 h5 l1.5,1.5 h5.5 v7 h-12 z" fill="#f0d878" stroke="#c8a830" stroke-width="0.8"/><path d="M159,56 l1.6,3.3 3.6,0.5 -2.6,2.5 0.6,3.6 -3.2,-1.7 -3.2,1.7 0.6,-3.6 -2.6,-2.5 3.6,-0.5 z" fill="#ffd83a" stroke="#c89820" stroke-width="0.8"/>
<rect x="176.5" y="51.5" width="14" height="12" rx="1" fill="#f4f8fc" stroke="#3a76c0" stroke-width="1.2"/><rect x="177" y="52" width="3" height="11" fill="#3a76c0"/><path d="M182,55 h7 M182,57.5 h7 M182,60 h7" stroke="#88a" stroke-width="0.8"/>
<rect x="204.5" y="50.5" width="12" height="11" fill="#f4f0e6" stroke="#b8a888"/><circle cx="212.5" cy="57" r="4.3" fill="#cfe6fa" fill-opacity="0.85" stroke="#6a9ad0" stroke-width="1.2"/><path d="M215.5,60.5 l4.5,4.5" stroke="#d8a020" stroke-width="2.2"/>
<line x1="229.5" y1="48" x2="229.5" y2="68" stroke="#a0a0a0" stroke-width="1"/>
<path d="M240.5,50.5 h7 l3,3 v10 h-10 z" fill="#fafafa" stroke="#777" stroke-width="0.9"/><path d="M242,55 h5 M242,57.5 h4" stroke="#777" stroke-width="0.8"/><path d="M247.7,56.8 h3.6 v3.4000000000000004 h3.4000000000000004 v3.6 h-3.4000000000000004 v3.4000000000000004 h-3.6 v-3.4000000000000004 h-3.4000000000000004 v-3.6 h3.4000000000000004 z" fill="#22b422" stroke="#0a7a0a" stroke-width="0.7"/>
<text x="258" y="60.7" font-size="12" fill="#000" font-family="'Liberation Sans', sans-serif" text-anchor="start" textLength="68" lengthAdjust="spacingAndGlyphs">Nova Ordem</text>
<path d="M339,58 l6,-7 l8,4 l-5,8 z" fill="#f0c040" stroke="#b88818" stroke-width="0.9"/><path d="M339,58 l9,5 l0,1.5 l-9,-5 z" fill="#c89828"/>
<rect x="369.5" y="50.5" width="9" height="9" fill="#4a9ae8" stroke="#2a6ab8"/><path d="M367,65 a3,3 0 0 1 1,-5.5 a4,4 0 0 1 7.5,-0.5 a3,3 0 0 1 3,6 z" fill="#e4eef8" stroke="#8aa8c8" stroke-width="0.8"/>
<circle cx="402" cy="58" r="7" fill="none" stroke="#a8c0e0" stroke-width="1.2"/><circle cx="402" cy="58" r="4" fill="none" stroke="#6a98d8" stroke-width="1.2"/><circle cx="402" cy="58" r="1.5" fill="#3a70c0"/><path d="M402,59 v6.5 q4,0 5,-4" stroke="#30a040" stroke-width="1.6" fill="none"/>
<ellipse cx="430" cy="54.5" rx="7.5" ry="3" fill="#4a9ae8" stroke="#2a6ab8" stroke-width="0.7"/><path d="M425.5,53 a4.5,3.5 0 0 1 9,0 z" fill="#5aaaf0"/><path d="M423,57 l7,7.5 l6,-6 l-5,-2.5 z" fill="#f4d050" stroke="#c8a020" stroke-width="0.7"/><circle cx="435" cy="62" r="3.6" fill="#e02818"/><rect x="433.6" y="60.6" width="2.8" height="2.8" fill="#fff"/>
<text x="442" y="60.7" font-size="12" fill="#000" font-family="'Liberation Sans', sans-serif" text-anchor="start" textLength="140" lengthAdjust="spacingAndGlyphs">Negociação Automatizada</text>
<path d="M605.5,52 V65 M603,62.5 H618" stroke="#444" stroke-width="1" fill="none"/><path d="M603.5,54 l2,-3 l2,3 z M616,60.5 l3,2 l-3,2 z" fill="#444"/><path d="M613.5,53 v8 M613.5,54.5 h2.5 M613.5,59.5 h-2.5" stroke="#1a8a1a" stroke-width="1.3" fill="none"/>
<rect x="627" y="46" width="25" height="23" fill="#f8f8f8" shape-rendering="crispEdges"/><path d="M627.5,69 V46.5 H652" fill="none" stroke="#a0a0a0" shape-rendering="crispEdges"/><path d="M651.5,47 V68.5 H628" fill="none" stroke="#ffffff" shape-rendering="crispEdges"/><path d="M634.5,52 V65 M632,62.5 H647" stroke="#444" stroke-width="1" fill="none"/><path d="M632.5,54 l2,-3 l2,3 z M645,60.5 l3,2 l-3,2 z" fill="#444"/><path d="M641.5,50.5 v11" stroke="#1a8a1a" stroke-width="1"/><rect x="639.5" y="52.5" width="4" height="7" fill="#20c020" stroke="#0a7a0a" stroke-width="0.8"/>
<path d="M661.5,52 V65 M659,62.5 H674" stroke="#444" stroke-width="1" fill="none"/><path d="M659.5,54 l2,-3 l2,3 z M672,60.5 l3,2 l-3,2 z" fill="#444"/><path d="M662.5,60.5 q4,-9 7,-5.5 l2.5,2.5" stroke="#1a8a1a" stroke-width="1.2" fill="none"/>
<line x1="684.5" y1="48" x2="684.5" y2="68" stroke="#a0a0a0" stroke-width="1"/>
<path d="M703.5,60.5 l5.5,5.5" stroke="#d8b030" stroke-width="2.6"/><circle cx="700" cy="56.5" r="5" fill="#d4e8fa" stroke="#4a8ad0" stroke-width="1.3"/><path d="M697.3,56.5 h5.4" stroke="#2a6ab8" stroke-width="1.5"/><path d="M700,53.8 v5.4" stroke="#2a6ab8" stroke-width="1.5"/>
<path d="M731.5,60.5 l5.5,5.5" stroke="#d8b030" stroke-width="2.6"/><circle cx="728" cy="56.5" r="5" fill="#d4e8fa" stroke="#4a8ad0" stroke-width="1.3"/><path d="M725.3,56.5 h5.4" stroke="#2a6ab8" stroke-width="1.5"/>
<rect x="749.5" y="50.5" width="7" height="7" fill="#3aa030" stroke="#2a8020" stroke-width="0.6"/><rect x="757.5" y="50.5" width="7" height="7" fill="#2a60d0" stroke="#1a40a0" stroke-width="0.6"/><rect x="749.5" y="58.5" width="7" height="7" fill="#2a60d0" stroke="#1a40a0" stroke-width="0.6"/><rect x="757.5" y="58.5" width="7" height="7" fill="#3aa030" stroke="#2a8020" stroke-width="0.6"/><path d="M751,55 h4 M759,55 h4 M751,63 h4 M759,63 h4" stroke="#fff" stroke-width="1.6"/>
<line x1="774.5" y1="48" x2="774.5" y2="68" stroke="#a0a0a0" stroke-width="1"/>
<path d="M785.5,52 V65 M783,62.5 H798" stroke="#444" stroke-width="1" fill="none"/><path d="M783.5,54 l2,-3 l2,3 z M796,60.5 l3,2 l-3,2 z" fill="#444"/><path d="M792.5,54 l4,3.5 l-4,3.5 z" fill="#30c030" stroke="#0a8a0a" stroke-width="0.7"/>
<rect x="807" y="46" width="25" height="23" fill="#f8f8f8" shape-rendering="crispEdges"/><path d="M807.5,69 V46.5 H832" fill="none" stroke="#a0a0a0" shape-rendering="crispEdges"/><path d="M831.5,47 V68.5 H808" fill="none" stroke="#ffffff" shape-rendering="crispEdges"/><path d="M814.5,52 V65 M812,62.5 H827" stroke="#444" stroke-width="1" fill="none"/><path d="M812.5,54 l2,-3 l2,3 z M825,60.5 l3,2 l-3,2 z" fill="#444"/><path d="M821.5,51 v11" stroke="#2a6ab8" stroke-width="1.2"/><path d="M823,57 l3.5,-2.5 v5 z M826,57 h2" fill="#d04010" stroke="#d04010" stroke-width="0.8"/>
<line x1="836.5" y1="48" x2="836.5" y2="68" stroke="#a0a0a0" stroke-width="1"/>
<path d="M847.5,50.5 h6 l3,3 v9 h-9 z" fill="#fafafa" stroke="#777" stroke-width="0.9"/><path d="M849.5,54 q1.5,-1.5 2,1 t2,1" stroke="#666" stroke-width="0.7" fill="none"/><path d="M854.7,56.5 h3.6 v3.7 h3.7 v3.6 h-3.7 v3.7 h-3.6 v-3.7 h-3.7 v-3.6 h3.7 z" fill="#22b422" stroke="#0a7a0a" stroke-width="0.7"/><path d="M865.5,57.0 h6.5 l-3.25,3.5 z" fill="#000"/>
<circle cx="890" cy="58" r="7.2" fill="#2a78e0" stroke="#1a50b0" stroke-width="0.8"/><circle cx="890" cy="58" r="5" fill="#eef4fc"/><path d="M890,54.5 v3.8 h2.8" stroke="#444" stroke-width="1" fill="none"/><path d="M902.5,57.0 h6.5 l-3.25,3.5 z" fill="#000"/>
<rect x="919.5" y="51.5" width="15" height="13" fill="#f8fbff" stroke="#3a76c0" stroke-width="1.2"/><rect x="920" y="52" width="14" height="2.2" fill="#5a9ae8"/><path d="M921.5,58 l2.5,-1 2,1 2.5,-1.5 2,0.5 2,-1.5" stroke="#c03020" stroke-width="1.1" fill="none"/><path d="M921.5,62.5 l2.5,-1 2,1 2.5,-2 2,1.5 2,-1" stroke="#20a030" stroke-width="1.1" fill="none"/><path d="M939.5,57.0 h6.5 l-3.25,3.5 z" fill="#000"/>
<circle cx="1555" cy="55.5" r="3.8" fill="#d4e8fa" stroke="#2a6ad0" stroke-width="1.6"/><path d="M1552.5,58.5 l-5,5" stroke="#2a6ad0" stroke-width="2.2"/>
<path d="M1571.5,59 a5.5,4.5 0 1 1 5,6 l-3.5,2.5 l0.5,-3 a5.5,4.5 0 0 1 -2,-5.5 z" fill="#e8e8e8" stroke="#b0b0b0" stroke-width="0.8"/><circle cx="1585.5" cy="55.3" r="8" fill="#e02818"/>
<text x="1585.5" y="60" font-size="13" fill="#fff" font-family="'Liberation Sans', sans-serif" text-anchor="middle">1</text>
<rect x="8" y="73" width="25" height="23" fill="#f8f8f8" shape-rendering="crispEdges"/><path d="M8.5,96 V73.5 H33" fill="none" stroke="#a0a0a0" shape-rendering="crispEdges"/><path d="M32.5,74 V95.5 H9" fill="none" stroke="#ffffff" shape-rendering="crispEdges"/>
<path d="M16.5,78 v12 l3,-3 l2.3,5 l2,-1 l-2.3,-4.8 h4 z" fill="#444"/>
<path d="M48.5,78 v15 M41,85.5 h15" stroke="#444" stroke-width="1"/><rect x="47" y="84" width="3" height="3" fill="#f0f0f0"/>
<line x1="65.5" y1="75" x2="65.5" y2="95" stroke="#a0a0a0" stroke-width="1"/>
<path d="M82.5,79 v13" stroke="#444" stroke-width="1.1"/><path d="M105,85.5 h12" stroke="#444" stroke-width="1.1"/><path d="M133,92 l12,-12" stroke="#444" stroke-width="1.1"/>
<path d="M158.5,88 l13,-8 M159.5,91 l13,-8 M160.5,94 l13,-8" stroke="#444" stroke-width="0.9" fill="none"/><path d="M161.5,93.5 l2,-9 M164.5,91.5 l2,-9 M167.5,89.5 l2,-9 M170.5,87.5 l1,-7" stroke="#444" stroke-width="0.8" fill="none"/>
<text x="170.5" y="96" font-size="6.5" fill="#333" font-family="'Liberation Sans', sans-serif" text-anchor="start" font-weight="bold">E</text>
<path d="M188,79.5 h13" stroke="#444" stroke-width="1" stroke-dasharray="1,1"/>
<path d="M188,83.5 h13" stroke="#444" stroke-width="1" stroke-dasharray="1,1"/>
<path d="M188,88.5 h13" stroke="#444" stroke-width="1" stroke-dasharray="1,1"/>
<text x="198" y="96" font-size="6.5" fill="#333" font-family="'Liberation Sans', sans-serif" text-anchor="start" font-weight="bold">F</text>
<text x="222.5" y="90" font-size="12.5" fill="#444" font-family="'Liberation Sans', sans-serif" text-anchor="middle">A</text>
<rect x="244.5" y="79.5" width="12" height="13" fill="none" stroke="#444" stroke-dasharray="1,1" shape-rendering="crispEdges"/>
<text x="250.5" y="90.5" font-size="11" fill="#444" font-family="'Liberation Sans', sans-serif" text-anchor="middle" font-weight="bold">T</text>
<path d="M272,82 l2.5,-2.5 l2.5,2.5 l-2.5,2.5 z M281,89 l2.5,-2.5 l2.5,2.5 l-2.5,2.5 z" fill="#444"/><path d="M274,87 l2,2 l4,-5" stroke="#444" stroke-width="1.2" fill="none"/><path d="M290.5,84.0 h6.5 l-3.25,3.5 z" fill="#000"/>
<rect x="452" y="73" width="25" height="23" fill="#f8f8f8" shape-rendering="crispEdges"/><path d="M452.5,96 V73.5 H477" fill="none" stroke="#a0a0a0" shape-rendering="crispEdges"/><path d="M476.5,74 V95.5 H453" fill="none" stroke="#ffffff" shape-rendering="crispEdges"/>
</g>
<text x="317.5" y="89" font-size="10" fill="#444" font-family="'Liberation Sans', sans-serif" text-anchor="start" textLength="13" lengthAdjust="spacingAndGlyphs">M1</text>
<text x="345" y="89" font-size="10" fill="#444" font-family="'Liberation Sans', sans-serif" text-anchor="start" textLength="13.5" lengthAdjust="spacingAndGlyphs">M5</text>
<text x="371" y="89" font-size="10" fill="#444" font-family="'Liberation Sans', sans-serif" text-anchor="start" textLength="18.5" lengthAdjust="spacingAndGlyphs">M15</text>
<text x="399" y="89" font-size="10" fill="#444" font-family="'Liberation Sans', sans-serif" text-anchor="start" textLength="18.5" lengthAdjust="spacingAndGlyphs">M30</text>
<text x="430" y="89" font-size="10" fill="#444" font-family="'Liberation Sans', sans-serif" text-anchor="start" textLength="12" lengthAdjust="spacingAndGlyphs">H1</text>
<text x="457" y="89" font-size="10" fill="#444" font-family="'Liberation Sans', sans-serif" text-anchor="start" textLength="13" lengthAdjust="spacingAndGlyphs">H4</text>
<text x="486" y="89" font-size="10" fill="#444" font-family="'Liberation Sans', sans-serif" text-anchor="start" textLength="12" lengthAdjust="spacingAndGlyphs">D1</text>
<text x="514" y="89" font-size="10" fill="#444" font-family="'Liberation Sans', sans-serif" text-anchor="start" textLength="14" lengthAdjust="spacingAndGlyphs">W1</text>
<text x="540.5" y="89" font-size="10" fill="#444" font-family="'Liberation Sans', sans-serif" text-anchor="start" textLength="15" lengthAdjust="spacingAndGlyphs">MN</text>
<!-- bottom -->
<rect x="0" y="816" width="1600" height="22" fill="#f0f0f0"/>
<line x1="0" y1="816.5" x2="1600" y2="816.5" stroke="#ffffff" stroke-width="1"/>
<line x1="0" y1="837.5" x2="1600" y2="837.5" stroke="#ffffff" stroke-width="1"/>
<rect x="0" y="838" width="1600" height="22" fill="#f0f0f0"/>
<rect x="1" y="817" width="1" height="20" fill="#808080"/>
<rect x="5" y="817" width="73" height="20" fill="#000"/>
<rect x="6" y="817" width="71" height="19" fill="#fff"/>
<text x="17" y="830.5" font-size="12" fill="#000" font-family="'Liberation Sans', sans-serif" text-anchor="start" textLength="49" lengthAdjust="spacingAndGlyphs">GOLD,H4</text>
<text x="89" y="830.5" font-size="12" fill="#6a6a6a" font-family="'Liberation Sans', sans-serif" text-anchor="start" textLength="61" lengthAdjust="spacingAndGlyphs">EURUSD,H1</text>
<line x1="162.5" y1="820" x2="162.5" y2="834" stroke="#808080" stroke-width="1"/>
<text x="172" y="830.5" font-size="12" fill="#6a6a6a" font-family="'Liberation Sans', sans-serif" text-anchor="start" textLength="63" lengthAdjust="spacingAndGlyphs">USDCHF,H4</text>
<line x1="246.5" y1="820" x2="246.5" y2="834" stroke="#808080" stroke-width="1"/>
<path d="M1571,822 v8 l-4,-4 z M1585,822 v8 l4,-4 z" fill="#909090" shape-rendering="auto"/>
<text x="3" y="854" font-size="12" fill="#000" font-family="'Liberation Sans', sans-serif" text-anchor="start" textLength="136" lengthAdjust="spacingAndGlyphs">Para o Ajuda, pressione F1</text>
<line x1="1124.5" y1="841" x2="1124.5" y2="857" stroke="#b0b0b0" stroke-width="1"/>
<line x1="1195.5" y1="841" x2="1195.5" y2="857" stroke="#b0b0b0" stroke-width="1"/>
<line x1="1266.5" y1="841" x2="1266.5" y2="857" stroke="#b0b0b0" stroke-width="1"/>
<line x1="1334.5" y1="841" x2="1334.5" y2="857" stroke="#b0b0b0" stroke-width="1"/>
<line x1="1404.5" y1="841" x2="1404.5" y2="857" stroke="#b0b0b0" stroke-width="1"/>
<line x1="1470.5" y1="841" x2="1470.5" y2="857" stroke="#b0b0b0" stroke-width="1"/>
<text x="1052.5" y="854" font-size="12" fill="#000" font-family="'Liberation Sans', sans-serif" text-anchor="start" textLength="59" lengthAdjust="spacingAndGlyphs">.12.22 04:00</text>
<text x="1130" y="854" font-size="12" fill="#000" font-family="'Liberation Sans', sans-serif" text-anchor="start" textLength="60" lengthAdjust="spacingAndGlyphs">O: 1789.450</text>
<text x="1201" y="854" font-size="12" fill="#000" font-family="'Liberation Sans', sans-serif" text-anchor="start" textLength="60" lengthAdjust="spacingAndGlyphs">H: 1790.620</text>
<text x="1272" y="854" font-size="12" fill="#000" font-family="'Liberation Sans', sans-serif" text-anchor="start" textLength="57" lengthAdjust="spacingAndGlyphs">L: 1787.300</text>
<text x="1340" y="854" font-size="12" fill="#000" font-family="'Liberation Sans', sans-serif" text-anchor="start" textLength="59" lengthAdjust="spacingAndGlyphs">C: 1787.670</text>
<text x="1410" y="854" font-size="12" fill="#000" font-family="'Liberation Sans', sans-serif" text-anchor="start" textLength="43" lengthAdjust="spacingAndGlyphs">V: 13704</text>
<text x="1504" y="854" font-size="12" fill="#000" font-family="'Liberation Sans', sans-serif" text-anchor="start" textLength="61" lengthAdjust="spacingAndGlyphs">17945/17 kb</text>
<rect x="1476" y="844" width="2" height="12" fill="#6b8e23"/>
<rect x="1479" y="844" width="2" height="12" fill="#6b8e23"/>
<rect x="1482" y="844" width="2" height="12" fill="#6b8e23"/>
<rect x="1485" y="844" width="2" height="12" fill="#6b8e23"/>
<rect x="1488" y="845" width="2" height="11" fill="#2f5f7f"/>
<rect x="1491" y="845" width="2" height="11" fill="#2f5f7f"/>
<rect x="1494" y="846" width="2" height="10" fill="#2f5f7f"/>
<rect x="1497" y="847" width="2" height="9" fill="#2f5f7f"/>
<rect x="1488" y="844" width="2" height="2" fill="#6b8e23"/>
<rect x="1491" y="844" width="2" height="3" fill="#6b8e23"/>
<rect x="1494" y="844" width="2" height="4" fill="#6b8e23"/>
<rect x="1497" y="844" width="2" height="5" fill="#6b8e23"/>
<rect x="676" y="832" width="376" height="28" fill="#ffffff"/>
<line x1="676" y1="832.5" x2="1052" y2="832.5" stroke="#a0a0a0" stroke-width="1"/>
<line x1="676.5" y1="832" x2="676.5" y2="860" stroke="#a0a0a0" stroke-width="1"/>
<line x1="1051.5" y1="832" x2="1051.5" y2="860" stroke="#a0a0a0" stroke-width="1"/>
<g shape-rendering="auto"><path d="M686,851.5 q2,-2 2,-6 a3.3,3.3 0 0 1 6.6,0 q0,4 2,6 z" fill="#e8b830" stroke="#c89818" stroke-width="0.6"/><circle cx="691.3" cy="853" r="1.3" fill="#c89818"/></g>
<text x="705" y="852" font-size="12" fill="#6a6a6a" font-family="'Liberation Sans', sans-serif" text-anchor="start" textLength="31" lengthAdjust="spacingAndGlyphs">Alerta</text>
<text x="979.5" y="852" font-size="12" fill="#808080" font-family="'Liberation Sans', sans-serif" text-anchor="start">?</text>
<path d="M1023,842 l10,10 M1033,842 l-10,10" stroke="#808080" stroke-width="1" shape-rendering="auto"/>
<!-- taskbar -->
<defs><linearGradient id="tb" x1="0" y1="0" x2="1" y2="0"><stop offset="0" stop-color="#20353e"/><stop offset="0.25" stop-color="#24353d"/><stop offset="0.40" stop-color="#2c383c"/><stop offset="0.50" stop-color="#383c3e"/><stop offset="0.56" stop-color="#3e3f3f"/><stop offset="0.62" stop-color="#3d3e3f"/><stop offset="0.655" stop-color="#2e3a44"/><stop offset="0.69" stop-color="#203246"/><stop offset="0.80" stop-color="#1b2a3c"/><stop offset="1" stop-color="#172334"/></linearGradient></defs>
<rect x="0" y="860" width="1600" height="40" fill="url(#tb)"/>
<g shape-rendering="auto">
<path d="M15.5,875 l6.5,-1 v6 h-6.5 z M23,873.8 l8.5,-1.3 v7.5 h-8.5 z M15.5,881 h6.5 v6 l-6.5,-1 z M23,881 h8.5 v7.5 l-8.5,-1.3 z" fill="#fff"/>
<rect x="65.6" y="875.9" width="8.8" height="7.4" fill="none" stroke="#fff" stroke-width="1.4"/><path d="M64,872.6 h11.6 M64,886.2 h11.6 M79,871.8 v15" stroke="#fff" stroke-width="1.4"/><rect x="77.2" y="876" width="3" height="3.2" fill="#fff"/>
<path d="M111,876.3 l12,-7.8 l12,7.8 v14.7 h-24 z" fill="#0a5cb8"/><path d="M114,876 h18 v6 l-9,5 l-9,-5 z" fill="#f4f8fc"/><path d="M111,876.3 l12,7.2 l12,-7.2 v14.7 h-24 z" fill="#28a4ea"/><path d="M111,891 l12,-7.5 l12,7.5 z" fill="#1a84dc"/><path d="M123,883.5 l12,-7.2 v14.7 z" fill="#3cc0f0"/>
<path d="M161,871 h8.5 l1.5,2.2 h11.5 v4 h-21.5 z" fill="#e8a818"/><rect x="161" y="873.2" width="21.5" height="13.5" rx="0.8" fill="#fcd064"/><path d="M161,880 h21.5 v6.7 h-21.5 z" fill="#f4c448"/><path d="M165.8,888.5 v-6 a1.5,1.5 0 0 1 1.5,-1.5 h9.7 a1.5,1.5 0 0 1 1.5,1.5 v6 h-3.3 v-4.3 h-6.1 v4.3 z" fill="#3a88e0"/>
<rect x="152" y="898" width="40" height="2" fill="#76b9ed"/>
<path d="M209,873.8 h23.2 v14.5 a3.3,3.3 0 0 1 -3.3,3.3 h-16.6 a3.3,3.3 0 0 1 -3.3,-3.3 z" fill="#f6f6f6"/><path d="M215.5,874 v-1.6 a2.5,2.5 0 0 1 2.5,-2.5 h5.4 a2.5,2.5 0 0 1 2.5,2.5 v1.6" fill="none" stroke="#28a0ec" stroke-width="1.9"/><rect x="216" y="878" width="4.2" height="4.2" fill="#f05022"/><rect x="221" y="878" width="4.2" height="4.2" fill="#7fba00"/><rect x="216" y="883" width="4.2" height="4.2" fill="#00a4ef"/><rect x="221" y="883" width="4.2" height="4.2" fill="#ffb900"/>
<path d="M261,869 h11 l5,5 v15 h-16 z" fill="#f8f8f8"/><path d="M272,869 v5 h5 z" fill="#c8c8c8"/>
<path d="M310,869 h11 l5,5 v15 h-16 z" fill="#f8f8f8"/><path d="M321,869 v5 h5 z" fill="#c8c8c8"/>
<path d="M408,869 h11 l5,5 v15 h-16 z" fill="#f8f8f8"/><path d="M419,869 v5 h5 z" fill="#c8c8c8"/>
<path d="M702,869 h11 l5,5 v15 h-16 z" fill="#f8f8f8"/><path d="M713,869 v5 h5 z" fill="#c8c8c8"/>
<rect x="356" y="868" width="24" height="24" fill="#0c0c0c"/><path d="M361.5,871 h7.5 l6.5,5 q1,2.5 -1,5 l-6.5,5.5 h-6.5 l6.5,-5.5 q1.5,-2 0,-4 z" fill="#e83838"/><rect x="356.5" y="887" width="23" height="4.5" fill="#f4f4f4"/><rect x="374.5" y="888" width="2" height="3" fill="#e8a020"/>
<defs><linearGradient id="edg" x1="0" y1="1" x2="1" y2="0"><stop offset="0" stop-color="#1668c8"/><stop offset="0.5" stop-color="#2a9ad8"/><stop offset="1" stop-color="#58d070"/></linearGradient></defs>
<circle cx="466" cy="879.5" r="12" fill="url(#edg)"/>
<path d="M454.3,882 a12,12 0 0 0 19,7.5 a9.5,9.5 0 0 1 -13,-6.5 a7,7 0 0 1 -0.5,-5 a10,10 0 0 0 -5.5,4 z" fill="#0c50a8"/>
<path d="M463.5,881.5 a5,4.5 0 0 1 9.5,-1.5 q0.5,3 -2.5,4 h-5 a4,4 0 0 1 -2,-2.5 z" fill="#25353d"/>
<defs><linearGradient id="cam" x1="0" y1="0" x2="0" y2="1"><stop offset="0" stop-color="#62bc1c"/><stop offset="1" stop-color="#3a9a0a"/></linearGradient></defs>
<rect x="503" y="868" width="24" height="24" rx="2.5" fill="url(#cam)"/><path d="M523,872.2 h-12.5 l-3,3 v9.6 l3,3 h12.5 l-3.5,-4.2 h-6.8 v-7.2 h6.8 z" fill="#fff"/><path d="M507.5,875.2 l3,-3 v15.6 l-3,-3 z" fill="#d8ecc8"/>
<rect x="552" y="868" width="24" height="24" rx="4.5" fill="#f84454"/><path d="M558.5,873.5 l8.5,6.5 l-8.5,6.5" fill="none" stroke="#fff" stroke-width="1.7" stroke-linejoin="miter"/><path d="M561,873.3 h2.5 a6.7,6.7 0 0 1 0,13.4 h-2.5" fill="none" stroke="#fff" stroke-width="1.7"/>
<rect x="601" y="868" width="24" height="24" fill="#ffffff"/><circle cx="612.8" cy="879.8" r="11.5" fill="#48d080"/>
<text x="612.5" y="884.5" font-size="12.5" fill="#fff" font-family="'Liberation Sans', sans-serif" text-anchor="middle" font-style="italic" font-weight="bold">SF</text>
<rect x="593" y="898" width="40" height="2" fill="#76b9ed"/>
<path d="M652,874 l9,-5 l8,2.5 v17 l-8,2.5 l-9,-5 l8,-1.5 v-11 z" fill="#e84818"/><path d="M652,874 v12 l4,-1.5 v-9 z" fill="#b82808"/><path d="M661,869 l8,2.5 v17 l-8,2.5 z" fill="#f06828"/>
<circle cx="759" cy="880" r="11.5" fill="#e8e8e8"/><path d="M759,880 L749,874.5 A11.5,11.5 0 0 1 769,874.5 Z" fill="#e84030"/><path d="M759,868.5 a11.5,11.5 0 0 1 10,17.2 L759,880 l10,-5.5 a11.5,11.5 0 0 0 -10,-6 z" fill="#e84030"/><path d="M749,874.3 A11.5,11.5 0 0 0 759,891.5 L764.5,883 L759,880 Z" fill="#30a850"/><path d="M769,874.3 H759 L764.5,883 L759,891.5 A11.5,11.5 0 0 0 769,874.3 Z" fill="#f8c018"/><circle cx="759" cy="880" r="5.2" fill="#fff"/><circle cx="759" cy="880" r="4.1" fill="#3a88f0"/>
<rect x="740" y="898" width="31" height="2" fill="#76b9ed"/>
<rect x="772" y="898" width="8" height="2" fill="#5a8ab8"/>
<circle cx="808" cy="880" r="11.5" fill="#f08010"/><path d="M808,868.5 a11.5,11.5 0 0 1 11.5,11.5 h-11.5 z" fill="#6a40d0"/><path d="M796.5,880 a11.5,11.5 0 0 0 11.5,11.5 v-11.5 z" fill="#f8a820"/><circle cx="808" cy="880" r="6.5" fill="#fff"/><circle cx="808" cy="879" r="1.8" fill="#303050"/><rect x="807.2" y="879.5" width="1.6" height="4" fill="#303050"/>
<ellipse cx="858" cy="880" rx="11.3" ry="11.5" fill="#e81828"/><ellipse cx="858" cy="880" rx="5.2" ry="8.8" fill="#3d3e3f"/>
<rect x="838" y="898" width="40" height="2" fill="#76b9ed"/>
<rect x="883" y="860" width="48" height="40" fill="#646667"/>
<circle cx="901.3" cy="885.2" r="6.4" fill="#d81e28"/><circle cx="912.7" cy="874.3" r="6.4" fill="#2080f8"/>
<rect x="883" y="898" width="48" height="2" fill="#76b9ed"/>
<rect x="1322.5" y="871.5" width="19" height="14" rx="1.5" fill="none" stroke="#fff" stroke-width="1.3"/><rect x="1325.5" y="876.5" width="6" height="5" fill="none" stroke="#fff" stroke-width="1.1"/><path d="M1325,874.5 h13 M1334,878 h4 M1334,881 h4 M1343,875 v9 a2,2 0 0 1 -2,2" stroke="#fff" stroke-width="1.1" fill="none"/>
<path d="M1363.5,883 l5.5,-5.5 l5.5,5.5" stroke="#fff" stroke-width="1.3" fill="none"/>
<path d="M1387,885 a3.5,3.5 0 0 1 0.5,-7 a5,5 0 0 1 9,-1 a4,4 0 0 1 3,8 z" fill="#f0f0f0"/>
<path d="M1417,870.5 l7,2 v6 q0,6 -7,9 q-7,-3 -7,-9 v-6 z" fill="#fff"/><path d="M1417,870.5 v17 M1410,878.5 h14" stroke="#1a2535" stroke-width="1.2"/><circle cx="1421.5" cy="885" r="3.8" fill="#20a040"/><path d="M1419.8,885 l1.3,1.3 l2.2,-2.4" stroke="#fff" stroke-width="1" fill="none"/>
<rect x="1436.5" y="873.5" width="11" height="8" fill="none" stroke="#fff" stroke-width="1.2"/><path d="M1442,882 v3 M1438,886.5 h8 M1434,871.5 h4 v4 h-4 z" stroke="#fff" stroke-width="1.1" fill="none"/>
<path d="M1459,877.5 h2.5 l3.5,-3.5 v11 l-3.5,-3.5 h-2.5 z" fill="none" stroke="#fff" stroke-width="1.1"/><path d="M1468,877.5 l4,4 M1472,877.5 l-4,4" stroke="#fff" stroke-width="1"/>
<path d="M1563,868.5 h14 v11 h-9 l-3,3 v-3 h-2 z" fill="#fff"/><path d="M1565.5,871.5 h9 M1565.5,874 h9 M1565.5,876.5 h6" stroke="#1a2535" stroke-width="0.9"/><circle cx="1575.5" cy="884" r="6" fill="#1a2232" stroke="#d8d8d8" stroke-width="1.2"/>
</g>
<text x="1575.5" y="888" font-size="10.5" fill="#fff" font-family="'Liberation Sans', sans-serif" text-anchor="middle" font-weight="bold">1</text>
<text x="1512" y="875" font-size="12" fill="#fff" font-family="'Liberation Sans', sans-serif" text-anchor="middle">13:36</text>
<text x="1512" y="891.5" font-size="12" fill="#fff" font-family="'Liberation Sans', sans-serif" text-anchor="middle">03/01/2022</text>
<line x1="1595.5" y1="860" x2="1595.5" y2="900" stroke="#6a7078" stroke-width="1"/>
<rect x="1598" y="99" width="2" height="717" fill="#c0c0c0"/>
<rect x="0" y="97" width="1600" height="1" fill="#aaaaaa"/>
<rect x="0" y="98" width="1600" height="1" fill="#8c8c8c"/>
</svg>
</body></html>
